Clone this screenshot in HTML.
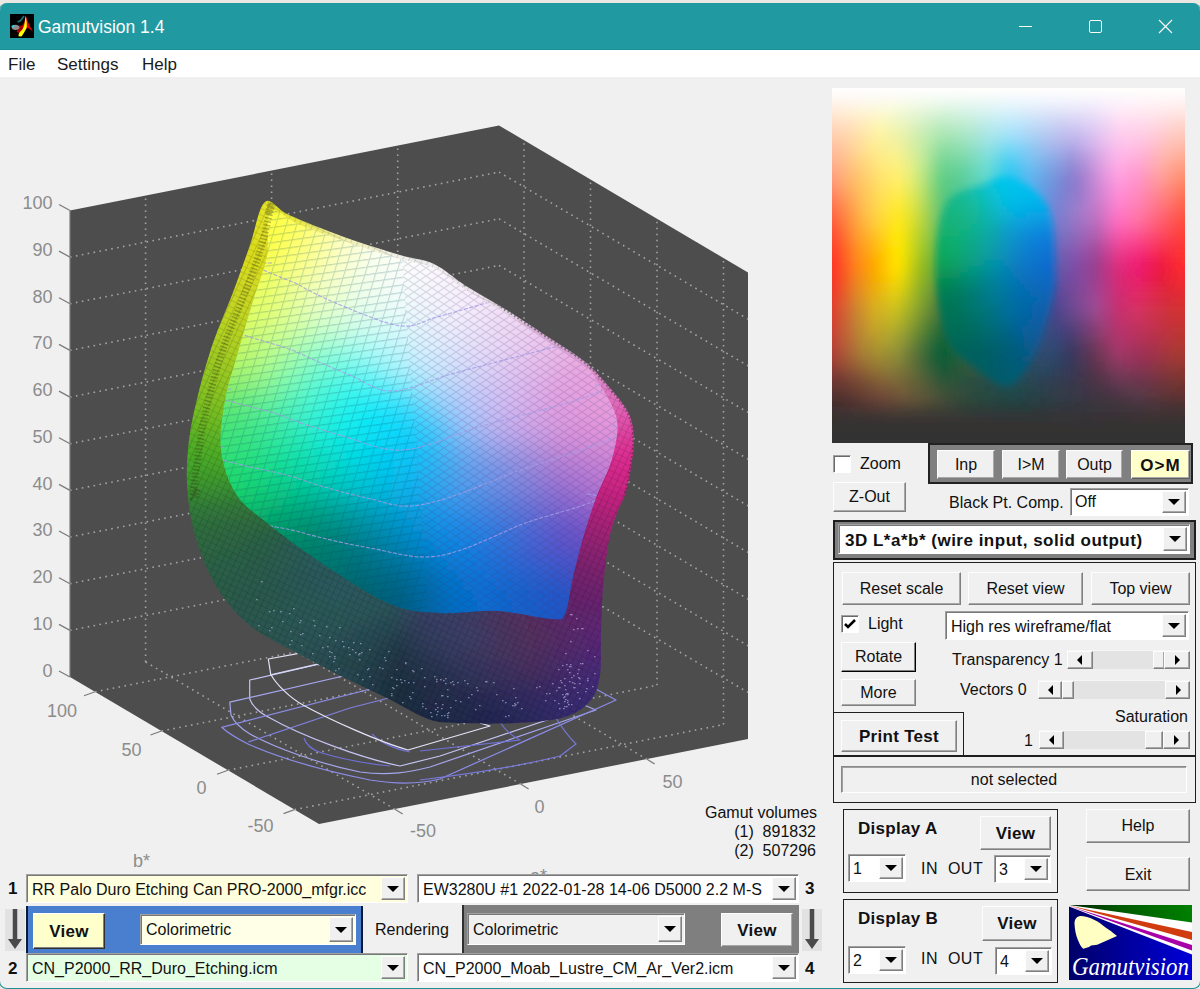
<!DOCTYPE html>
<html><head><meta charset="utf-8">
<style>
*{box-sizing:border-box;margin:0;padding:0}
html,body{width:1200px;height:989px;overflow:hidden;background:#ebe8e3;font-family:"Liberation Sans",sans-serif;}
.win{position:absolute;left:-1px;top:3px;width:1202px;height:986px;background:#f0f0f0;border-radius:8px;border:1px solid #1f8e95;border-top:none;overflow:hidden}
.title{position:absolute;left:0;top:0;width:1202px;height:47px;background:#2099a0;border-bottom:1px solid #1a9096}
.title .t{position:absolute;left:38px;top:14px;color:#fff;font-size:17.5px;}
.menu{position:absolute;left:0;top:47px;width:1202px;height:27px;background:#fff}
.menu span{position:absolute;top:5px;font-size:17px;color:#1a1a1a}
.a{position:absolute}
.txt{position:absolute;font-size:16px;color:#111;white-space:pre;line-height:1}
.bold{font-weight:bold;font-size:17px;letter-spacing:0.3px}
.btn{position:absolute;background:#f0f0f0;border:1px solid;border-color:#fdfdfd #808080 #808080 #fdfdfd;box-shadow:inset -1px -1px #a8a8a8;font-size:16px;color:#111;text-align:center;white-space:pre}
.btn span{position:absolute;left:0;right:0;line-height:1}
.sunk{position:absolute;border:1px solid;border-color:#a0a0a0 #fff #fff #a0a0a0;box-shadow:inset 1px 1px #787878;background:#fff}
.arrowbtn{position:absolute;top:2px;bottom:2px;right:2px;width:24px;background:#f0f0f0;border:1px solid;border-color:#fdfdfd #808080 #808080 #fdfdfd;box-shadow:inset -1px -1px #a8a8a8}
.arrowbtn:after{content:"";position:absolute;left:50%;top:50%;margin-left:-6px;margin-top:-3px;border-left:6px solid transparent;border-right:6px solid transparent;border-top:6px solid #000}
.frame{position:absolute;border:2px solid #1e1e1e}
.tl{font-size:18px;fill:#8c8c8c;font-family:"Liberation Sans",sans-serif}
.gd{stroke:#a4a4a4;stroke-width:1.6;stroke-dasharray:1.6 4.4;fill:none}
.ax{stroke:#7a7a7a;stroke-width:1.2}
.tk{stroke:#7a7a7a;stroke-width:1.2}
.cb{position:absolute;width:18px;height:18px;background:#fff;border:1px solid;border-color:#a0a0a0 #fff #fff #a0a0a0;box-shadow:inset 1px 1px #6a6a6a}
.slider{position:absolute;background:#e3e3e3;border-top:1px solid #f6f6f6}
.slider .sb{position:absolute;top:0;bottom:0;width:26px;background:#f0f0f0;border:1px solid;border-color:#fdfdfd #808080 #808080 #fdfdfd;box-shadow:inset -1px -1px #a8a8a8}
.sb.l:after{content:"";position:absolute;left:9px;top:50%;margin-top:-5px;border-top:5px solid transparent;border-bottom:5px solid transparent;border-right:5px solid #000}
.sb.r:after{content:"";position:absolute;left:10px;top:50%;margin-top:-5px;border-top:5px solid transparent;border-bottom:5px solid transparent;border-left:5px solid #000}
.thumb{position:absolute;top:0;bottom:0;background:#f0f0f0;border:1px solid;border-color:#fdfdfd #808080 #808080 #fdfdfd;box-shadow:inset -1px -1px #a8a8a8}
</style></head><body>
<div class="win">
  <div class="title">
    <svg class="a" style="left:9.5px;top:11px" width="24" height="24" viewBox="0 0 24 24">
      <rect width="24" height="24" fill="#000"/>
      <path d="M15.7,1 C17,6 19,11 23,17.5 L17.5,13.5 C15.5,16.5 12.5,18.5 9.5,19.5 L6.5,17.5 C9.5,14.5 12,12 14,9 C15,6 15.5,3.5 15.7,1 Z" fill="#e00000"/>
      <path d="M9,12 C11,11 13,12 13.5,14 C13,17 11,18.5 8.5,19 C7,17.5 7,14 9,12 Z" fill="#a80000"/>
      <path d="M15.5,2 C16.5,5 17,9 16.8,13 C16,16 13.5,19.5 11.5,22.5 L8.5,22.3 C8.3,19.5 10,17.5 12,16 C14,13.5 15,9 15.5,2 Z" fill="#ffff00"/>
      <ellipse cx="5.5" cy="13.3" rx="3.8" ry="2.6" fill="#8c8c8c"/>
      <path d="M1,12.3 L3.5,11 L5,11.5 L3,13.5 Z" fill="#20e0e8"/>
      <path d="M7.6,8 L10.6,6.5 L14,2" stroke="#157a7a" stroke-width="1.6" fill="none"/>
    </svg>
    <div class="t">Gamutvision 1.4</div>
    <svg class="a" style="left:999px;top:0" width="202" height="46">
      <line x1="20" y1="23.5" x2="33" y2="23.5" stroke="#fff" stroke-width="1"/>
      <rect x="90.5" y="17.5" width="12" height="12" rx="1.5" fill="none" stroke="#fff" stroke-width="1"/>
      <path d="M160 17 L173 30 M173 17 L160 30" stroke="#fff" stroke-width="1.1"/>
    </svg>
  </div>
  <div class="menu">
    <span style="left:8px">File</span>
    <span style="left:57px">Settings</span>
    <span style="left:142px">Help</span>
  </div>
</div>

<!-- plot -->
<svg class="a" style="left:0;top:0" width="830" height="989" viewBox="0 0 830 989">
<polygon points="70.0,210.5 499.0,125.5 748.0,272.5 748.0,739.0 319.0,824.0 70.0,677.0" fill="#4d4d4d"/>
<g><line x1="70.0" y1="630.4" x2="499.0" y2="545.4" class="gd"/><line x1="499.0" y1="545.4" x2="748.0" y2="692.4" class="gd"/><line x1="70.0" y1="583.7" x2="499.0" y2="498.7" class="gd"/><line x1="499.0" y1="498.7" x2="748.0" y2="645.7" class="gd"/><line x1="70.0" y1="537.0" x2="499.0" y2="452.1" class="gd"/><line x1="499.0" y1="452.1" x2="748.0" y2="599.0" class="gd"/><line x1="70.0" y1="490.4" x2="499.0" y2="405.4" class="gd"/><line x1="499.0" y1="405.4" x2="748.0" y2="552.4" class="gd"/><line x1="70.0" y1="443.8" x2="499.0" y2="358.8" class="gd"/><line x1="499.0" y1="358.8" x2="748.0" y2="505.8" class="gd"/><line x1="70.0" y1="397.1" x2="499.0" y2="312.1" class="gd"/><line x1="499.0" y1="312.1" x2="748.0" y2="459.1" class="gd"/><line x1="70.0" y1="350.4" x2="499.0" y2="265.4" class="gd"/><line x1="499.0" y1="265.4" x2="748.0" y2="412.4" class="gd"/><line x1="70.0" y1="303.8" x2="499.0" y2="218.8" class="gd"/><line x1="499.0" y1="218.8" x2="748.0" y2="365.8" class="gd"/><line x1="70.0" y1="257.1" x2="499.0" y2="172.1" class="gd"/><line x1="499.0" y1="172.1" x2="748.0" y2="319.1" class="gd"/><line x1="145.6" y1="662.0" x2="145.6" y2="195.5" class="gd"/><line x1="145.6" y1="662.0" x2="394.6" y2="809.0" class="gd"/><line x1="271.6" y1="637.0" x2="271.6" y2="170.5" class="gd"/><line x1="271.6" y1="637.0" x2="520.6" y2="784.0" class="gd"/><line x1="397.7" y1="612.1" x2="397.7" y2="145.6" class="gd"/><line x1="397.7" y1="612.1" x2="646.7" y2="759.1" class="gd"/><line x1="524.0" y1="606.8" x2="524.0" y2="140.3" class="gd"/><line x1="95.0" y1="691.8" x2="524.0" y2="606.8" class="gd"/><line x1="590.5" y1="646.0" x2="590.5" y2="179.5" class="gd"/><line x1="161.5" y1="731.0" x2="590.5" y2="646.0" class="gd"/><line x1="657.0" y1="685.3" x2="657.0" y2="218.8" class="gd"/><line x1="228.0" y1="770.3" x2="657.0" y2="685.3" class="gd"/><line x1="723.5" y1="724.6" x2="723.5" y2="258.1" class="gd"/><line x1="294.5" y1="809.6" x2="723.5" y2="724.6" class="gd"/></g>
<line x1="70.0" y1="677.0" x2="70.0" y2="210.5" class="ax"/>
<line x1="59.0" y1="671.0" x2="70.0" y2="677.0" class="tk"/><text x="52.5" y="676.7" text-anchor="end" class="tl">0</text><line x1="59.0" y1="624.4" x2="70.0" y2="630.4" class="tk"/><text x="52.5" y="629.9" text-anchor="end" class="tl">10</text><line x1="59.0" y1="577.7" x2="70.0" y2="583.7" class="tk"/><text x="52.5" y="583.2" text-anchor="end" class="tl">20</text><line x1="59.0" y1="531.0" x2="70.0" y2="537.0" class="tk"/><text x="52.5" y="536.4" text-anchor="end" class="tl">30</text><line x1="59.0" y1="484.4" x2="70.0" y2="490.4" class="tk"/><text x="52.5" y="489.6" text-anchor="end" class="tl">40</text><line x1="59.0" y1="437.8" x2="70.0" y2="443.8" class="tk"/><text x="52.5" y="442.8" text-anchor="end" class="tl">50</text><line x1="59.0" y1="391.1" x2="70.0" y2="397.1" class="tk"/><text x="52.5" y="396.1" text-anchor="end" class="tl">60</text><line x1="59.0" y1="344.4" x2="70.0" y2="350.4" class="tk"/><text x="52.5" y="349.3" text-anchor="end" class="tl">70</text><line x1="59.0" y1="297.8" x2="70.0" y2="303.8" class="tk"/><text x="52.5" y="302.5" text-anchor="end" class="tl">80</text><line x1="59.0" y1="251.1" x2="70.0" y2="257.1" class="tk"/><text x="52.5" y="255.8" text-anchor="end" class="tl">90</text><line x1="59.0" y1="204.5" x2="70.0" y2="210.5" class="tk"/><text x="52.5" y="209.0" text-anchor="end" class="tl">100</text><line x1="95.0" y1="691.8" x2="84.0" y2="695.8" class="tk"/><line x1="161.5" y1="731.0" x2="150.5" y2="735.0" class="tk"/><line x1="228.0" y1="770.3" x2="217.0" y2="774.3" class="tk"/><line x1="294.5" y1="809.6" x2="283.5" y2="813.6" class="tk"/><text x="77" y="716.5" text-anchor="end" class="tl">100</text><text x="141.5" y="755.5" text-anchor="end" class="tl">50</text><text x="206.5" y="793.5" text-anchor="end" class="tl">0</text><text x="273.5" y="832" text-anchor="end" class="tl">-50</text><line x1="394.6" y1="809.0" x2="402.6" y2="814.0" class="tk"/><line x1="520.6" y1="784.0" x2="528.6" y2="789.0" class="tk"/><line x1="646.7" y1="759.1" x2="654.7" y2="764.1" class="tk"/><text x="436" y="837" text-anchor="end" class="tl">-50</text><text x="544.5" y="812.5" text-anchor="end" class="tl">0</text><text x="682.5" y="787.5" text-anchor="end" class="tl">50</text>
<defs><linearGradient id="w0" gradientUnits="userSpaceOnUse" x1="170" x2="650" y1="0" y2="0"><stop offset="0" stop-color="#dede13"/><stop offset=".146" stop-color="#e1e11b"/><stop offset=".229" stop-color="#e6e62d"/><stop offset=".271" stop-color="#eaea43"/><stop offset=".312" stop-color="#eded68"/><stop offset=".354" stop-color="#efef93"/><stop offset=".396" stop-color="#f0f0b0"/><stop offset=".521" stop-color="#f0f0e9"/><stop offset=".625" stop-color="#eeebee"/><stop offset=".771" stop-color="#e8dde8"/><stop offset=".875" stop-color="#e6d5e5"/><stop offset=".958" stop-color="#d6aad0"/><stop offset="1" stop-color="#cc9ebd"/></linearGradient><linearGradient id="w1" gradientUnits="userSpaceOnUse" x1="170" x2="650" y1="0" y2="0"><stop offset="0" stop-color="#ddde14"/><stop offset=".167" stop-color="#e1e11d"/><stop offset=".229" stop-color="#e5e52d"/><stop offset=".271" stop-color="#e9e945"/><stop offset=".354" stop-color="#efef99"/><stop offset=".396" stop-color="#f0f0b3"/><stop offset=".5" stop-color="#f0f0e5"/><stop offset=".562" stop-color="#f0efef"/><stop offset=".771" stop-color="#e8dce8"/><stop offset=".854" stop-color="#e6d7e6"/><stop offset=".896" stop-color="#e1c4df"/><stop offset=".938" stop-color="#daafd6"/><stop offset="1" stop-color="#d5a5ce"/></linearGradient><linearGradient id="w2" gradientUnits="userSpaceOnUse" x1="170" x2="650" y1="0" y2="0"><stop offset="0" stop-color="#dcdd15"/><stop offset=".167" stop-color="#e0e01d"/><stop offset=".229" stop-color="#e4e52d"/><stop offset=".271" stop-color="#e9e947"/><stop offset=".354" stop-color="#efef9e"/><stop offset=".396" stop-color="#f0f0b7"/><stop offset=".5" stop-color="#f0f0e8"/><stop offset=".583" stop-color="#efedef"/><stop offset=".75" stop-color="#e8dde8"/><stop offset=".833" stop-color="#e7d8e6"/><stop offset=".875" stop-color="#e2c8e0"/><stop offset=".917" stop-color="#dbb1d8"/><stop offset="1" stop-color="#d7a7d3"/></linearGradient><linearGradient id="w3" gradientUnits="userSpaceOnUse" x1="170" x2="650" y1="0" y2="0"><stop offset="0" stop-color="#dadc16"/><stop offset=".167" stop-color="#dedf1d"/><stop offset=".229" stop-color="#e3e32c"/><stop offset=".271" stop-color="#e8e849"/><stop offset=".333" stop-color="#eeee90"/><stop offset=".375" stop-color="#f0f0b0"/><stop offset=".5" stop-color="#f0f0ea"/><stop offset=".583" stop-color="#efedee"/><stop offset=".729" stop-color="#e8dde8"/><stop offset=".833" stop-color="#e6d5e5"/><stop offset=".917" stop-color="#daadd6"/><stop offset="1" stop-color="#d8a8d4"/></linearGradient><linearGradient id="w4" gradientUnits="userSpaceOnUse" x1="170" x2="650" y1="0" y2="0"><stop offset="0" stop-color="#d8db18"/><stop offset=".167" stop-color="#ddde1c"/><stop offset=".229" stop-color="#e2e22c"/><stop offset=".25" stop-color="#e4e538"/><stop offset=".292" stop-color="#eaea63"/><stop offset=".333" stop-color="#eeee95"/><stop offset=".375" stop-color="#f0f0b3"/><stop offset=".479" stop-color="#f0f0e6"/><stop offset=".542" stop-color="#efefef"/><stop offset=".729" stop-color="#e8dde8"/><stop offset=".812" stop-color="#e6d7e6"/><stop offset=".854" stop-color="#e1c4df"/><stop offset=".896" stop-color="#daafd7"/><stop offset=".979" stop-color="#d8a8d4"/><stop offset="1" stop-color="#d8a8d4"/></linearGradient><linearGradient id="w5" gradientUnits="userSpaceOnUse" x1="170" x2="650" y1="0" y2="0"><stop offset="0" stop-color="#d5da1a"/><stop offset=".167" stop-color="#dbdd1c"/><stop offset=".229" stop-color="#e0e12b"/><stop offset=".25" stop-color="#e3e338"/><stop offset=".292" stop-color="#e9e966"/><stop offset=".333" stop-color="#eeee99"/><stop offset=".375" stop-color="#f0f0b6"/><stop offset=".479" stop-color="#f0f0e9"/><stop offset=".583" stop-color="#eeeaee"/><stop offset=".729" stop-color="#e8dce8"/><stop offset=".792" stop-color="#e7d8e7"/><stop offset=".833" stop-color="#e2c8e0"/><stop offset=".875" stop-color="#dbb1d8"/><stop offset=".938" stop-color="#d8a8d4"/><stop offset="1" stop-color="#d8a7d4"/></linearGradient><linearGradient id="w6" gradientUnits="userSpaceOnUse" x1="170" x2="650" y1="0" y2="0"><stop offset="0" stop-color="#d1d91c"/><stop offset=".188" stop-color="#dadc1f"/><stop offset=".229" stop-color="#dedf2a"/><stop offset=".25" stop-color="#e1e236"/><stop offset=".271" stop-color="#e4e54b"/><stop offset=".333" stop-color="#eeee9d"/><stop offset=".375" stop-color="#f0f0b9"/><stop offset=".458" stop-color="#f0f0e4"/><stop offset=".521" stop-color="#efefef"/><stop offset=".708" stop-color="#e8dde8"/><stop offset=".792" stop-color="#e6d5e5"/><stop offset=".875" stop-color="#daadd6"/><stop offset="1" stop-color="#d8a7d4"/></linearGradient><linearGradient id="w7" gradientUnits="userSpaceOnUse" x1="170" x2="650" y1="0" y2="0"><stop offset="0" stop-color="#cdd81e"/><stop offset=".188" stop-color="#d7db1f"/><stop offset=".229" stop-color="#dbde28"/><stop offset=".25" stop-color="#dee034"/><stop offset=".271" stop-color="#e2e349"/><stop offset=".312" stop-color="#ebeb86"/><stop offset=".333" stop-color="#edee9f"/><stop offset=".375" stop-color="#f0f0bc"/><stop offset=".458" stop-color="#f0f0e7"/><stop offset=".521" stop-color="#efeeef"/><stop offset=".708" stop-color="#e8dce8"/><stop offset=".771" stop-color="#e6d7e6"/><stop offset=".812" stop-color="#e1c4df"/><stop offset=".854" stop-color="#daafd7"/><stop offset=".958" stop-color="#d8a7d4"/><stop offset="1" stop-color="#d8a6d3"/></linearGradient><linearGradient id="w8" gradientUnits="userSpaceOnUse" x1="170" x2="650" y1="0" y2="0"><stop offset="0" stop-color="#c8d61f"/><stop offset=".208" stop-color="#d6db21"/><stop offset=".25" stop-color="#dbde31"/><stop offset=".271" stop-color="#dfe245"/><stop offset=".312" stop-color="#e9ea85"/><stop offset=".333" stop-color="#ededa0"/><stop offset=".375" stop-color="#eff0bf"/><stop offset=".438" stop-color="#f0f0e2"/><stop offset=".5" stop-color="#f0efee"/><stop offset=".688" stop-color="#e8dde8"/><stop offset=".771" stop-color="#e5d3e4"/><stop offset=".833" stop-color="#dbb1d8"/><stop offset=".896" stop-color="#d8a8d4"/><stop offset="1" stop-color="#d9a5d3"/></linearGradient><linearGradient id="w9" gradientUnits="userSpaceOnUse" x1="170" x2="650" y1="0" y2="0"><stop offset="0" stop-color="#c3d520"/><stop offset=".208" stop-color="#d2d921"/><stop offset=".25" stop-color="#d7dc2d"/><stop offset=".271" stop-color="#dcdf3f"/><stop offset=".333" stop-color="#ecec9f"/><stop offset=".375" stop-color="#efefc2"/><stop offset=".438" stop-color="#f0f0e5"/><stop offset=".5" stop-color="#efeeee"/><stop offset=".688" stop-color="#e8dce8"/><stop offset=".75" stop-color="#e6d5e5"/><stop offset=".833" stop-color="#daadd6"/><stop offset="1" stop-color="#d9a2d2"/></linearGradient><linearGradient id="w10" gradientUnits="userSpaceOnUse" x1="170" x2="650" y1="0" y2="0"><stop offset="0" stop-color="#bcd320"/><stop offset=".208" stop-color="#cfd820"/><stop offset=".25" stop-color="#d3da29"/><stop offset=".271" stop-color="#d7dd37"/><stop offset=".292" stop-color="#dde152"/><stop offset=".333" stop-color="#eaeb9b"/><stop offset=".375" stop-color="#efefc5"/><stop offset=".438" stop-color="#f0f0e8"/><stop offset=".521" stop-color="#eeecee"/><stop offset=".667" stop-color="#e8dce8"/><stop offset=".729" stop-color="#e6d7e6"/><stop offset=".771" stop-color="#e1c4df"/><stop offset=".812" stop-color="#daafd7"/><stop offset="1" stop-color="#da9fd1"/></linearGradient><linearGradient id="w11" gradientUnits="userSpaceOnUse" x1="170" x2="650" y1="0" y2="0"><stop offset="0" stop-color="#b7d220"/><stop offset=".229" stop-color="#ccd722"/><stop offset=".25" stop-color="#cfd825"/><stop offset=".271" stop-color="#d2db30"/><stop offset=".292" stop-color="#d8de46"/><stop offset=".333" stop-color="#e8ea93"/><stop offset=".354" stop-color="#ededb2"/><stop offset=".396" stop-color="#f0f0d7"/><stop offset=".438" stop-color="#f0f0ea"/><stop offset=".542" stop-color="#ede8ed"/><stop offset=".667" stop-color="#e8dce8"/><stop offset=".729" stop-color="#e5d3e4"/><stop offset=".792" stop-color="#dbb1d8"/><stop offset=".875" stop-color="#d8a7d4"/><stop offset=".979" stop-color="#da9fd1"/><stop offset="1" stop-color="#da9acf"/></linearGradient><linearGradient id="w12" gradientUnits="userSpaceOnUse" x1="170" x2="650" y1="0" y2="0"><stop offset="0" stop-color="#b2d020"/><stop offset=".25" stop-color="#c9d723"/><stop offset=".271" stop-color="#cdd829"/><stop offset=".292" stop-color="#d2db39"/><stop offset=".312" stop-color="#dae15a"/><stop offset=".354" stop-color="#ebecae"/><stop offset=".375" stop-color="#efefca"/><stop offset=".396" stop-color="#f0f0db"/><stop offset=".438" stop-color="#f0efeb"/><stop offset=".562" stop-color="#ebe3eb"/><stop offset=".708" stop-color="#e6d5e5"/><stop offset=".792" stop-color="#daadd6"/><stop offset=".958" stop-color="#da9fd1"/><stop offset="1" stop-color="#db94cd"/></linearGradient><linearGradient id="w13" gradientUnits="userSpaceOnUse" x1="170" x2="650" y1="0" y2="0"><stop offset="0" stop-color="#adcf20"/><stop offset=".25" stop-color="#c3d521"/><stop offset=".292" stop-color="#cbd82f"/><stop offset=".312" stop-color="#d2dd47"/><stop offset=".333" stop-color="#dee473"/><stop offset=".354" stop-color="#e8eba6"/><stop offset=".375" stop-color="#eeeecb"/><stop offset=".396" stop-color="#eff0de"/><stop offset=".438" stop-color="#f0efec"/><stop offset=".562" stop-color="#eae2ea"/><stop offset=".688" stop-color="#e6d7e6"/><stop offset=".729" stop-color="#e1c4df"/><stop offset=".771" stop-color="#daafd7"/><stop offset=".938" stop-color="#da9ed1"/><stop offset="1" stop-color="#dc8dcb"/></linearGradient><linearGradient id="w14" gradientUnits="userSpaceOnUse" x1="170" x2="650" y1="0" y2="0"><stop offset="0" stop-color="#a7cd20"/><stop offset=".271" stop-color="#bfd422"/><stop offset=".292" stop-color="#c3d527"/><stop offset=".312" stop-color="#c9d836"/><stop offset=".333" stop-color="#d4df5b"/><stop offset=".354" stop-color="#e3e897"/><stop offset=".375" stop-color="#ecedc9"/><stop offset=".396" stop-color="#efefe1"/><stop offset=".438" stop-color="#f0efed"/><stop offset=".667" stop-color="#e7d8e7"/><stop offset=".708" stop-color="#e2c8e0"/><stop offset=".75" stop-color="#dbb1d8"/><stop offset=".833" stop-color="#d8a7d4"/><stop offset=".917" stop-color="#da9ed1"/><stop offset="1" stop-color="#dd87c9"/></linearGradient><linearGradient id="w15" gradientUnits="userSpaceOnUse" x1="170" x2="650" y1="0" y2="0"><stop offset="0" stop-color="#a0cb20"/><stop offset=".292" stop-color="#bbd323"/><stop offset=".312" stop-color="#c0d52a"/><stop offset=".333" stop-color="#c9d943"/><stop offset=".354" stop-color="#d9e37e"/><stop offset=".375" stop-color="#e9ecc2"/><stop offset=".396" stop-color="#efefe1"/><stop offset=".417" stop-color="#f0efeb"/><stop offset=".521" stop-color="#ece5ec"/><stop offset=".667" stop-color="#e6d5e5"/><stop offset=".75" stop-color="#daadd6"/><stop offset=".896" stop-color="#da9ed1"/><stop offset="1" stop-color="#de81c7"/></linearGradient><linearGradient id="w16" gradientUnits="userSpaceOnUse" x1="170" x2="650" y1="0" y2="0"><stop offset="0" stop-color="#98c820"/><stop offset=".292" stop-color="#b5d121"/><stop offset=".312" stop-color="#b8d224"/><stop offset=".333" stop-color="#bed531"/><stop offset=".354" stop-color="#cddd5f"/><stop offset=".375" stop-color="#e3e9b2"/><stop offset=".396" stop-color="#edeee0"/><stop offset=".417" stop-color="#efefeb"/><stop offset=".521" stop-color="#ebe4eb"/><stop offset=".646" stop-color="#e6d7e6"/><stop offset=".688" stop-color="#e1c4df"/><stop offset=".729" stop-color="#daafd7"/><stop offset=".875" stop-color="#da9ed0"/><stop offset="1" stop-color="#df7cc5"/></linearGradient><linearGradient id="w17" gradientUnits="userSpaceOnUse" x1="170" x2="650" y1="0" y2="0"><stop offset="0" stop-color="#8fc520"/><stop offset=".271" stop-color="#afcf20"/><stop offset=".333" stop-color="#b6d227"/><stop offset=".354" stop-color="#c0d742"/><stop offset=".375" stop-color="#d8e394"/><stop offset=".396" stop-color="#ebedd9"/><stop offset=".417" stop-color="#efeeeb"/><stop offset=".521" stop-color="#ebe2eb"/><stop offset=".646" stop-color="#e5d3e4"/><stop offset=".708" stop-color="#dbb1d8"/><stop offset=".771" stop-color="#d8a7d4"/><stop offset=".875" stop-color="#db98ce"/><stop offset=".979" stop-color="#df7bc4"/><stop offset="1" stop-color="#df78c3"/></linearGradient><linearGradient id="w18" gradientUnits="userSpaceOnUse" x1="170" x2="650" y1="0" y2="0"><stop offset="0" stop-color="#88c320"/><stop offset=".333" stop-color="#b0d023"/><stop offset=".354" stop-color="#b5d230"/><stop offset=".375" stop-color="#cadc6d"/><stop offset=".396" stop-color="#e5eaca"/><stop offset=".417" stop-color="#eeede9"/><stop offset=".458" stop-color="#eeeaed"/><stop offset=".625" stop-color="#e6d5e5"/><stop offset=".708" stop-color="#daadd6"/><stop offset=".833" stop-color="#da9dd0"/><stop offset=".958" stop-color="#df79c3"/><stop offset="1" stop-color="#e074c1"/></linearGradient><linearGradient id="w19" gradientUnits="userSpaceOnUse" x1="170" x2="650" y1="0" y2="0"><stop offset="0" stop-color="#82c020"/><stop offset=".333" stop-color="#aace21"/><stop offset=".354" stop-color="#adcf26"/><stop offset=".375" stop-color="#bbd549"/><stop offset=".396" stop-color="#dbe5ac"/><stop offset=".417" stop-color="#ecece4"/><stop offset=".438" stop-color="#eeebed"/><stop offset=".604" stop-color="#e7d7e6"/><stop offset=".646" stop-color="#e1c4df"/><stop offset=".688" stop-color="#daafd7"/><stop offset=".833" stop-color="#db96ce"/><stop offset=".938" stop-color="#df76c1"/><stop offset="1" stop-color="#e06ebd"/></linearGradient><linearGradient id="w20" gradientUnits="userSpaceOnUse" x1="170" x2="650" y1="0" y2="0"><stop offset="0" stop-color="#7cbe21"/><stop offset=".208" stop-color="#91c620"/><stop offset=".354" stop-color="#a6cd22"/><stop offset=".375" stop-color="#aed032"/><stop offset=".396" stop-color="#cadd80"/><stop offset=".417" stop-color="#e7e9d8"/><stop offset=".438" stop-color="#edeaeb"/><stop offset=".583" stop-color="#e7d9e7"/><stop offset=".625" stop-color="#e2c8e0"/><stop offset=".667" stop-color="#dbb1d7"/><stop offset=".812" stop-color="#db95cd"/><stop offset=".917" stop-color="#df72bf"/><stop offset="1" stop-color="#e067b9"/></linearGradient><linearGradient id="w21" gradientUnits="userSpaceOnUse" x1="170" x2="650" y1="0" y2="0"><stop offset="0" stop-color="#74bc22"/><stop offset=".25" stop-color="#8dc420"/><stop offset=".354" stop-color="#9dca21"/><stop offset=".375" stop-color="#a2cb27"/><stop offset=".396" stop-color="#b5d353"/><stop offset=".417" stop-color="#dde4bd"/><stop offset=".438" stop-color="#ebe8e7"/><stop offset=".479" stop-color="#ebe3ea"/><stop offset=".583" stop-color="#e6d5e5"/><stop offset=".667" stop-color="#daacd6"/><stop offset=".771" stop-color="#da9ace"/><stop offset=".875" stop-color="#df72be"/><stop offset="1" stop-color="#e05db2"/></linearGradient><linearGradient id="w22" gradientUnits="userSpaceOnUse" x1="170" x2="650" y1="0" y2="0"><stop offset="0" stop-color="#6bb823"/><stop offset=".292" stop-color="#88c321"/><stop offset=".375" stop-color="#96c723"/><stop offset=".396" stop-color="#a1cb36"/><stop offset=".417" stop-color="#c7d88f"/><stop offset=".438" stop-color="#e5e3db"/><stop offset=".458" stop-color="#e9e3e8"/><stop offset=".562" stop-color="#e7d7e6"/><stop offset=".604" stop-color="#e1c4df"/><stop offset=".646" stop-color="#daaed6"/><stop offset=".75" stop-color="#da97cd"/><stop offset=".854" stop-color="#de6bb9"/><stop offset=".958" stop-color="#df56ae"/><stop offset="1" stop-color="#df51aa"/></linearGradient><linearGradient id="w23" gradientUnits="userSpaceOnUse" x1="170" x2="650" y1="0" y2="0"><stop offset="0" stop-color="#60b424"/><stop offset=".354" stop-color="#86c221"/><stop offset=".396" stop-color="#8fc329"/><stop offset=".417" stop-color="#a5c65c"/><stop offset=".438" stop-color="#d0d3bc"/><stop offset=".458" stop-color="#e2dbde"/><stop offset=".5" stop-color="#e7dce7"/><stop offset=".562" stop-color="#e5d3e4"/><stop offset=".625" stop-color="#dbb0d7"/><stop offset=".729" stop-color="#da92ca"/><stop offset=".833" stop-color="#de60b2"/><stop offset=".958" stop-color="#df4aa5"/><stop offset="1" stop-color="#df45a2"/></linearGradient><linearGradient id="w24" gradientUnits="userSpaceOnUse" x1="170" x2="650" y1="0" y2="0"><stop offset="0" stop-color="#56b025"/><stop offset=".375" stop-color="#7bbb24"/><stop offset=".396" stop-color="#78b32c"/><stop offset=".417" stop-color="#73a047"/><stop offset=".438" stop-color="#869b7c"/><stop offset=".458" stop-color="#b2b4b0"/><stop offset=".479" stop-color="#d2cacf"/><stop offset=".5" stop-color="#dfd4dd"/><stop offset=".542" stop-color="#e4d3e3"/><stop offset=".583" stop-color="#dfbfdc"/><stop offset=".625" stop-color="#daa9d4"/><stop offset=".688" stop-color="#d995ca"/><stop offset=".792" stop-color="#dc5bad"/><stop offset=".875" stop-color="#dd47a2"/><stop offset="1" stop-color="#de3a9b"/></linearGradient><linearGradient id="w25" gradientUnits="userSpaceOnUse" x1="170" x2="650" y1="0" y2="0"><stop offset="0" stop-color="#4dac27"/><stop offset=".333" stop-color="#69b524"/><stop offset=".354" stop-color="#68b227"/><stop offset=".375" stop-color="#60a430"/><stop offset=".417" stop-color="#3e6e54"/><stop offset=".438" stop-color="#3c665e"/><stop offset=".458" stop-color="#4c6c69"/><stop offset=".479" stop-color="#738483"/><stop offset=".5" stop-color="#a9a8ac"/><stop offset=".521" stop-color="#ccc0ca"/><stop offset=".542" stop-color="#dac6d7"/><stop offset=".583" stop-color="#dbb3d6"/><stop offset=".667" stop-color="#d789c3"/><stop offset=".75" stop-color="#d953a6"/><stop offset=".812" stop-color="#da419d"/><stop offset="1" stop-color="#dd3295"/></linearGradient><linearGradient id="w26" gradientUnits="userSpaceOnUse" x1="170" x2="650" y1="0" y2="0"><stop offset="0" stop-color="#47a928"/><stop offset=".312" stop-color="#59ad27"/><stop offset=".333" stop-color="#57a72b"/><stop offset=".354" stop-color="#4d9537"/><stop offset=".375" stop-color="#3d774a"/><stop offset=".396" stop-color="#316456"/><stop offset=".438" stop-color="#2d5c5c"/><stop offset=".479" stop-color="#355f5f"/><stop offset=".5" stop-color="#476768"/><stop offset=".521" stop-color="#717e82"/><stop offset=".542" stop-color="#ab9caa"/><stop offset=".562" stop-color="#cba6c4"/><stop offset=".583" stop-color="#d49fc9"/><stop offset=".646" stop-color="#d272b3"/><stop offset=".688" stop-color="#d153a2"/><stop offset=".729" stop-color="#d24098"/><stop offset=".812" stop-color="#d63392"/><stop offset="1" stop-color="#dc2c90"/></linearGradient><linearGradient id="w27" gradientUnits="userSpaceOnUse" x1="170" x2="650" y1="0" y2="0"><stop offset="0" stop-color="#43a529"/><stop offset=".292" stop-color="#4ba32b"/><stop offset=".312" stop-color="#499c2f"/><stop offset=".333" stop-color="#41893c"/><stop offset=".354" stop-color="#346f4e"/><stop offset=".375" stop-color="#2d6058"/><stop offset=".458" stop-color="#2b5a5c"/><stop offset=".5" stop-color="#2f5c5d"/><stop offset=".521" stop-color="#375e60"/><stop offset=".542" stop-color="#54676e"/><stop offset=".562" stop-color="#937691"/><stop offset=".583" stop-color="#bd71a7"/><stop offset=".604" stop-color="#c460a3"/><stop offset=".646" stop-color="#c44393"/><stop offset=".708" stop-color="#c7308a"/><stop offset=".979" stop-color="#d9298d"/><stop offset="1" stop-color="#d9298d"/></linearGradient><linearGradient id="w28" gradientUnits="userSpaceOnUse" x1="170" x2="650" y1="0" y2="0"><stop offset="0" stop-color="#3f9f2b"/><stop offset=".271" stop-color="#41992e"/><stop offset=".292" stop-color="#3f9233"/><stop offset=".333" stop-color="#316a50"/><stop offset=".354" stop-color="#2c5f59"/><stop offset=".458" stop-color="#2a5a5c"/><stop offset=".521" stop-color="#2d5a5d"/><stop offset=".542" stop-color="#345b5f"/><stop offset=".562" stop-color="#53576a"/><stop offset=".583" stop-color="#95447f"/><stop offset=".604" stop-color="#ad3483"/><stop offset=".667" stop-color="#b7287f"/><stop offset=".979" stop-color="#d52789"/><stop offset="1" stop-color="#d6278a"/></linearGradient><linearGradient id="w29" gradientUnits="userSpaceOnUse" x1="170" x2="650" y1="0" y2="0"><stop offset="0" stop-color="#3c972e"/><stop offset=".25" stop-color="#3a8d32"/><stop offset=".271" stop-color="#398736"/><stop offset=".312" stop-color="#2f6850"/><stop offset=".333" stop-color="#2b5e58"/><stop offset=".5" stop-color="#2a5a5c"/><stop offset=".542" stop-color="#2d595d"/><stop offset=".562" stop-color="#3a5361"/><stop offset=".583" stop-color="#6e3a6e"/><stop offset=".604" stop-color="#982876"/><stop offset=".646" stop-color="#a82378"/><stop offset=".958" stop-color="#cf2585"/><stop offset="1" stop-color="#d22587"/></linearGradient><linearGradient id="w30" gradientUnits="userSpaceOnUse" x1="170" x2="650" y1="0" y2="0"><stop offset="0" stop-color="#388c32"/><stop offset=".229" stop-color="#358137"/><stop offset=".271" stop-color="#327441"/><stop offset=".312" stop-color="#2b5e58"/><stop offset=".479" stop-color="#2a5a5c"/><stop offset=".542" stop-color="#2c585d"/><stop offset=".562" stop-color="#335160"/><stop offset=".583" stop-color="#513f68"/><stop offset=".604" stop-color="#7d2b70"/><stop offset=".625" stop-color="#942374"/><stop offset=".667" stop-color="#a12176"/><stop offset="1" stop-color="#cc2483"/></linearGradient><linearGradient id="w31" gradientUnits="userSpaceOnUse" x1="170" x2="650" y1="0" y2="0"><stop offset="0" stop-color="#348036"/><stop offset=".229" stop-color="#31743c"/><stop offset=".271" stop-color="#2d664c"/><stop offset=".312" stop-color="#2a5b5a"/><stop offset=".542" stop-color="#2c575d"/><stop offset=".562" stop-color="#324f61"/><stop offset=".583" stop-color="#424167"/><stop offset=".625" stop-color="#7f2771"/><stop offset=".646" stop-color="#902273"/><stop offset=".729" stop-color="#a02175"/><stop offset="1" stop-color="#c42380"/></linearGradient><linearGradient id="w32" gradientUnits="userSpaceOnUse" x1="170" x2="650" y1="0" y2="0"><stop offset="0" stop-color="#32763a"/><stop offset=".208" stop-color="#2f6e3e"/><stop offset=".25" stop-color="#2d6649"/><stop offset=".292" stop-color="#2a5c59"/><stop offset=".521" stop-color="#2b595d"/><stop offset=".562" stop-color="#344c62"/><stop offset=".583" stop-color="#3c4266"/><stop offset=".604" stop-color="#4b3a69"/><stop offset=".646" stop-color="#7f2670"/><stop offset=".667" stop-color="#8b2273"/><stop offset="1" stop-color="#bb227c"/></linearGradient><linearGradient id="w33" gradientUnits="userSpaceOnUse" x1="170" x2="650" y1="0" y2="0"><stop offset="0" stop-color="#30703c"/><stop offset=".208" stop-color="#2e6841"/><stop offset=".292" stop-color="#2a5b5a"/><stop offset=".521" stop-color="#2b585d"/><stop offset=".604" stop-color="#423d68"/><stop offset=".625" stop-color="#513669"/><stop offset=".667" stop-color="#7d2470"/><stop offset=".708" stop-color="#8c2173"/><stop offset="1" stop-color="#b12179"/></linearGradient><linearGradient id="w34" gradientUnits="userSpaceOnUse" x1="170" x2="650" y1="0" y2="0"><stop offset="0" stop-color="#2f6c3d"/><stop offset=".208" stop-color="#2c6345"/><stop offset=".292" stop-color="#2a5a5b"/><stop offset=".521" stop-color="#2c575e"/><stop offset=".583" stop-color="#3b4167"/><stop offset=".625" stop-color="#463a67"/><stop offset=".646" stop-color="#563369"/><stop offset=".667" stop-color="#6c296c"/><stop offset=".688" stop-color="#7b246f"/><stop offset=".771" stop-color="#8b2073"/><stop offset="1" stop-color="#a72177"/></linearGradient><linearGradient id="w35" gradientUnits="userSpaceOnUse" x1="170" x2="650" y1="0" y2="0"><stop offset="0" stop-color="#2e6a3e"/><stop offset=".208" stop-color="#2c5f48"/><stop offset=".271" stop-color="#2a5a59"/><stop offset=".5" stop-color="#2b595d"/><stop offset=".562" stop-color="#384366"/><stop offset=".625" stop-color="#413c66"/><stop offset=".646" stop-color="#4b3866"/><stop offset=".688" stop-color="#6d276b"/><stop offset=".729" stop-color="#7e216f"/><stop offset="1" stop-color="#9e2175"/></linearGradient><linearGradient id="w36" gradientUnits="userSpaceOnUse" x1="170" x2="650" y1="0" y2="0"><stop offset="0" stop-color="#2e683f"/><stop offset=".188" stop-color="#2b5e47"/><stop offset=".292" stop-color="#2a5a5b"/><stop offset=".5" stop-color="#2b585d"/><stop offset=".562" stop-color="#394267"/><stop offset=".646" stop-color="#453a65"/><stop offset=".708" stop-color="#6d2669"/><stop offset=".75" stop-color="#79216e"/><stop offset="1" stop-color="#942074"/></linearGradient><linearGradient id="w37" gradientUnits="userSpaceOnUse" x1="170" x2="650" y1="0" y2="0"><stop offset="0" stop-color="#2d6641"/><stop offset=".208" stop-color="#2b5b4c"/><stop offset=".292" stop-color="#2a5a5b"/><stop offset=".479" stop-color="#2a595c"/><stop offset=".521" stop-color="#314e61"/><stop offset=".562" stop-color="#3a4167"/><stop offset=".646" stop-color="#423b65"/><stop offset=".708" stop-color="#622a65"/><stop offset=".75" stop-color="#71236b"/><stop offset="1" stop-color="#8b2073"/></linearGradient><linearGradient id="w38" gradientUnits="userSpaceOnUse" x1="170" x2="650" y1="0" y2="0"><stop offset="0" stop-color="#2c6342"/><stop offset=".208" stop-color="#2b5a4d"/><stop offset=".292" stop-color="#2a595a"/><stop offset=".479" stop-color="#2b585c"/><stop offset=".542" stop-color="#384366"/><stop offset=".646" stop-color="#413c65"/><stop offset=".729" stop-color="#632864"/><stop offset=".792" stop-color="#70226b"/><stop offset="1" stop-color="#812172"/></linearGradient><linearGradient id="w39" gradientUnits="userSpaceOnUse" x1="170" x2="650" y1="0" y2="0"><stop offset="0" stop-color="#2c6044"/><stop offset=".208" stop-color="#2b594e"/><stop offset=".312" stop-color="#2a595b"/><stop offset=".479" stop-color="#2b565c"/><stop offset=".542" stop-color="#394266"/><stop offset=".646" stop-color="#413c65"/><stop offset=".729" stop-color="#5d2b62"/><stop offset=".812" stop-color="#6c226b"/><stop offset="1" stop-color="#772172"/></linearGradient><linearGradient id="w40" gradientUnits="userSpaceOnUse" x1="170" x2="650" y1="0" y2="0"><stop offset="0" stop-color="#2b5e46"/><stop offset=".188" stop-color="#2c594c"/><stop offset=".333" stop-color="#2a595b"/><stop offset=".479" stop-color="#2c545c"/><stop offset=".521" stop-color="#364464"/><stop offset=".646" stop-color="#403c65"/><stop offset=".729" stop-color="#582e60"/><stop offset=".812" stop-color="#67236a"/><stop offset="1" stop-color="#6f2272"/></linearGradient><linearGradient id="w41" gradientUnits="userSpaceOnUse" x1="170" x2="650" y1="0" y2="0"><stop offset="0" stop-color="#2b5c47"/><stop offset=".208" stop-color="#2c584f"/><stop offset=".354" stop-color="#2a585a"/><stop offset=".458" stop-color="#2a545a"/><stop offset=".542" stop-color="#394066"/><stop offset=".646" stop-color="#403c65"/><stop offset=".75" stop-color="#5a2c60"/><stop offset=".854" stop-color="#65236d"/><stop offset="1" stop-color="#682373"/></linearGradient><linearGradient id="w42" gradientUnits="userSpaceOnUse" x1="170" x2="650" y1="0" y2="0"><stop offset="0" stop-color="#2a5b47"/><stop offset=".25" stop-color="#2c5753"/><stop offset=".396" stop-color="#295559"/><stop offset=".458" stop-color="#295057"/><stop offset=".521" stop-color="#354062"/><stop offset=".625" stop-color="#3d3e66"/><stop offset=".729" stop-color="#53315e"/><stop offset=".833" stop-color="#60256c"/><stop offset="1" stop-color="#632474"/></linearGradient><linearGradient id="w43" gradientUnits="userSpaceOnUse" x1="170" x2="650" y1="0" y2="0"><stop offset="0" stop-color="#2a5a48"/><stop offset=".354" stop-color="#2a5457"/><stop offset=".458" stop-color="#284a54"/><stop offset=".521" stop-color="#333e5f"/><stop offset=".604" stop-color="#3b3e66"/><stop offset=".75" stop-color="#552f5e"/><stop offset=".875" stop-color="#5e2572"/><stop offset="1" stop-color="#5f2576"/></linearGradient><linearGradient id="w44" gradientUnits="userSpaceOnUse" x1="170" x2="650" y1="0" y2="0"><stop offset="0" stop-color="#2a5a48"/><stop offset=".333" stop-color="#2a5256"/><stop offset=".438" stop-color="#274952"/><stop offset=".479" stop-color="#273f50"/><stop offset=".542" stop-color="#343c60"/><stop offset=".625" stop-color="#3c3d65"/><stop offset=".75" stop-color="#53305e"/><stop offset=".896" stop-color="#5b2675"/><stop offset="1" stop-color="#5c2678"/></linearGradient><linearGradient id="w45" gradientUnits="userSpaceOnUse" x1="170" x2="650" y1="0" y2="0"><stop offset="0" stop-color="#2a5a48"/><stop offset=".312" stop-color="#2a5154"/><stop offset=".438" stop-color="#25444e"/><stop offset=".479" stop-color="#243a4b"/><stop offset=".542" stop-color="#313a5c"/><stop offset=".625" stop-color="#3b3c64"/><stop offset=".75" stop-color="#51305e"/><stop offset=".896" stop-color="#562776"/><stop offset="1" stop-color="#59277a"/></linearGradient><linearGradient id="w46" gradientUnits="userSpaceOnUse" x1="170" x2="650" y1="0" y2="0"><stop offset="0" stop-color="#2a5a48"/><stop offset=".292" stop-color="#2a5053"/><stop offset=".417" stop-color="#25444e"/><stop offset=".479" stop-color="#213647"/><stop offset=".583" stop-color="#343a5f"/><stop offset=".688" stop-color="#44365f"/><stop offset=".771" stop-color="#4e2e60"/><stop offset=".875" stop-color="#502875"/><stop offset="1" stop-color="#55287b"/></linearGradient><linearGradient id="w47" gradientUnits="userSpaceOnUse" x1="170" x2="650" y1="0" y2="0"><stop offset="0" stop-color="#2a5a49"/><stop offset=".271" stop-color="#2b5152"/><stop offset=".417" stop-color="#24414b"/><stop offset=".479" stop-color="#1f3344"/><stop offset=".604" stop-color="#32375d"/><stop offset=".75" stop-color="#492f5f"/><stop offset=".896" stop-color="#4b2978"/><stop offset="1" stop-color="#50287b"/></linearGradient><linearGradient id="w48" gradientUnits="userSpaceOnUse" x1="170" x2="650" y1="0" y2="0"><stop offset="0" stop-color="#2b5949"/><stop offset=".25" stop-color="#2c5251"/><stop offset=".375" stop-color="#26464f"/><stop offset=".479" stop-color="#1e3142"/><stop offset=".625" stop-color="#30345b"/><stop offset=".75" stop-color="#432e5f"/><stop offset=".896" stop-color="#452977"/><stop offset="1" stop-color="#4a297b"/></linearGradient><linearGradient id="w49" gradientUnits="userSpaceOnUse" x1="170" x2="650" y1="0" y2="0"><stop offset="0" stop-color="#2b594a"/><stop offset=".25" stop-color="#2b5051"/><stop offset=".375" stop-color="#25444d"/><stop offset=".479" stop-color="#1c2f40"/><stop offset=".667" stop-color="#32305a"/><stop offset=".771" stop-color="#3d2c63"/><stop offset=".896" stop-color="#402a77"/><stop offset="1" stop-color="#44297a"/></linearGradient><linearGradient id="w50" gradientUnits="userSpaceOnUse" x1="170" x2="650" y1="0" y2="0"><stop offset="0" stop-color="#2b594a"/><stop offset=".229" stop-color="#2c5151"/><stop offset=".375" stop-color="#24414c"/><stop offset=".479" stop-color="#1c2e3f"/><stop offset=".646" stop-color="#292c54"/><stop offset=".771" stop-color="#372b63"/><stop offset=".896" stop-color="#3d2a77"/><stop offset="1" stop-color="#402a79"/></linearGradient><linearGradient id="w51" gradientUnits="userSpaceOnUse" x1="170" x2="650" y1="0" y2="0"><stop offset="0" stop-color="#2c584b"/><stop offset=".208" stop-color="#2c5251"/><stop offset=".354" stop-color="#25434d"/><stop offset=".458" stop-color="#1c2e3f"/><stop offset=".646" stop-color="#252a51"/><stop offset=".812" stop-color="#362a6b"/><stop offset=".917" stop-color="#3c2a77"/><stop offset="1" stop-color="#3d2a79"/></linearGradient><linearGradient id="w52" gradientUnits="userSpaceOnUse" x1="170" x2="650" y1="0" y2="0"><stop offset="0" stop-color="#2c584c"/><stop offset=".208" stop-color="#2c5251"/><stop offset=".333" stop-color="#25444e"/><stop offset=".458" stop-color="#1b2d3e"/><stop offset=".646" stop-color="#222850"/><stop offset=".875" stop-color="#392a74"/><stop offset="1" stop-color="#3c2a78"/></linearGradient><linearGradient id="w53" gradientUnits="userSpaceOnUse" x1="170" x2="650" y1="0" y2="0"><stop offset="0" stop-color="#2c584d"/><stop offset=".208" stop-color="#2b5151"/><stop offset=".333" stop-color="#24424c"/><stop offset=".438" stop-color="#1b2e3e"/><stop offset=".604" stop-color="#1e2649"/><stop offset=".917" stop-color="#3a2a76"/><stop offset="1" stop-color="#3b2a78"/></linearGradient><linearGradient id="w54" gradientUnits="userSpaceOnUse" x1="170" x2="650" y1="0" y2="0"><stop offset="0" stop-color="#2d574e"/><stop offset=".188" stop-color="#2c5251"/><stop offset=".333" stop-color="#23404a"/><stop offset=".438" stop-color="#1b2d3e"/><stop offset=".625" stop-color="#1e264b"/><stop offset=".792" stop-color="#2e2a65"/><stop offset=".917" stop-color="#392a76"/><stop offset="1" stop-color="#3a2a78"/></linearGradient><linearGradient id="s0" gradientUnits="userSpaceOnUse" x1="200" x2="640" y1="0" y2="0"><stop offset="0" stop-color="#fdff28"/><stop offset=".114" stop-color="#ffff35"/><stop offset=".182" stop-color="#ffff48"/><stop offset=".227" stop-color="#ffff60"/><stop offset=".341" stop-color="#ffffc2"/><stop offset=".409" stop-color="#feffe7"/><stop offset=".477" stop-color="#fffefa"/><stop offset=".659" stop-color="#fef5fe"/><stop offset=".932" stop-color="#f2d0f0"/><stop offset="1" stop-color="#eec4eb"/></linearGradient><linearGradient id="s1" gradientUnits="userSpaceOnUse" x1="200" x2="640" y1="0" y2="0"><stop offset="0" stop-color="#fbff2a"/><stop offset=".114" stop-color="#feff37"/><stop offset=".182" stop-color="#ffff4d"/><stop offset=".227" stop-color="#ffff66"/><stop offset=".341" stop-color="#feffc6"/><stop offset=".432" stop-color="#fefff2"/><stop offset=".523" stop-color="#fefcfe"/><stop offset=".705" stop-color="#fceffc"/><stop offset="1" stop-color="#f0c2ea"/></linearGradient><linearGradient id="s2" gradientUnits="userSpaceOnUse" x1="200" x2="640" y1="0" y2="0"><stop offset="0" stop-color="#f7ff2d"/><stop offset=".114" stop-color="#fdff3b"/><stop offset=".182" stop-color="#feff52"/><stop offset=".227" stop-color="#feff6d"/><stop offset=".318" stop-color="#feffbb"/><stop offset=".386" stop-color="#fdffe2"/><stop offset=".455" stop-color="#fefef8"/><stop offset=".591" stop-color="#fef8ff"/><stop offset=".841" stop-color="#f5dbf5"/><stop offset="1" stop-color="#f0bfe8"/></linearGradient><linearGradient id="s3" gradientUnits="userSpaceOnUse" x1="200" x2="640" y1="0" y2="0"><stop offset="0" stop-color="#f2ff30"/><stop offset=".114" stop-color="#fbff3f"/><stop offset=".182" stop-color="#fdff58"/><stop offset=".25" stop-color="#feff88"/><stop offset=".318" stop-color="#fdffc0"/><stop offset=".386" stop-color="#fcffe6"/><stop offset=".455" stop-color="#fdfef9"/><stop offset=".568" stop-color="#fef9ff"/><stop offset=".75" stop-color="#f8e5f8"/><stop offset="1" stop-color="#f0bbe7"/></linearGradient><linearGradient id="s4" gradientUnits="userSpaceOnUse" x1="200" x2="640" y1="0" y2="0"><stop offset="0" stop-color="#eeff33"/><stop offset=".114" stop-color="#f7ff43"/><stop offset=".182" stop-color="#fbff5f"/><stop offset=".25" stop-color="#fcff91"/><stop offset=".318" stop-color="#fcffc6"/><stop offset=".386" stop-color="#fbffe8"/><stop offset=".455" stop-color="#fcfefa"/><stop offset=".614" stop-color="#fdf5fe"/><stop offset=".886" stop-color="#f2cdef"/><stop offset="1" stop-color="#f0b8e5"/></linearGradient><linearGradient id="s5" gradientUnits="userSpaceOnUse" x1="200" x2="640" y1="0" y2="0"><stop offset="0" stop-color="#eaff36"/><stop offset=".091" stop-color="#f0ff42"/><stop offset=".159" stop-color="#f6ff5b"/><stop offset=".227" stop-color="#faff89"/><stop offset=".318" stop-color="#f9ffcb"/><stop offset=".386" stop-color="#f8ffeb"/><stop offset=".477" stop-color="#fbfdfd"/><stop offset=".682" stop-color="#faebfa"/><stop offset=".977" stop-color="#f0bae6"/><stop offset="1" stop-color="#f0b5e3"/></linearGradient><linearGradient id="s6" gradientUnits="userSpaceOnUse" x1="200" x2="640" y1="0" y2="0"><stop offset="0" stop-color="#e8fe38"/><stop offset=".091" stop-color="#ecff47"/><stop offset=".159" stop-color="#f2ff62"/><stop offset=".295" stop-color="#f7ffc4"/><stop offset=".386" stop-color="#f5feed"/><stop offset=".477" stop-color="#f9fcfd"/><stop offset=".659" stop-color="#faecfb"/><stop offset=".932" stop-color="#f0bfe9"/><stop offset="1" stop-color="#f0b2e2"/></linearGradient><linearGradient id="s7" gradientUnits="userSpaceOnUse" x1="200" x2="640" y1="0" y2="0"><stop offset="0" stop-color="#e6fe3b"/><stop offset=".091" stop-color="#e9ff4b"/><stop offset=".159" stop-color="#edff69"/><stop offset=".273" stop-color="#f3ffbc"/><stop offset=".364" stop-color="#f1ffe7"/><stop offset=".455" stop-color="#f5fcfb"/><stop offset=".614" stop-color="#faf0fc"/><stop offset=".864" stop-color="#f1c9ee"/><stop offset="1" stop-color="#f0b0e0"/></linearGradient><linearGradient id="s8" gradientUnits="userSpaceOnUse" x1="200" x2="640" y1="0" y2="0"><stop offset="0" stop-color="#e3fd3d"/><stop offset=".091" stop-color="#e6fe50"/><stop offset=".159" stop-color="#e9ff6f"/><stop offset=".273" stop-color="#eeffc0"/><stop offset=".364" stop-color="#edfee9"/><stop offset=".455" stop-color="#f2fcfb"/><stop offset=".636" stop-color="#f8ebfb"/><stop offset=".886" stop-color="#f0c2ea"/><stop offset="1" stop-color="#f0aedf"/></linearGradient><linearGradient id="s9" gradientUnits="userSpaceOnUse" x1="200" x2="640" y1="0" y2="0"><stop offset="0" stop-color="#dffc40"/><stop offset=".091" stop-color="#e3fd55"/><stop offset=".159" stop-color="#e5fe74"/><stop offset=".273" stop-color="#e8ffc3"/><stop offset=".364" stop-color="#e6feea"/><stop offset=".455" stop-color="#edfbfb"/><stop offset=".591" stop-color="#f6effc"/><stop offset=".818" stop-color="#f1cbef"/><stop offset="1" stop-color="#f0acde"/></linearGradient><linearGradient id="s10" gradientUnits="userSpaceOnUse" x1="200" x2="640" y1="0" y2="0"><stop offset="0" stop-color="#d9fa43"/><stop offset=".091" stop-color="#defd5a"/><stop offset=".159" stop-color="#dffe79"/><stop offset=".273" stop-color="#deffc5"/><stop offset=".364" stop-color="#ddfdeb"/><stop offset=".455" stop-color="#e7fafb"/><stop offset=".591" stop-color="#f3edfc"/><stop offset=".795" stop-color="#f1ccef"/><stop offset=".977" stop-color="#f0acdf"/><stop offset="1" stop-color="#f0aade"/></linearGradient><linearGradient id="s11" gradientUnits="userSpaceOnUse" x1="200" x2="640" y1="0" y2="0"><stop offset="0" stop-color="#d2f846"/><stop offset=".091" stop-color="#d8fb5e"/><stop offset=".182" stop-color="#d7fe8c"/><stop offset=".273" stop-color="#cffec6"/><stop offset=".364" stop-color="#d1fdec"/><stop offset=".455" stop-color="#def9fc"/><stop offset=".568" stop-color="#eeeefc"/><stop offset=".773" stop-color="#f0cef0"/><stop offset=".955" stop-color="#efacdf"/><stop offset="1" stop-color="#f0a9dd"/></linearGradient><linearGradient id="s12" gradientUnits="userSpaceOnUse" x1="200" x2="640" y1="0" y2="0"><stop offset="0" stop-color="#caf549"/><stop offset=".091" stop-color="#d0fa62"/><stop offset=".182" stop-color="#ccfd91"/><stop offset=".273" stop-color="#bdfec9"/><stop offset=".364" stop-color="#c1fcee"/><stop offset=".455" stop-color="#d4f8fc"/><stop offset=".568" stop-color="#e8ebfc"/><stop offset=".773" stop-color="#eecaef"/><stop offset=".932" stop-color="#efacdf"/><stop offset="1" stop-color="#efa8dd"/></linearGradient><linearGradient id="s13" gradientUnits="userSpaceOnUse" x1="200" x2="640" y1="0" y2="0"><stop offset="0" stop-color="#c2f34b"/><stop offset=".091" stop-color="#c7f865"/><stop offset=".182" stop-color="#bffd96"/><stop offset=".273" stop-color="#a7fdcc"/><stop offset=".341" stop-color="#a8fce8"/><stop offset=".409" stop-color="#baf9f9"/><stop offset=".523" stop-color="#dcf0fe"/><stop offset=".682" stop-color="#ead8f6"/><stop offset=".886" stop-color="#edaee1"/><stop offset="1" stop-color="#efa6dc"/></linearGradient><linearGradient id="s14" gradientUnits="userSpaceOnUse" x1="200" x2="640" y1="0" y2="0"><stop offset="0" stop-color="#b9f24d"/><stop offset=".091" stop-color="#bcf768"/><stop offset=".159" stop-color="#b7fb8c"/><stop offset=".273" stop-color="#92fdcf"/><stop offset=".318" stop-color="#8efce1"/><stop offset=".386" stop-color="#9ff9f6"/><stop offset=".5" stop-color="#cef0fe"/><stop offset=".614" stop-color="#e1defa"/><stop offset=".75" stop-color="#e8c6ef"/><stop offset=".864" stop-color="#ecade1"/><stop offset="1" stop-color="#efa5dc"/></linearGradient><linearGradient id="s15" gradientUnits="userSpaceOnUse" x1="200" x2="640" y1="0" y2="0"><stop offset="0" stop-color="#adf050"/><stop offset=".091" stop-color="#aff56c"/><stop offset=".159" stop-color="#a9fa91"/><stop offset=".273" stop-color="#7efbd2"/><stop offset=".318" stop-color="#78fae3"/><stop offset=".364" stop-color="#80f8f1"/><stop offset=".455" stop-color="#adf3fd"/><stop offset=".523" stop-color="#caeafe"/><stop offset=".659" stop-color="#e0d3f7"/><stop offset=".864" stop-color="#eaa8e0"/><stop offset="1" stop-color="#eea3dc"/></linearGradient><linearGradient id="s16" gradientUnits="userSpaceOnUse" x1="200" x2="640" y1="0" y2="0"><stop offset="0" stop-color="#9eed55"/><stop offset=".068" stop-color="#9ff166"/><stop offset=".136" stop-color="#9df687"/><stop offset=".205" stop-color="#89fab2"/><stop offset=".273" stop-color="#6bfad4"/><stop offset=".341" stop-color="#62f8eb"/><stop offset=".386" stop-color="#70f5f6"/><stop offset=".477" stop-color="#a6edfe"/><stop offset=".545" stop-color="#c5e3fd"/><stop offset=".682" stop-color="#ddcbf5"/><stop offset=".841" stop-color="#e7a6e0"/><stop offset="1" stop-color="#eea2dc"/></linearGradient><linearGradient id="s17" gradientUnits="userSpaceOnUse" x1="200" x2="640" y1="0" y2="0"><stop offset="0" stop-color="#8aeb5b"/><stop offset=".068" stop-color="#8bee6b"/><stop offset=".136" stop-color="#8bf38a"/><stop offset=".205" stop-color="#78f8b5"/><stop offset=".273" stop-color="#5af8d7"/><stop offset=".318" stop-color="#4df7e6"/><stop offset=".364" stop-color="#4ef5f2"/><stop offset=".409" stop-color="#5ef1fa"/><stop offset=".523" stop-color="#abe2fe"/><stop offset=".614" stop-color="#cbd1fa"/><stop offset=".705" stop-color="#dac1f2"/><stop offset=".818" stop-color="#e4a5e1"/><stop offset=".977" stop-color="#eca0dc"/><stop offset="1" stop-color="#eda0dc"/></linearGradient><linearGradient id="s18" gradientUnits="userSpaceOnUse" x1="200" x2="640" y1="0" y2="0"><stop offset="0" stop-color="#76e861"/><stop offset=".091" stop-color="#76ec78"/><stop offset=".159" stop-color="#74f29b"/><stop offset=".25" stop-color="#54f6cf"/><stop offset=".318" stop-color="#3cf5e7"/><stop offset=".364" stop-color="#37f2f3"/><stop offset=".409" stop-color="#41edfa"/><stop offset=".455" stop-color="#5be7fd"/><stop offset=".545" stop-color="#a4d8fe"/><stop offset=".614" stop-color="#c2cdfa"/><stop offset=".705" stop-color="#d7bdf1"/><stop offset=".818" stop-color="#e2a1e0"/><stop offset="1" stop-color="#ec9edb"/></linearGradient><linearGradient id="s19" gradientUnits="userSpaceOnUse" x1="200" x2="640" y1="0" y2="0"><stop offset="0" stop-color="#64e566"/><stop offset=".091" stop-color="#63e97b"/><stop offset=".159" stop-color="#61ef9c"/><stop offset=".25" stop-color="#47f4d0"/><stop offset=".341" stop-color="#28f2ee"/><stop offset=".386" stop-color="#25ecf7"/><stop offset=".432" stop-color="#31e5fc"/><stop offset=".477" stop-color="#4edefe"/><stop offset=".545" stop-color="#90d3fd"/><stop offset=".614" stop-color="#b9c9fa"/><stop offset=".682" stop-color="#cfbdf3"/><stop offset=".818" stop-color="#e09edf"/><stop offset="1" stop-color="#eb9cdb"/></linearGradient><linearGradient id="s20" gradientUnits="userSpaceOnUse" x1="200" x2="640" y1="0" y2="0"><stop offset="0" stop-color="#57e469"/><stop offset=".091" stop-color="#53e77e"/><stop offset=".159" stop-color="#50ec9c"/><stop offset=".227" stop-color="#43f1c5"/><stop offset=".318" stop-color="#22f1e9"/><stop offset=".386" stop-color="#16e8f8"/><stop offset=".432" stop-color="#1de0fc"/><stop offset=".477" stop-color="#35d8fd"/><stop offset=".568" stop-color="#8fcbfc"/><stop offset=".614" stop-color="#aec5f9"/><stop offset=".682" stop-color="#c9b9f2"/><stop offset=".818" stop-color="#de9bde"/><stop offset="1" stop-color="#e99ada"/></linearGradient><linearGradient id="s21" gradientUnits="userSpaceOnUse" x1="200" x2="640" y1="0" y2="0"><stop offset="0" stop-color="#4de26c"/><stop offset=".091" stop-color="#47e57f"/><stop offset=".159" stop-color="#43e99a"/><stop offset=".25" stop-color="#31efce"/><stop offset=".341" stop-color="#13ecee"/><stop offset=".409" stop-color="#0de0fa"/><stop offset=".455" stop-color="#17d8fc"/><stop offset=".477" stop-color="#23d4fd"/><stop offset=".523" stop-color="#4cccfd"/><stop offset=".591" stop-color="#92c3fa"/><stop offset=".659" stop-color="#b9b9f3"/><stop offset=".75" stop-color="#d0a4e6"/><stop offset=".864" stop-color="#de95da"/><stop offset="1" stop-color="#e697da"/></linearGradient><linearGradient id="s22" gradientUnits="userSpaceOnUse" x1="200" x2="640" y1="0" y2="0"><stop offset="0" stop-color="#45e16c"/><stop offset=".114" stop-color="#3ce485"/><stop offset=".182" stop-color="#34e8a3"/><stop offset=".273" stop-color="#20ecd4"/><stop offset=".364" stop-color="#09e4f1"/><stop offset=".432" stop-color="#0ad7fa"/><stop offset=".477" stop-color="#18cffb"/><stop offset=".523" stop-color="#3bc7fb"/><stop offset=".591" stop-color="#81bdf8"/><stop offset=".636" stop-color="#a0b6f4"/><stop offset=".705" stop-color="#bba9eb"/><stop offset=".841" stop-color="#d691da"/><stop offset="1" stop-color="#e293d9"/></linearGradient><linearGradient id="s23" gradientUnits="userSpaceOnUse" x1="200" x2="640" y1="0" y2="0"><stop offset="0" stop-color="#3ee06c"/><stop offset=".114" stop-color="#34e283"/><stop offset=".205" stop-color="#25e6aa"/><stop offset=".295" stop-color="#12e7d8"/><stop offset=".386" stop-color="#04dbf2"/><stop offset=".455" stop-color="#0bcef9"/><stop offset=".477" stop-color="#12cafa"/><stop offset=".523" stop-color="#30c2f9"/><stop offset=".591" stop-color="#71b5f6"/><stop offset=".659" stop-color="#9baaee"/><stop offset=".818" stop-color="#ca8dd9"/><stop offset=".977" stop-color="#dc8dd7"/><stop offset="1" stop-color="#dd8ed7"/></linearGradient><linearGradient id="s24" gradientUnits="userSpaceOnUse" x1="200" x2="640" y1="0" y2="0"><stop offset="0" stop-color="#37de6b"/><stop offset=".114" stop-color="#2ce080"/><stop offset=".205" stop-color="#1ae1a4"/><stop offset=".341" stop-color="#05dde2"/><stop offset=".432" stop-color="#05ccf5"/><stop offset=".477" stop-color="#10c4f7"/><stop offset=".523" stop-color="#2abcf7"/><stop offset=".591" stop-color="#64aef3"/><stop offset=".659" stop-color="#8aa2eb"/><stop offset=".818" stop-color="#be86d7"/><stop offset=".955" stop-color="#d487d6"/><stop offset="1" stop-color="#d688d6"/></linearGradient><linearGradient id="s25" gradientUnits="userSpaceOnUse" x1="200" x2="640" y1="0" y2="0"><stop offset="0" stop-color="#2fdc68"/><stop offset=".114" stop-color="#24dc7c"/><stop offset=".25" stop-color="#0bdcb2"/><stop offset=".364" stop-color="#02d3e2"/><stop offset=".432" stop-color="#04c7f1"/><stop offset=".477" stop-color="#0fbff5"/><stop offset=".523" stop-color="#28b6f5"/><stop offset=".614" stop-color="#68a3ee"/><stop offset=".682" stop-color="#8397e6"/><stop offset=".818" stop-color="#b17fd5"/><stop offset=".932" stop-color="#ca80d4"/><stop offset="1" stop-color="#d081d4"/></linearGradient><linearGradient id="s26" gradientUnits="userSpaceOnUse" x1="200" x2="640" y1="0" y2="0"><stop offset="0" stop-color="#29da66"/><stop offset=".091" stop-color="#21d972"/><stop offset=".205" stop-color="#0bd597"/><stop offset=".341" stop-color="#02cfd2"/><stop offset=".432" stop-color="#04c0ed"/><stop offset=".477" stop-color="#0fb9f1"/><stop offset=".545" stop-color="#36abf2"/><stop offset=".614" stop-color="#5f9eed"/><stop offset=".818" stop-color="#a679d4"/><stop offset=".932" stop-color="#c37ad2"/><stop offset="1" stop-color="#c97cd3"/></linearGradient><linearGradient id="s27" gradientUnits="userSpaceOnUse" x1="200" x2="640" y1="0" y2="0"><stop offset="0" stop-color="#24d864"/><stop offset=".114" stop-color="#18d274"/><stop offset=".227" stop-color="#05cb97"/><stop offset=".364" stop-color="#01c4d2"/><stop offset=".455" stop-color="#08b6eb"/><stop offset=".5" stop-color="#18aeef"/><stop offset=".591" stop-color="#4d9eee"/><stop offset=".682" stop-color="#6e8ee3"/><stop offset=".818" stop-color="#9b73d2"/><stop offset=".932" stop-color="#bb75d1"/><stop offset="1" stop-color="#c477d2"/></linearGradient><linearGradient id="s28" gradientUnits="userSpaceOnUse" x1="200" x2="640" y1="0" y2="0"><stop offset="0" stop-color="#21d663"/><stop offset=".114" stop-color="#13ca70"/><stop offset=".227" stop-color="#03be8d"/><stop offset=".386" stop-color="#01b7d1"/><stop offset=".477" stop-color="#0dabe9"/><stop offset=".568" stop-color="#3a9dee"/><stop offset=".682" stop-color="#638ae2"/><stop offset=".818" stop-color="#8e6dd1"/><stop offset=".955" stop-color="#b770d0"/><stop offset="1" stop-color="#be72d0"/></linearGradient><linearGradient id="s29" gradientUnits="userSpaceOnUse" x1="200" x2="640" y1="0" y2="0"><stop offset="0" stop-color="#1ed362"/><stop offset=".136" stop-color="#0bbc70"/><stop offset=".25" stop-color="#01ad89"/><stop offset=".432" stop-color="#03a7d7"/><stop offset=".5" stop-color="#12a1e7"/><stop offset=".591" stop-color="#3995eb"/><stop offset=".773" stop-color="#736fd4"/><stop offset=".864" stop-color="#9064cd"/><stop offset=".977" stop-color="#b36ccf"/><stop offset="1" stop-color="#b76ecf"/></linearGradient><linearGradient id="s30" gradientUnits="userSpaceOnUse" x1="200" x2="640" y1="0" y2="0"><stop offset="0" stop-color="#1bcf62"/><stop offset=".182" stop-color="#03a771"/><stop offset=".273" stop-color="#009d84"/><stop offset=".455" stop-color="#049cd5"/><stop offset=".545" stop-color="#1c96e9"/><stop offset=".636" stop-color="#3a88e5"/><stop offset=".818" stop-color="#7560cd"/><stop offset=".932" stop-color="#9960cb"/><stop offset="1" stop-color="#ae68cd"/></linearGradient><linearGradient id="s31" gradientUnits="userSpaceOnUse" x1="200" x2="640" y1="0" y2="0"><stop offset="0" stop-color="#18c961"/><stop offset=".159" stop-color="#03a069"/><stop offset=".25" stop-color="#009275"/><stop offset=".341" stop-color="#009095"/><stop offset=".477" stop-color="#0594d4"/><stop offset=".545" stop-color="#1491e6"/><stop offset=".636" stop-color="#2e84e4"/><stop offset=".841" stop-color="#6f58ca"/><stop offset=".932" stop-color="#8a58c9"/><stop offset="1" stop-color="#a161cb"/></linearGradient><linearGradient id="s32" gradientUnits="userSpaceOnUse" x1="200" x2="640" y1="0" y2="0"><stop offset="0" stop-color="#14c261"/><stop offset=".136" stop-color="#039d64"/><stop offset=".25" stop-color="#00896e"/><stop offset=".318" stop-color="#008581"/><stop offset=".477" stop-color="#038ccb"/><stop offset=".545" stop-color="#0d8ce2"/><stop offset=".636" stop-color="#2580e2"/><stop offset=".818" stop-color="#6057cb"/><stop offset=".932" stop-color="#7c52c6"/><stop offset="1" stop-color="#9259c8"/></linearGradient><linearGradient id="s33" gradientUnits="userSpaceOnUse" x1="200" x2="640" y1="0" y2="0"><stop offset="0" stop-color="#0fb960"/><stop offset=".159" stop-color="#019162"/><stop offset=".273" stop-color="#00806f"/><stop offset=".341" stop-color="#007d82"/><stop offset=".523" stop-color="#0587d5"/><stop offset=".591" stop-color="#1284e2"/><stop offset=".705" stop-color="#336fd9"/><stop offset=".818" stop-color="#5855ca"/><stop offset=".932" stop-color="#704dc5"/><stop offset="1" stop-color="#8251c6"/></linearGradient><linearGradient id="s34" gradientUnits="userSpaceOnUse" x1="200" x2="640" y1="0" y2="0"><stop offset="0" stop-color="#0bb060"/><stop offset=".136" stop-color="#019160"/><stop offset=".273" stop-color="#007b6b"/><stop offset=".364" stop-color="#007784"/><stop offset=".477" stop-color="#017db5"/><stop offset=".545" stop-color="#0681d5"/><stop offset=".614" stop-color="#127dde"/><stop offset=".773" stop-color="#435cce"/><stop offset=".909" stop-color="#604bc4"/><stop offset="1" stop-color="#734cc4"/></linearGradient><linearGradient id="s35" gradientUnits="userSpaceOnUse" x1="200" x2="640" y1="0" y2="0"><stop offset="0" stop-color="#07a860"/><stop offset=".205" stop-color="#008162"/><stop offset=".341" stop-color="#007176"/><stop offset=".455" stop-color="#00739e"/><stop offset=".545" stop-color="#047bcc"/><stop offset=".614" stop-color="#0e79da"/><stop offset=".705" stop-color="#2669d5"/><stop offset=".864" stop-color="#4c4fc5"/><stop offset="1" stop-color="#6449c2"/></linearGradient><linearGradient id="s36" gradientUnits="userSpaceOnUse" x1="200" x2="640" y1="0" y2="0"><stop offset="0" stop-color="#04a25f"/><stop offset=".227" stop-color="#007a62"/><stop offset=".364" stop-color="#006b77"/><stop offset=".455" stop-color="#006c93"/><stop offset=".568" stop-color="#0476cc"/><stop offset=".636" stop-color="#0f73d7"/><stop offset=".841" stop-color="#3c52c6"/><stop offset="1" stop-color="#5549c1"/></linearGradient><linearGradient id="s37" gradientUnits="userSpaceOnUse" x1="200" x2="640" y1="0" y2="0"><stop offset="0" stop-color="#039e5f"/><stop offset=".227" stop-color="#007761"/><stop offset=".364" stop-color="#006772"/><stop offset=".455" stop-color="#00668b"/><stop offset=".568" stop-color="#0372c6"/><stop offset=".636" stop-color="#0b70d3"/><stop offset=".841" stop-color="#3153c6"/><stop offset="1" stop-color="#464ac1"/></linearGradient><linearGradient id="s38" gradientUnits="userSpaceOnUse" x1="200" x2="640" y1="0" y2="0"><stop offset="0" stop-color="#029a5f"/><stop offset=".205" stop-color="#00785f"/><stop offset=".364" stop-color="#00636f"/><stop offset=".455" stop-color="#006285"/><stop offset=".568" stop-color="#026fc2"/><stop offset=".636" stop-color="#086ed1"/><stop offset=".818" stop-color="#2555c7"/><stop offset="1" stop-color="#394cc1"/></linearGradient><linearGradient id="s39" gradientUnits="userSpaceOnUse" x1="200" x2="640" y1="0" y2="0"><stop offset="0" stop-color="#01975e"/><stop offset=".25" stop-color="#006d61"/><stop offset=".386" stop-color="#005f71"/><stop offset=".455" stop-color="#005f82"/><stop offset=".568" stop-color="#016dc0"/><stop offset=".636" stop-color="#076dcf"/><stop offset=".795" stop-color="#1e58c8"/><stop offset="1" stop-color="#2f4ec1"/></linearGradient><linearGradient id="s40" gradientUnits="userSpaceOnUse" x1="200" x2="640" y1="0" y2="0"><stop offset="0" stop-color="#00955e"/><stop offset=".227" stop-color="#006e5f"/><stop offset=".364" stop-color="#005d6c"/><stop offset=".455" stop-color="#005d81"/><stop offset=".523" stop-color="#0066a7"/><stop offset=".568" stop-color="#016cbf"/><stop offset=".636" stop-color="#066cce"/><stop offset=".818" stop-color="#1d56c6"/><stop offset="1" stop-color="#284fc0"/></linearGradient><linearGradient id="s41" gradientUnits="userSpaceOnUse" x1="200" x2="640" y1="0" y2="0"><stop offset="0" stop-color="#00925e"/><stop offset=".227" stop-color="#006c5f"/><stop offset=".364" stop-color="#005c6b"/><stop offset=".455" stop-color="#005c81"/><stop offset=".523" stop-color="#0065a7"/><stop offset=".568" stop-color="#016cbf"/><stop offset=".636" stop-color="#056bce"/><stop offset=".818" stop-color="#1c56c6"/><stop offset="1" stop-color="#2450c0"/></linearGradient><clipPath id="cpO"><path d="M265.0,202.0 C271.5,197.0 275.8,209.2 289.0,215.0 C302.2,220.8 325.5,230.3 344.0,237.0 C362.5,243.7 385.0,250.5 400.0,255.0 C415.0,259.5 423.0,258.8 434.0,264.0 C445.0,269.2 454.2,278.5 466.0,286.0 C477.8,293.5 491.8,300.8 505.0,309.0 C518.2,317.2 531.8,326.3 545.0,335.0 C558.2,343.7 573.2,352.2 584.0,361.0 C594.8,369.8 602.5,379.2 610.0,388.0 C617.5,396.8 625.0,405.3 629.0,414.0 C633.0,422.7 633.7,431.2 634.0,440.0 C634.3,448.8 632.3,458.3 631.0,467.0 C629.7,475.7 628.3,484.3 626.0,492.0 C623.7,499.7 619.8,505.0 617.0,513.0 C614.2,521.0 611.3,527.5 609.0,540.0 C606.7,552.5 604.3,572.0 603.0,588.0 C601.7,604.0 601.5,621.5 601.0,636.0 C600.5,650.5 601.7,664.3 600.0,675.0 C598.3,685.7 596.8,693.0 591.0,700.0 C585.2,707.0 577.3,713.2 565.0,717.0 C552.7,720.8 534.7,722.0 517.0,723.0 C499.3,724.0 473.8,723.7 459.0,723.0 C444.2,722.3 440.3,723.3 428.0,719.0 C415.7,714.7 399.5,704.2 385.0,697.0 C370.5,689.8 355.7,683.3 341.0,676.0 C326.3,668.7 311.7,661.0 297.0,653.0 C282.3,645.0 265.2,637.2 253.0,628.0 C240.8,618.8 231.8,608.3 224.0,598.0 C216.2,587.7 211.2,577.7 206.0,566.0 C200.8,554.3 196.2,541.7 193.0,528.0 C189.8,514.3 187.7,498.7 187.0,484.0 C186.3,469.3 187.2,454.8 189.0,440.0 C190.8,425.2 194.0,411.2 198.0,395.0 C202.0,378.8 207.3,359.7 213.0,343.0 C218.7,326.3 225.8,311.3 232.0,295.0 C238.2,278.7 244.5,260.5 250.0,245.0 C255.5,229.5 258.5,207.0 265.0,202.0 Z"/></clipPath><clipPath id="cpI"><path d="M270.0,211.0 C275.5,205.8 287.7,220.0 300.0,225.0 C312.3,230.0 327.3,235.3 344.0,241.0 C360.7,246.7 385.0,254.5 400.0,259.0 C415.0,263.5 423.0,262.8 434.0,268.0 C445.0,273.2 454.2,282.5 466.0,290.0 C477.8,297.5 491.8,304.8 505.0,313.0 C518.2,321.2 531.8,330.3 545.0,339.0 C558.2,347.7 574.8,357.3 584.0,365.0 C593.2,372.7 594.5,375.8 600.0,385.0 C605.5,394.2 615.0,407.7 617.0,420.0 C619.0,432.3 615.5,446.0 612.0,459.0 C608.5,472.0 600.8,484.8 596.0,498.0 C591.2,511.2 586.8,524.8 583.0,538.0 C579.2,551.2 576.0,564.3 573.0,577.0 C570.0,589.7 568.5,607.0 565.0,614.0 C561.5,621.0 563.2,619.5 552.0,619.0 C540.8,618.5 516.7,612.0 498.0,611.0 C479.3,610.0 458.0,614.2 440.0,613.0 C422.0,611.8 410.0,612.5 390.0,604.0 C370.0,595.5 340.7,575.7 320.0,562.0 C299.3,548.3 280.0,533.3 266.0,522.0 C252.0,510.7 243.5,506.0 236.0,494.0 C228.5,482.0 222.8,465.7 221.0,450.0 C219.2,434.3 222.2,416.3 225.0,400.0 C227.8,383.7 233.3,368.7 238.0,352.0 C242.7,335.3 248.2,316.0 253.0,300.0 C257.8,284.0 264.2,270.8 267.0,256.0 C269.8,241.2 264.5,216.2 270.0,211.0 Z"/></clipPath><filter id="bl" x="-5%" y="-5%" width="110%" height="110%"><feGaussianBlur stdDeviation="4"/></filter><pattern id="mesh" width="6" height="6" patternUnits="userSpaceOnUse" patternTransform="rotate(25)"><path d="M0,0 H6 M0,0 V6" stroke="#000" stroke-opacity="0.22" stroke-width="1.2" fill="none"/></pattern><pattern id="meshL" width="11" height="7.5" patternUnits="userSpaceOnUse" patternTransform="rotate(-8) skewX(-25)"><path d="M0,0.5 H11 M0.5,0 V7.5" stroke="#004858" stroke-opacity="0.2" stroke-width="1.3" fill="none"/></pattern><pattern id="meshR" width="12" height="8" patternUnits="userSpaceOnUse"><path d="M0,0 L12,8 M12,0 L0,8" stroke="#403070" stroke-opacity="0.16" stroke-width="1.2" fill="none"/></pattern><clipPath id="cpL"><polygon points="150,150 395,150 405,300 430,630 150,700"/></clipPath><clipPath id="cpR"><polygon points="395,150 700,150 700,700 430,630 405,300"/></clipPath></defs>
<g fill="none" stroke-width="1.2" stroke-linejoin="round">
  <path d="M350,657 L249.7,680 L249.7,698.7 C252,706 260,713 270,718 C300,735 360,758 400,766 L440,756 L550,719 L546,717" stroke="#c4c4f2"/>
  <path d="M365,671 L229.8,702.2 L231,715 C234,722 240,728 250,734 C275,748 320,764 360,772 C390,776 410,772 430,767 L596,710 L584,705" stroke="#a6a6ee"/>
  <path d="M390,684 L221.7,727.3 C230,735 240,740 248,744 C275,756 320,770 370,780 C400,785 420,784 440,779 L616,700 L594,688" stroke="#8c8ce8"/>
  <path d="M248.5,741.9 L350,708 L420,690" stroke="#8080e0"/>
  <path d="M304,738 C306,745 312,750 322,753 C345,760 370,764 390,766" stroke="#7070d8"/>
  <path d="M500,722 C505,730 512,736 520,740 L420,751" stroke="#7070d8"/>
  <path d="M556,718 C562,728 570,738 576,744 L560,756 C520,766 470,774 420,780" stroke="#7878dc"/>
  <path d="M372,734 C380,742 390,748 410,752" stroke="#7070d0"/>
  <path d="M297.5,653.7 L268.3,659 L270.7,674.2 C276,684 290,698 303,705 C330,720 380,742 408,750 L490,726 L480,723" stroke="#e4e4f8"/>
  <path d="M319.7,663.7 L270.7,674.8" stroke="#d8d8f6"/>
</g>

<g clip-path="url(#cpO)"><g filter="url(#bl)"><rect x="170" y="190" width="480" height="10.5" fill="url(#w0)"/><rect x="170" y="200" width="480" height="10.5" fill="url(#w1)"/><rect x="170" y="210" width="480" height="10.5" fill="url(#w2)"/><rect x="170" y="220" width="480" height="10.5" fill="url(#w3)"/><rect x="170" y="230" width="480" height="10.5" fill="url(#w4)"/><rect x="170" y="240" width="480" height="10.5" fill="url(#w5)"/><rect x="170" y="250" width="480" height="10.5" fill="url(#w6)"/><rect x="170" y="260" width="480" height="10.5" fill="url(#w7)"/><rect x="170" y="270" width="480" height="10.5" fill="url(#w8)"/><rect x="170" y="280" width="480" height="10.5" fill="url(#w9)"/><rect x="170" y="290" width="480" height="10.5" fill="url(#w10)"/><rect x="170" y="300" width="480" height="10.5" fill="url(#w11)"/><rect x="170" y="310" width="480" height="10.5" fill="url(#w12)"/><rect x="170" y="320" width="480" height="10.5" fill="url(#w13)"/><rect x="170" y="330" width="480" height="10.5" fill="url(#w14)"/><rect x="170" y="340" width="480" height="10.5" fill="url(#w15)"/><rect x="170" y="350" width="480" height="10.5" fill="url(#w16)"/><rect x="170" y="360" width="480" height="10.5" fill="url(#w17)"/><rect x="170" y="370" width="480" height="10.5" fill="url(#w18)"/><rect x="170" y="380" width="480" height="10.5" fill="url(#w19)"/><rect x="170" y="390" width="480" height="10.5" fill="url(#w20)"/><rect x="170" y="400" width="480" height="10.5" fill="url(#w21)"/><rect x="170" y="410" width="480" height="10.5" fill="url(#w22)"/><rect x="170" y="420" width="480" height="10.5" fill="url(#w23)"/><rect x="170" y="430" width="480" height="10.5" fill="url(#w24)"/><rect x="170" y="440" width="480" height="10.5" fill="url(#w25)"/><rect x="170" y="450" width="480" height="10.5" fill="url(#w26)"/><rect x="170" y="460" width="480" height="10.5" fill="url(#w27)"/><rect x="170" y="470" width="480" height="10.5" fill="url(#w28)"/><rect x="170" y="480" width="480" height="10.5" fill="url(#w29)"/><rect x="170" y="490" width="480" height="10.5" fill="url(#w30)"/><rect x="170" y="500" width="480" height="10.5" fill="url(#w31)"/><rect x="170" y="510" width="480" height="10.5" fill="url(#w32)"/><rect x="170" y="520" width="480" height="10.5" fill="url(#w33)"/><rect x="170" y="530" width="480" height="10.5" fill="url(#w34)"/><rect x="170" y="540" width="480" height="10.5" fill="url(#w35)"/><rect x="170" y="550" width="480" height="10.5" fill="url(#w36)"/><rect x="170" y="560" width="480" height="10.5" fill="url(#w37)"/><rect x="170" y="570" width="480" height="10.5" fill="url(#w38)"/><rect x="170" y="580" width="480" height="10.5" fill="url(#w39)"/><rect x="170" y="590" width="480" height="10.5" fill="url(#w40)"/><rect x="170" y="600" width="480" height="10.5" fill="url(#w41)"/><rect x="170" y="610" width="480" height="10.5" fill="url(#w42)"/><rect x="170" y="620" width="480" height="10.5" fill="url(#w43)"/><rect x="170" y="630" width="480" height="10.5" fill="url(#w44)"/><rect x="170" y="640" width="480" height="10.5" fill="url(#w45)"/><rect x="170" y="650" width="480" height="10.5" fill="url(#w46)"/><rect x="170" y="660" width="480" height="10.5" fill="url(#w47)"/><rect x="170" y="670" width="480" height="10.5" fill="url(#w48)"/><rect x="170" y="680" width="480" height="10.5" fill="url(#w49)"/><rect x="170" y="690" width="480" height="10.5" fill="url(#w50)"/><rect x="170" y="700" width="480" height="10.5" fill="url(#w51)"/><rect x="170" y="710" width="480" height="10.5" fill="url(#w52)"/><rect x="170" y="720" width="480" height="10.5" fill="url(#w53)"/><rect x="170" y="730" width="480" height="10.5" fill="url(#w54)"/></g><rect x="170" y="190" width="480" height="545" fill="url(#mesh)"/></g>
<g clip-path="url(#cpO)" fill="#c8c8f0" opacity="0.55"><rect x="514" y="703" width="1.6" height="1.3"/><rect x="256" y="599" width="1.6" height="1.3"/><rect x="493" y="682" width="1.6" height="1.3"/><rect x="396" y="679" width="1.6" height="1.3"/><rect x="319" y="635" width="1.6" height="1.3"/><rect x="291" y="640" width="1.6" height="1.3"/><rect x="424" y="686" width="1.6" height="1.3"/><rect x="282" y="621" width="1.6" height="1.3"/><rect x="405" y="663" width="1.6" height="1.3"/><rect x="441" y="695" width="1.6" height="1.3"/><rect x="570" y="641" width="1.6" height="1.3"/><rect x="358" y="654" width="1.6" height="1.3"/><rect x="413" y="682" width="1.6" height="1.3"/><rect x="335" y="640" width="1.6" height="1.3"/><rect x="566" y="693" width="1.6" height="1.3"/><rect x="486" y="681" width="1.6" height="1.3"/><rect x="476" y="687" width="1.6" height="1.3"/><rect x="396" y="685" width="1.6" height="1.3"/><rect x="561" y="682" width="1.6" height="1.3"/><rect x="447" y="715" width="1.6" height="1.3"/><rect x="567" y="669" width="1.6" height="1.3"/><rect x="391" y="677" width="1.6" height="1.3"/><rect x="343" y="646" width="1.6" height="1.3"/><rect x="479" y="705" width="1.6" height="1.3"/><rect x="562" y="694" width="1.6" height="1.3"/><rect x="349" y="654" width="1.6" height="1.3"/><rect x="314" y="625" width="1.6" height="1.3"/><rect x="571" y="614" width="1.6" height="1.3"/><rect x="450" y="682" width="1.6" height="1.3"/><rect x="460" y="701" width="1.6" height="1.3"/><rect x="379" y="667" width="1.6" height="1.3"/><rect x="422" y="706" width="1.6" height="1.3"/><rect x="421" y="668" width="1.6" height="1.3"/><rect x="567" y="694" width="1.6" height="1.3"/><rect x="586" y="688" width="1.6" height="1.3"/><rect x="558" y="703" width="1.6" height="1.3"/><rect x="564" y="685" width="1.6" height="1.3"/><rect x="563" y="708" width="1.6" height="1.3"/><rect x="361" y="652" width="1.6" height="1.3"/><rect x="280" y="611" width="1.6" height="1.3"/><rect x="437" y="711" width="1.6" height="1.3"/><rect x="573" y="675" width="1.6" height="1.3"/><rect x="382" y="668" width="1.6" height="1.3"/><rect x="573" y="629" width="1.6" height="1.3"/><rect x="560" y="680" width="1.6" height="1.3"/><rect x="579" y="678" width="1.6" height="1.3"/><rect x="327" y="646" width="1.6" height="1.3"/><rect x="393" y="688" width="1.6" height="1.3"/><rect x="359" y="653" width="1.6" height="1.3"/><rect x="301" y="645" width="1.6" height="1.3"/><rect x="352" y="649" width="1.6" height="1.3"/><rect x="348" y="647" width="1.6" height="1.3"/><rect x="388" y="651" width="1.6" height="1.3"/><rect x="594" y="656" width="1.6" height="1.3"/><rect x="573" y="687" width="1.6" height="1.3"/><rect x="566" y="706" width="1.6" height="1.3"/><rect x="502" y="700" width="1.6" height="1.3"/><rect x="369" y="676" width="1.6" height="1.3"/><rect x="569" y="672" width="1.6" height="1.3"/><rect x="290" y="631" width="1.6" height="1.3"/><rect x="334" y="656" width="1.6" height="1.3"/><rect x="512" y="705" width="1.6" height="1.3"/><rect x="424" y="677" width="1.6" height="1.3"/><rect x="496" y="694" width="1.6" height="1.3"/><rect x="436" y="681" width="1.6" height="1.3"/><rect x="404" y="680" width="1.6" height="1.3"/><rect x="313" y="620" width="1.6" height="1.3"/><rect x="546" y="693" width="1.6" height="1.3"/><rect x="485" y="681" width="1.6" height="1.3"/><rect x="514" y="705" width="1.6" height="1.3"/><rect x="400" y="679" width="1.6" height="1.3"/><rect x="471" y="694" width="1.6" height="1.3"/><rect x="582" y="628" width="1.6" height="1.3"/><rect x="505" y="716" width="1.6" height="1.3"/><rect x="353" y="642" width="1.6" height="1.3"/><rect x="410" y="698" width="1.6" height="1.3"/><rect x="464" y="680" width="1.6" height="1.3"/><rect x="539" y="686" width="1.6" height="1.3"/><rect x="333" y="661" width="1.6" height="1.3"/><rect x="355" y="652" width="1.6" height="1.3"/><rect x="579" y="698" width="1.6" height="1.3"/><rect x="576" y="618" width="1.6" height="1.3"/><rect x="468" y="697" width="1.6" height="1.3"/><rect x="261" y="581" width="1.6" height="1.3"/><rect x="339" y="627" width="1.6" height="1.3"/><rect x="564" y="706" width="1.6" height="1.3"/><rect x="392" y="687" width="1.6" height="1.3"/><rect x="571" y="677" width="1.6" height="1.3"/><rect x="445" y="683" width="1.6" height="1.3"/><rect x="300" y="634" width="1.6" height="1.3"/><rect x="552" y="683" width="1.6" height="1.3"/><rect x="562" y="665" width="1.6" height="1.3"/><rect x="585" y="691" width="1.6" height="1.3"/><rect x="574" y="687" width="1.6" height="1.3"/><rect x="384" y="657" width="1.6" height="1.3"/><rect x="359" y="659" width="1.6" height="1.3"/><rect x="329" y="651" width="1.6" height="1.3"/><rect x="577" y="673" width="1.6" height="1.3"/><rect x="338" y="668" width="1.6" height="1.3"/><rect x="413" y="671" width="1.6" height="1.3"/><rect x="592" y="686" width="1.6" height="1.3"/><rect x="329" y="637" width="1.6" height="1.3"/><rect x="587" y="678" width="1.6" height="1.3"/><rect x="442" y="695" width="1.6" height="1.3"/><rect x="567" y="700" width="1.6" height="1.3"/><rect x="565" y="653" width="1.6" height="1.3"/><rect x="457" y="682" width="1.6" height="1.3"/><rect x="425" y="708" width="1.6" height="1.3"/><rect x="322" y="647" width="1.6" height="1.3"/><rect x="409" y="696" width="1.6" height="1.3"/><rect x="452" y="681" width="1.6" height="1.3"/><rect x="396" y="669" width="1.6" height="1.3"/><rect x="467" y="683" width="1.6" height="1.3"/><rect x="536" y="687" width="1.6" height="1.3"/><rect x="559" y="708" width="1.6" height="1.3"/><rect x="401" y="682" width="1.6" height="1.3"/><rect x="578" y="677" width="1.6" height="1.3"/><rect x="477" y="690" width="1.6" height="1.3"/><rect x="269" y="611" width="1.6" height="1.3"/><rect x="273" y="610" width="1.6" height="1.3"/><rect x="444" y="715" width="1.6" height="1.3"/><rect x="430" y="712" width="1.6" height="1.3"/><rect x="436" y="679" width="1.6" height="1.3"/><rect x="357" y="674" width="1.6" height="1.3"/><rect x="558" y="687" width="1.6" height="1.3"/><rect x="441" y="695" width="1.6" height="1.3"/><rect x="570" y="666" width="1.6" height="1.3"/><rect x="326" y="626" width="1.6" height="1.3"/><rect x="362" y="679" width="1.6" height="1.3"/><rect x="293" y="608" width="1.6" height="1.3"/><rect x="329" y="656" width="1.6" height="1.3"/><rect x="455" y="700" width="1.6" height="1.3"/><rect x="517" y="702" width="1.6" height="1.3"/><rect x="447" y="717" width="1.6" height="1.3"/><rect x="445" y="678" width="1.6" height="1.3"/><rect x="435" y="709" width="1.6" height="1.3"/><rect x="447" y="696" width="1.6" height="1.3"/><rect x="408" y="682" width="1.6" height="1.3"/><rect x="369" y="649" width="1.6" height="1.3"/><rect x="431" y="716" width="1.6" height="1.3"/><rect x="587" y="680" width="1.6" height="1.3"/><rect x="554" y="700" width="1.6" height="1.3"/><rect x="549" y="693" width="1.6" height="1.3"/><rect x="564" y="701" width="1.6" height="1.3"/><rect x="435" y="703" width="1.6" height="1.3"/><rect x="367" y="669" width="1.6" height="1.3"/><rect x="289" y="644" width="1.6" height="1.3"/><rect x="441" y="715" width="1.6" height="1.3"/><rect x="559" y="687" width="1.6" height="1.3"/><rect x="447" y="689" width="1.6" height="1.3"/><rect x="271" y="627" width="1.6" height="1.3"/><rect x="565" y="699" width="1.6" height="1.3"/><rect x="515" y="697" width="1.6" height="1.3"/><rect x="405" y="662" width="1.6" height="1.3"/><rect x="402" y="702" width="1.6" height="1.3"/><rect x="521" y="708" width="1.6" height="1.3"/><rect x="412" y="670" width="1.6" height="1.3"/><rect x="312" y="653" width="1.6" height="1.3"/><rect x="545" y="700" width="1.6" height="1.3"/><rect x="437" y="707" width="1.6" height="1.3"/><rect x="570" y="614" width="1.6" height="1.3"/><rect x="385" y="660" width="1.6" height="1.3"/><rect x="587" y="650" width="1.6" height="1.3"/><rect x="569" y="681" width="1.6" height="1.3"/><rect x="360" y="643" width="1.6" height="1.3"/><rect x="570" y="664" width="1.6" height="1.3"/><rect x="572" y="682" width="1.6" height="1.3"/><rect x="566" y="664" width="1.6" height="1.3"/><rect x="299" y="622" width="1.6" height="1.3"/><rect x="391" y="695" width="1.6" height="1.3"/><rect x="515" y="704" width="1.6" height="1.3"/><rect x="556" y="690" width="1.6" height="1.3"/><rect x="578" y="669" width="1.6" height="1.3"/><rect x="269" y="630" width="1.6" height="1.3"/><rect x="594" y="673" width="1.6" height="1.3"/><rect x="564" y="678" width="1.6" height="1.3"/><rect x="453" y="684" width="1.6" height="1.3"/><rect x="422" y="703" width="1.6" height="1.3"/><rect x="563" y="697" width="1.6" height="1.3"/><rect x="577" y="692" width="1.6" height="1.3"/><rect x="289" y="613" width="1.6" height="1.3"/><rect x="331" y="652" width="1.6" height="1.3"/><rect x="447" y="713" width="1.6" height="1.3"/><rect x="567" y="702" width="1.6" height="1.3"/><rect x="342" y="641" width="1.6" height="1.3"/><rect x="450" y="707" width="1.6" height="1.3"/><rect x="571" y="704" width="1.6" height="1.3"/><rect x="558" y="669" width="1.6" height="1.3"/><rect x="565" y="694" width="1.6" height="1.3"/><rect x="582" y="663" width="1.6" height="1.3"/><rect x="440" y="679" width="1.6" height="1.3"/><rect x="391" y="693" width="1.6" height="1.3"/><rect x="579" y="683" width="1.6" height="1.3"/><rect x="581" y="628" width="1.6" height="1.3"/><rect x="334" y="658" width="1.6" height="1.3"/><rect x="568" y="704" width="1.6" height="1.3"/><rect x="567" y="693" width="1.6" height="1.3"/><rect x="368" y="668" width="1.6" height="1.3"/><rect x="335" y="670" width="1.6" height="1.3"/><rect x="508" y="715" width="1.6" height="1.3"/><rect x="434" y="676" width="1.6" height="1.3"/><rect x="436" y="714" width="1.6" height="1.3"/><rect x="565" y="689" width="1.6" height="1.3"/><rect x="513" y="688" width="1.6" height="1.3"/><rect x="258" y="625" width="1.6" height="1.3"/><rect x="448" y="712" width="1.6" height="1.3"/><rect x="442" y="704" width="1.6" height="1.3"/><rect x="505" y="702" width="1.6" height="1.3"/><rect x="300" y="620" width="1.6" height="1.3"/><rect x="569" y="666" width="1.6" height="1.3"/><rect x="302" y="633" width="1.6" height="1.3"/><rect x="577" y="628" width="1.6" height="1.3"/><rect x="443" y="680" width="1.6" height="1.3"/><rect x="574" y="683" width="1.6" height="1.3"/><rect x="475" y="709" width="1.6" height="1.3"/><rect x="441" y="708" width="1.6" height="1.3"/><rect x="564" y="696" width="1.6" height="1.3"/><rect x="372" y="684" width="1.6" height="1.3"/><rect x="580" y="663" width="1.6" height="1.3"/><rect x="412" y="692" width="1.6" height="1.3"/></g>
<g clip-path="url(#cpI)"><g filter="url(#bl)"><rect x="200" y="210" width="440" height="10.5" fill="url(#s0)"/><rect x="200" y="220" width="440" height="10.5" fill="url(#s1)"/><rect x="200" y="230" width="440" height="10.5" fill="url(#s2)"/><rect x="200" y="240" width="440" height="10.5" fill="url(#s3)"/><rect x="200" y="250" width="440" height="10.5" fill="url(#s4)"/><rect x="200" y="260" width="440" height="10.5" fill="url(#s5)"/><rect x="200" y="270" width="440" height="10.5" fill="url(#s6)"/><rect x="200" y="280" width="440" height="10.5" fill="url(#s7)"/><rect x="200" y="290" width="440" height="10.5" fill="url(#s8)"/><rect x="200" y="300" width="440" height="10.5" fill="url(#s9)"/><rect x="200" y="310" width="440" height="10.5" fill="url(#s10)"/><rect x="200" y="320" width="440" height="10.5" fill="url(#s11)"/><rect x="200" y="330" width="440" height="10.5" fill="url(#s12)"/><rect x="200" y="340" width="440" height="10.5" fill="url(#s13)"/><rect x="200" y="350" width="440" height="10.5" fill="url(#s14)"/><rect x="200" y="360" width="440" height="10.5" fill="url(#s15)"/><rect x="200" y="370" width="440" height="10.5" fill="url(#s16)"/><rect x="200" y="380" width="440" height="10.5" fill="url(#s17)"/><rect x="200" y="390" width="440" height="10.5" fill="url(#s18)"/><rect x="200" y="400" width="440" height="10.5" fill="url(#s19)"/><rect x="200" y="410" width="440" height="10.5" fill="url(#s20)"/><rect x="200" y="420" width="440" height="10.5" fill="url(#s21)"/><rect x="200" y="430" width="440" height="10.5" fill="url(#s22)"/><rect x="200" y="440" width="440" height="10.5" fill="url(#s23)"/><rect x="200" y="450" width="440" height="10.5" fill="url(#s24)"/><rect x="200" y="460" width="440" height="10.5" fill="url(#s25)"/><rect x="200" y="470" width="440" height="10.5" fill="url(#s26)"/><rect x="200" y="480" width="440" height="10.5" fill="url(#s27)"/><rect x="200" y="490" width="440" height="10.5" fill="url(#s28)"/><rect x="200" y="500" width="440" height="10.5" fill="url(#s29)"/><rect x="200" y="510" width="440" height="10.5" fill="url(#s30)"/><rect x="200" y="520" width="440" height="10.5" fill="url(#s31)"/><rect x="200" y="530" width="440" height="10.5" fill="url(#s32)"/><rect x="200" y="540" width="440" height="10.5" fill="url(#s33)"/><rect x="200" y="550" width="440" height="10.5" fill="url(#s34)"/><rect x="200" y="560" width="440" height="10.5" fill="url(#s35)"/><rect x="200" y="570" width="440" height="10.5" fill="url(#s36)"/><rect x="200" y="580" width="440" height="10.5" fill="url(#s37)"/><rect x="200" y="590" width="440" height="10.5" fill="url(#s38)"/><rect x="200" y="600" width="440" height="10.5" fill="url(#s39)"/><rect x="200" y="610" width="440" height="10.5" fill="url(#s40)"/><rect x="200" y="620" width="440" height="10.5" fill="url(#s41)"/></g><g clip-path="url(#cpL)"><rect x="170" y="190" width="480" height="545" fill="url(#meshL)"/></g><g clip-path="url(#cpR)"><rect x="170" y="190" width="480" height="545" fill="url(#meshR)"/></g></g>
<g clip-path="url(#cpO)"><path d="M466.0,286.0 C447.3,252.0 491.8,300.8 505.0,309.0 C518.2,317.2 531.8,326.3 545.0,335.0 C558.2,343.7 573.2,352.2 584.0,361.0 C594.8,369.8 602.5,379.2 610.0,388.0 C617.5,396.8 625.0,405.3 629.0,414.0 C633.0,422.7 633.7,431.2 634.0,440.0 C634.3,448.8 632.3,458.3 631.0,467.0 C629.7,475.7 628.3,484.3 626.0,492.0 C623.7,499.7 643.7,547.3 617.0,513.0" fill="none" stroke="#303038" stroke-width="3.5" stroke-dasharray="1.6 2.4" opacity="0.55"/></g>
<g clip-path="url(#cpO)"><path d="M268.0,214.0 C278.5,174.2 265.2,234.0 261.0,248.0 C256.8,262.0 249.2,281.7 243.0,298.0 C236.8,314.3 229.7,329.3 224.0,346.0 C218.3,362.7 213.0,381.8 209.0,398.0 C205.0,414.2 201.8,428.2 200.0,443.0 C198.2,457.8 186.7,525.2 198.0,487.0" fill="none" stroke="#303010" stroke-width="7" stroke-dasharray="1.5 2" opacity="0.32"/></g>
<g clip-path="url(#cpI)" fill="none" stroke="#a49ce4" stroke-width="1.1" stroke-dasharray="4 1.5" opacity="0.85"><path d="M272.0,263.0 C232.2,262.7 288.0,278.3 301.0,286.0 C314.0,293.7 333.2,302.3 350.0,309.0 C366.8,315.7 387.5,324.7 402.0,326.0 C416.5,327.3 422.3,321.0 437.0,317.0 C451.7,313.0 472.8,306.8 490.0,302.0 C507.2,297.2 576.3,294.5 540.0,288.0"/><path d="M245.0,324.0 C196.2,326.7 279.5,343.5 297.0,352.0 C314.5,360.5 334.2,368.5 350.0,375.0 C365.8,381.5 374.5,391.3 392.0,391.0 C409.5,390.7 429.3,380.0 455.0,373.0 C480.7,366.0 523.5,355.2 546.0,349.0 C568.5,342.8 640.2,340.2 590.0,336.0"/><path d="M231.0,389.0 C178.5,394.2 261.3,407.2 280.0,415.0 C298.7,422.8 322.7,430.2 343.0,436.0 C363.3,441.8 380.5,451.2 402.0,450.0 C423.5,448.8 439.8,440.0 472.0,429.0 C504.2,418.0 635.2,390.7 595.0,384.0"/><path d="M224.0,447.0 C171.5,455.7 273.2,469.5 297.0,478.0 C320.8,486.5 346.5,493.5 367.0,498.0 C387.5,502.5 396.7,508.8 420.0,505.0 C443.3,501.2 475.0,488.2 507.0,475.0 C539.0,461.8 659.2,430.7 612.0,426.0"/><path d="M240.0,510.0 C192.5,516.3 278.3,525.7 300.0,532.0 C321.7,538.3 347.0,544.0 370.0,548.0 C393.0,552.0 413.0,559.8 438.0,556.0 C463.0,552.2 495.5,535.3 520.0,525.0 C544.5,514.7 631.7,496.5 585.0,494.0"/></g>
</svg>
<div class="txt" style="left:705px;top:803px;text-align:right;width:111px;line-height:19px">Gamut volumes<br>(1)  891832<br>(2)  507296</div>
<div class="txt" style="left:133px;top:852px;color:#8c8c8c;font-size:18px">b*</div>

<!-- colour picker image -->
<svg class="a" style="left:832px;top:88px" width="353" height="355" viewBox="832 88 353 355"><defs><linearGradient id="p0" gradientUnits="userSpaceOnUse" x1="826" x2="1192" y1="0" y2="0"><stop offset="0" stop-color="#ffffff"/><stop offset="1" stop-color="#ffffff"/></linearGradient><linearGradient id="p1" gradientUnits="userSpaceOnUse" x1="826" x2="1192" y1="0" y2="0"><stop offset="0" stop-color="#fffefd"/><stop offset="1" stop-color="#fffefd"/></linearGradient><linearGradient id="p2" gradientUnits="userSpaceOnUse" x1="826" x2="1192" y1="0" y2="0"><stop offset="0" stop-color="#fffaf8"/><stop offset=".279" stop-color="#f9fdf8"/><stop offset=".623" stop-color="#f9f9fd"/><stop offset=".984" stop-color="#fffaf9"/><stop offset="1" stop-color="#fffaf9"/></linearGradient><linearGradient id="p3" gradientUnits="userSpaceOnUse" x1="826" x2="1192" y1="0" y2="0"><stop offset="0" stop-color="#fff6f1"/><stop offset=".197" stop-color="#fbfcef"/><stop offset=".344" stop-color="#effaf1"/><stop offset=".525" stop-color="#eff8fe"/><stop offset=".738" stop-color="#f8f4fd"/><stop offset=".852" stop-color="#fff6fb"/><stop offset="1" stop-color="#fff5f3"/></linearGradient><linearGradient id="p4" gradientUnits="userSpaceOnUse" x1="826" x2="1192" y1="0" y2="0"><stop offset="0" stop-color="#fff0e8"/><stop offset=".18" stop-color="#fbfbe5"/><stop offset=".328" stop-color="#e6f7e9"/><stop offset=".508" stop-color="#e6f6fd"/><stop offset=".705" stop-color="#f0ecfb"/><stop offset=".82" stop-color="#fff1fa"/><stop offset="1" stop-color="#fff0ec"/></linearGradient><linearGradient id="p5" gradientUnits="userSpaceOnUse" x1="826" x2="1192" y1="0" y2="0"><stop offset="0" stop-color="#ffebdf"/><stop offset=".164" stop-color="#fcfbd9"/><stop offset=".328" stop-color="#dcf5e0"/><stop offset=".492" stop-color="#dcf3fc"/><stop offset=".607" stop-color="#e3e8f9"/><stop offset=".721" stop-color="#ede6fb"/><stop offset=".803" stop-color="#ffebf8"/><stop offset=".902" stop-color="#ffebee"/><stop offset="1" stop-color="#ffe9e5"/></linearGradient><linearGradient id="p6" gradientUnits="userSpaceOnUse" x1="826" x2="1192" y1="0" y2="0"><stop offset="0" stop-color="#ffe5d6"/><stop offset=".098" stop-color="#fff2cf"/><stop offset=".164" stop-color="#fbf9ce"/><stop offset=".279" stop-color="#dbf4d6"/><stop offset=".328" stop-color="#d1f2d6"/><stop offset=".41" stop-color="#d3f2e9"/><stop offset=".492" stop-color="#d1f0fb"/><stop offset=".59" stop-color="#d8e4f8"/><stop offset=".689" stop-color="#e1dcf8"/><stop offset=".803" stop-color="#ffe5f6"/><stop offset=".885" stop-color="#ffe5ed"/><stop offset=".984" stop-color="#ffe3dd"/><stop offset="1" stop-color="#ffe3dd"/></linearGradient><linearGradient id="p7" gradientUnits="userSpaceOnUse" x1="826" x2="1192" y1="0" y2="0"><stop offset="0" stop-color="#ffdecd"/><stop offset=".082" stop-color="#ffeac7"/><stop offset=".148" stop-color="#fdf8c1"/><stop offset=".23" stop-color="#e6f5cb"/><stop offset=".311" stop-color="#c9efcc"/><stop offset=".393" stop-color="#c8efdd"/><stop offset=".475" stop-color="#c6edf8"/><stop offset=".541" stop-color="#c7e6fb"/><stop offset=".656" stop-color="#d6d4f5"/><stop offset=".738" stop-color="#e7d9f8"/><stop offset=".803" stop-color="#ffdef4"/><stop offset=".869" stop-color="#ffdfee"/><stop offset=".967" stop-color="#ffdcd6"/><stop offset="1" stop-color="#ffdcd4"/></linearGradient><linearGradient id="p8" gradientUnits="userSpaceOnUse" x1="826" x2="1192" y1="0" y2="0"><stop offset="0" stop-color="#ffd8c4"/><stop offset=".066" stop-color="#ffe2be"/><stop offset=".148" stop-color="#fdf7b6"/><stop offset=".213" stop-color="#eaf4bf"/><stop offset=".311" stop-color="#bfecc3"/><stop offset=".377" stop-color="#beecd0"/><stop offset=".459" stop-color="#bcebf2"/><stop offset=".525" stop-color="#bae5fb"/><stop offset=".656" stop-color="#cfccf2"/><stop offset=".721" stop-color="#decff6"/><stop offset=".803" stop-color="#ffd8f2"/><stop offset=".869" stop-color="#ffd9ea"/><stop offset=".967" stop-color="#ffd6ce"/><stop offset="1" stop-color="#ffd5cc"/></linearGradient><linearGradient id="p9" gradientUnits="userSpaceOnUse" x1="826" x2="1192" y1="0" y2="0"><stop offset="0" stop-color="#ffd2bb"/><stop offset=".049" stop-color="#ffd9b8"/><stop offset=".148" stop-color="#fdf6ac"/><stop offset=".213" stop-color="#e9f3b6"/><stop offset=".295" stop-color="#bdebba"/><stop offset=".328" stop-color="#b2e8bd"/><stop offset=".393" stop-color="#b4e9d1"/><stop offset=".459" stop-color="#b2e8f0"/><stop offset=".508" stop-color="#aee4fb"/><stop offset=".59" stop-color="#bcd2f4"/><stop offset=".672" stop-color="#c9c3f1"/><stop offset=".754" stop-color="#e8cdf4"/><stop offset=".803" stop-color="#ffd2f0"/><stop offset=".869" stop-color="#ffd2e7"/><stop offset=".967" stop-color="#ffcfc6"/><stop offset="1" stop-color="#ffcfc4"/></linearGradient><linearGradient id="p10" gradientUnits="userSpaceOnUse" x1="826" x2="1192" y1="0" y2="0"><stop offset="0" stop-color="#ffcdb4"/><stop offset=".049" stop-color="#ffd5b0"/><stop offset=".148" stop-color="#fdf4a4"/><stop offset=".213" stop-color="#e8f2ae"/><stop offset=".279" stop-color="#c1ecb4"/><stop offset=".311" stop-color="#ade7b3"/><stop offset=".344" stop-color="#a9e6b9"/><stop offset=".393" stop-color="#abe6cc"/><stop offset=".459" stop-color="#a8e6ee"/><stop offset=".508" stop-color="#a2e0fa"/><stop offset=".639" stop-color="#bec0ee"/><stop offset=".689" stop-color="#c7bcef"/><stop offset=".77" stop-color="#f0c9f1"/><stop offset=".803" stop-color="#ffcdee"/><stop offset=".869" stop-color="#ffcde3"/><stop offset=".951" stop-color="#ffcbc2"/><stop offset="1" stop-color="#ffc8bb"/></linearGradient><linearGradient id="p11" gradientUnits="userSpaceOnUse" x1="826" x2="1192" y1="0" y2="0"><stop offset="0" stop-color="#ffc8ad"/><stop offset=".049" stop-color="#ffd0a8"/><stop offset=".148" stop-color="#fdf29c"/><stop offset=".197" stop-color="#f1f2a4"/><stop offset=".279" stop-color="#bceaad"/><stop offset=".311" stop-color="#a5e4ad"/><stop offset=".344" stop-color="#9fe3b3"/><stop offset=".393" stop-color="#a1e4c8"/><stop offset=".443" stop-color="#a1e4e5"/><stop offset=".492" stop-color="#94e0f7"/><stop offset=".541" stop-color="#9cd6f8"/><stop offset=".639" stop-color="#b6baeb"/><stop offset=".689" stop-color="#c1b4eb"/><stop offset=".787" stop-color="#f9c6ee"/><stop offset=".82" stop-color="#ffc8eb"/><stop offset=".869" stop-color="#ffc6e0"/><stop offset=".951" stop-color="#ffc5bb"/><stop offset="1" stop-color="#ffc2b2"/></linearGradient><linearGradient id="p12" gradientUnits="userSpaceOnUse" x1="826" x2="1192" y1="0" y2="0"><stop offset="0" stop-color="#ffc2a7"/><stop offset=".033" stop-color="#ffc6a4"/><stop offset=".131" stop-color="#ffed95"/><stop offset=".197" stop-color="#f2f29d"/><stop offset=".262" stop-color="#c7eca7"/><stop offset=".311" stop-color="#9ce1a7"/><stop offset=".344" stop-color="#95e0ad"/><stop offset=".393" stop-color="#97e1c3"/><stop offset=".443" stop-color="#96e2e2"/><stop offset=".492" stop-color="#84dcf5"/><stop offset=".525" stop-color="#89d6f8"/><stop offset=".623" stop-color="#abb8eb"/><stop offset=".672" stop-color="#b3ace7"/><stop offset=".738" stop-color="#d9b7ed"/><stop offset=".787" stop-color="#f9c0ed"/><stop offset=".82" stop-color="#ffc2e9"/><stop offset=".869" stop-color="#ffc0dc"/><stop offset=".934" stop-color="#ffc1ba"/><stop offset=".984" stop-color="#ffbba9"/><stop offset="1" stop-color="#ffbba9"/></linearGradient><linearGradient id="p13" gradientUnits="userSpaceOnUse" x1="826" x2="1192" y1="0" y2="0"><stop offset="0" stop-color="#ffbda1"/><stop offset=".033" stop-color="#ffc19e"/><stop offset=".131" stop-color="#ffea8f"/><stop offset=".197" stop-color="#f4f296"/><stop offset=".246" stop-color="#d3ee9f"/><stop offset=".311" stop-color="#93dfa1"/><stop offset=".328" stop-color="#8cdda3"/><stop offset=".377" stop-color="#8ddeb4"/><stop offset=".443" stop-color="#8ce1df"/><stop offset=".492" stop-color="#74d9f4"/><stop offset=".525" stop-color="#7bd2f7"/><stop offset=".59" stop-color="#98beef"/><stop offset=".672" stop-color="#aba4e3"/><stop offset=".721" stop-color="#cbabe7"/><stop offset=".787" stop-color="#f9bbeb"/><stop offset=".82" stop-color="#ffbce7"/><stop offset=".869" stop-color="#ffb9d8"/><stop offset=".934" stop-color="#ffbcb2"/><stop offset=".984" stop-color="#ffb49f"/><stop offset="1" stop-color="#ffb49f"/></linearGradient><linearGradient id="p14" gradientUnits="userSpaceOnUse" x1="826" x2="1192" y1="0" y2="0"><stop offset="0" stop-color="#ffb89a"/><stop offset=".033" stop-color="#ffbd97"/><stop offset=".115" stop-color="#ffe189"/><stop offset=".164" stop-color="#fdef8a"/><stop offset=".197" stop-color="#f7f18f"/><stop offset=".246" stop-color="#d4ed99"/><stop offset=".279" stop-color="#b1e69b"/><stop offset=".311" stop-color="#8bdc9b"/><stop offset=".328" stop-color="#82da9e"/><stop offset=".377" stop-color="#83dbaf"/><stop offset=".443" stop-color="#81dfdc"/><stop offset=".492" stop-color="#64d5f2"/><stop offset=".508" stop-color="#65d2f6"/><stop offset=".574" stop-color="#88c1f1"/><stop offset=".672" stop-color="#a39cdf"/><stop offset=".705" stop-color="#b99fe1"/><stop offset=".787" stop-color="#f9b5e9"/><stop offset=".82" stop-color="#ffb6e5"/><stop offset=".869" stop-color="#ffb3d4"/><stop offset=".934" stop-color="#ffb7ab"/><stop offset=".984" stop-color="#ffae96"/><stop offset="1" stop-color="#ffae96"/></linearGradient><linearGradient id="p15" gradientUnits="userSpaceOnUse" x1="826" x2="1192" y1="0" y2="0"><stop offset="0" stop-color="#ffb394"/><stop offset=".033" stop-color="#ffb891"/><stop offset=".098" stop-color="#ffd683"/><stop offset=".148" stop-color="#feea83"/><stop offset=".197" stop-color="#f9f188"/><stop offset=".23" stop-color="#e3ef8f"/><stop offset=".262" stop-color="#c4ea95"/><stop offset=".311" stop-color="#83d996"/><stop offset=".328" stop-color="#79d799"/><stop offset=".377" stop-color="#79d8aa"/><stop offset=".426" stop-color="#7bdecf"/><stop offset=".443" stop-color="#77ddd9"/><stop offset=".492" stop-color="#55d2f1"/><stop offset=".508" stop-color="#56cff4"/><stop offset=".557" stop-color="#78c3f3"/><stop offset=".672" stop-color="#9c94db"/><stop offset=".705" stop-color="#b497dd"/><stop offset=".77" stop-color="#edace6"/><stop offset=".803" stop-color="#ffb2e6"/><stop offset=".852" stop-color="#ffacd8"/><stop offset=".934" stop-color="#ffb1a3"/><stop offset=".984" stop-color="#ffa78c"/><stop offset="1" stop-color="#ffa78c"/></linearGradient><linearGradient id="p16" gradientUnits="userSpaceOnUse" x1="826" x2="1192" y1="0" y2="0"><stop offset="0" stop-color="#ffad8e"/><stop offset=".033" stop-color="#ffb28b"/><stop offset=".098" stop-color="#ffd37d"/><stop offset=".148" stop-color="#ffe87d"/><stop offset=".197" stop-color="#fbf181"/><stop offset=".23" stop-color="#e5ef88"/><stop offset=".262" stop-color="#c3e98f"/><stop offset=".311" stop-color="#7bd791"/><stop offset=".328" stop-color="#70d494"/><stop offset=".377" stop-color="#70d5a6"/><stop offset=".426" stop-color="#72dccc"/><stop offset=".443" stop-color="#6edcd7"/><stop offset=".492" stop-color="#47cff0"/><stop offset=".508" stop-color="#48cbf3"/><stop offset=".557" stop-color="#6fc0f2"/><stop offset=".672" stop-color="#958dd7"/><stop offset=".705" stop-color="#b090d9"/><stop offset=".754" stop-color="#e0a1e1"/><stop offset=".787" stop-color="#f8aae5"/><stop offset=".803" stop-color="#fface4"/><stop offset=".852" stop-color="#ffa6d5"/><stop offset=".918" stop-color="#ffada7"/><stop offset=".967" stop-color="#ffa288"/><stop offset="1" stop-color="#ffa083"/></linearGradient><linearGradient id="p17" gradientUnits="userSpaceOnUse" x1="826" x2="1192" y1="0" y2="0"><stop offset="0" stop-color="#ffa788"/><stop offset=".033" stop-color="#ffad84"/><stop offset=".082" stop-color="#ffc777"/><stop offset=".148" stop-color="#ffe677"/><stop offset=".197" stop-color="#fdf07a"/><stop offset=".23" stop-color="#e6ef81"/><stop offset=".262" stop-color="#c2e889"/><stop offset=".311" stop-color="#75d48c"/><stop offset=".328" stop-color="#69d18f"/><stop offset=".377" stop-color="#68d3a3"/><stop offset=".426" stop-color="#6bdac9"/><stop offset=".443" stop-color="#66dad5"/><stop offset=".492" stop-color="#3cccee"/><stop offset=".508" stop-color="#3dc8f2"/><stop offset=".557" stop-color="#67bcf1"/><stop offset=".672" stop-color="#9087d4"/><stop offset=".705" stop-color="#ac8ad5"/><stop offset=".754" stop-color="#de9bde"/><stop offset=".787" stop-color="#f8a5e3"/><stop offset=".803" stop-color="#ffa7e2"/><stop offset=".852" stop-color="#ff9fd1"/><stop offset=".918" stop-color="#ffa8a1"/><stop offset=".967" stop-color="#ff9b80"/><stop offset="1" stop-color="#ff997a"/></linearGradient><linearGradient id="p18" gradientUnits="userSpaceOnUse" x1="826" x2="1192" y1="0" y2="0"><stop offset="0" stop-color="#ffa182"/><stop offset=".016" stop-color="#ffa182"/><stop offset=".082" stop-color="#ffc371"/><stop offset=".148" stop-color="#ffe471"/><stop offset=".197" stop-color="#fef072"/><stop offset=".23" stop-color="#e7ee7a"/><stop offset=".262" stop-color="#c1e682"/><stop offset=".311" stop-color="#6fd287"/><stop offset=".328" stop-color="#63cf8b"/><stop offset=".377" stop-color="#61d0a0"/><stop offset=".426" stop-color="#64d8c7"/><stop offset=".443" stop-color="#5fd8d3"/><stop offset=".492" stop-color="#33caee"/><stop offset=".508" stop-color="#34c6f2"/><stop offset=".557" stop-color="#60b9f0"/><stop offset=".672" stop-color="#8c82d1"/><stop offset=".705" stop-color="#a985d2"/><stop offset=".754" stop-color="#dd95db"/><stop offset=".787" stop-color="#f89fe1"/><stop offset=".803" stop-color="#ffa1e0"/><stop offset=".852" stop-color="#ff9acd"/><stop offset=".918" stop-color="#ffa19b"/><stop offset=".967" stop-color="#ff9578"/><stop offset=".984" stop-color="#ff9272"/><stop offset="1" stop-color="#ff9272"/></linearGradient><linearGradient id="p19" gradientUnits="userSpaceOnUse" x1="826" x2="1192" y1="0" y2="0"><stop offset="0" stop-color="#ff9b7b"/><stop offset=".016" stop-color="#ff9b7b"/><stop offset=".082" stop-color="#ffc06b"/><stop offset=".148" stop-color="#ffe26b"/><stop offset=".197" stop-color="#ffef69"/><stop offset=".23" stop-color="#e7ed72"/><stop offset=".262" stop-color="#c0e57c"/><stop offset=".311" stop-color="#6bd083"/><stop offset=".328" stop-color="#5ecc88"/><stop offset=".361" stop-color="#5bcd95"/><stop offset=".41" stop-color="#5fd3b7"/><stop offset=".443" stop-color="#5ad5d2"/><stop offset=".492" stop-color="#2ec8ed"/><stop offset=".508" stop-color="#2fc4f1"/><stop offset=".557" stop-color="#5bb6ef"/><stop offset=".656" stop-color="#8183d3"/><stop offset=".689" stop-color="#967dce"/><stop offset=".754" stop-color="#dc90d8"/><stop offset=".787" stop-color="#f79ade"/><stop offset=".803" stop-color="#ff9cdd"/><stop offset=".852" stop-color="#ff94c9"/><stop offset=".918" stop-color="#ff9b96"/><stop offset=".967" stop-color="#ff8e71"/><stop offset=".984" stop-color="#ff8a6b"/><stop offset="1" stop-color="#ff8a6b"/></linearGradient><linearGradient id="p20" gradientUnits="userSpaceOnUse" x1="826" x2="1192" y1="0" y2="0"><stop offset="0" stop-color="#ff9473"/><stop offset=".016" stop-color="#ff9473"/><stop offset=".082" stop-color="#ffbd65"/><stop offset=".148" stop-color="#ffe165"/><stop offset=".197" stop-color="#ffee60"/><stop offset=".23" stop-color="#e7ec69"/><stop offset=".262" stop-color="#c0e474"/><stop offset=".311" stop-color="#69ce7f"/><stop offset=".328" stop-color="#5bcb85"/><stop offset=".361" stop-color="#58cb93"/><stop offset=".41" stop-color="#5bd1b7"/><stop offset=".443" stop-color="#56d3d1"/><stop offset=".492" stop-color="#2cc7ed"/><stop offset=".508" stop-color="#2dc2f1"/><stop offset=".557" stop-color="#57b3ee"/><stop offset=".656" stop-color="#8081d1"/><stop offset=".689" stop-color="#957bcd"/><stop offset=".77" stop-color="#ea91d9"/><stop offset=".803" stop-color="#ff97da"/><stop offset=".852" stop-color="#ff90c5"/><stop offset=".918" stop-color="#ff9491"/><stop offset=".967" stop-color="#ff866a"/><stop offset=".984" stop-color="#ff8364"/><stop offset="1" stop-color="#ff8364"/></linearGradient><linearGradient id="p21" gradientUnits="userSpaceOnUse" x1="826" x2="1192" y1="0" y2="0"><stop offset="0" stop-color="#ff8c6b"/><stop offset=".016" stop-color="#ff8c6b"/><stop offset=".082" stop-color="#ffb95f"/><stop offset=".148" stop-color="#ffe05f"/><stop offset=".197" stop-color="#ffed57"/><stop offset=".23" stop-color="#e6eb60"/><stop offset=".262" stop-color="#bfe26d"/><stop offset=".311" stop-color="#67cc7c"/><stop offset=".328" stop-color="#59c983"/><stop offset=".361" stop-color="#55c993"/><stop offset=".41" stop-color="#58cfb7"/><stop offset=".443" stop-color="#54d0d1"/><stop offset=".492" stop-color="#2cc6ed"/><stop offset=".508" stop-color="#2dc1f1"/><stop offset=".557" stop-color="#55b0ee"/><stop offset=".656" stop-color="#807fd0"/><stop offset=".689" stop-color="#967acc"/><stop offset=".787" stop-color="#f790d9"/><stop offset=".803" stop-color="#ff91d7"/><stop offset=".852" stop-color="#ff8cc1"/><stop offset=".918" stop-color="#ff8d8c"/><stop offset=".967" stop-color="#ff7e64"/><stop offset=".984" stop-color="#ff7b5d"/><stop offset="1" stop-color="#ff7b5d"/></linearGradient><linearGradient id="p22" gradientUnits="userSpaceOnUse" x1="826" x2="1192" y1="0" y2="0"><stop offset="0" stop-color="#ff8463"/><stop offset=".016" stop-color="#ff8463"/><stop offset=".049" stop-color="#ff9b5e"/><stop offset=".098" stop-color="#ffc15a"/><stop offset=".148" stop-color="#ffde59"/><stop offset=".197" stop-color="#ffec4d"/><stop offset=".23" stop-color="#e6e957"/><stop offset=".262" stop-color="#bfe065"/><stop offset=".311" stop-color="#67ca79"/><stop offset=".328" stop-color="#58c781"/><stop offset=".361" stop-color="#54c892"/><stop offset=".426" stop-color="#56cec6"/><stop offset=".443" stop-color="#52ced2"/><stop offset=".492" stop-color="#2ec5ee"/><stop offset=".508" stop-color="#2fc1f1"/><stop offset=".574" stop-color="#5ba5e9"/><stop offset=".639" stop-color="#7984d4"/><stop offset=".689" stop-color="#9779cb"/><stop offset=".787" stop-color="#f78bd6"/><stop offset=".803" stop-color="#ff8cd4"/><stop offset=".852" stop-color="#ff88bd"/><stop offset=".934" stop-color="#ff827a"/><stop offset=".967" stop-color="#ff775f"/><stop offset=".984" stop-color="#ff7357"/><stop offset="1" stop-color="#ff7357"/></linearGradient><linearGradient id="p23" gradientUnits="userSpaceOnUse" x1="826" x2="1192" y1="0" y2="0"><stop offset="0" stop-color="#ff7d5b"/><stop offset=".016" stop-color="#ff7d5b"/><stop offset=".049" stop-color="#ff9557"/><stop offset=".098" stop-color="#ffbf55"/><stop offset=".148" stop-color="#ffdd54"/><stop offset=".197" stop-color="#ffeb42"/><stop offset=".23" stop-color="#e6e84d"/><stop offset=".262" stop-color="#bede5e"/><stop offset=".311" stop-color="#67c976"/><stop offset=".328" stop-color="#58c67f"/><stop offset=".361" stop-color="#53c693"/><stop offset=".426" stop-color="#55cbc6"/><stop offset=".443" stop-color="#51cbd2"/><stop offset=".492" stop-color="#32c5ee"/><stop offset=".508" stop-color="#32c0f2"/><stop offset=".574" stop-color="#5aa2e8"/><stop offset=".639" stop-color="#7a83d3"/><stop offset=".689" stop-color="#997acb"/><stop offset=".787" stop-color="#f686d3"/><stop offset=".803" stop-color="#ff87d1"/><stop offset=".852" stop-color="#ff84b8"/><stop offset=".934" stop-color="#ff7a76"/><stop offset=".967" stop-color="#ff6f59"/><stop offset=".984" stop-color="#ff6b52"/><stop offset="1" stop-color="#ff6b52"/></linearGradient><linearGradient id="p24" gradientUnits="userSpaceOnUse" x1="826" x2="1192" y1="0" y2="0"><stop offset="0" stop-color="#ff7553"/><stop offset=".016" stop-color="#ff7553"/><stop offset=".049" stop-color="#ff9051"/><stop offset=".115" stop-color="#ffc852"/><stop offset=".148" stop-color="#ffdc4e"/><stop offset=".18" stop-color="#ffe83d"/><stop offset=".197" stop-color="#ffea39"/><stop offset=".23" stop-color="#e5e744"/><stop offset=".262" stop-color="#bddc57"/><stop offset=".311" stop-color="#67c774"/><stop offset=".328" stop-color="#58c47e"/><stop offset=".361" stop-color="#52c593"/><stop offset=".443" stop-color="#51c8d3"/><stop offset=".492" stop-color="#36c4ee"/><stop offset=".508" stop-color="#36c0f2"/><stop offset=".574" stop-color="#59a0e7"/><stop offset=".623" stop-color="#7286d5"/><stop offset=".689" stop-color="#9b7aca"/><stop offset=".754" stop-color="#d47ccb"/><stop offset=".787" stop-color="#f681cf"/><stop offset=".803" stop-color="#ff82cd"/><stop offset=".852" stop-color="#ff81b4"/><stop offset=".934" stop-color="#ff7371"/><stop offset=".967" stop-color="#ff6755"/><stop offset=".984" stop-color="#ff644d"/><stop offset="1" stop-color="#ff644d"/></linearGradient><linearGradient id="p25" gradientUnits="userSpaceOnUse" x1="826" x2="1192" y1="0" y2="0"><stop offset="0" stop-color="#ff6d4c"/><stop offset=".016" stop-color="#ff6d4c"/><stop offset=".049" stop-color="#ff8a4b"/><stop offset=".098" stop-color="#ffb94b"/><stop offset=".131" stop-color="#ffd14d"/><stop offset=".164" stop-color="#ffe13e"/><stop offset=".197" stop-color="#ffe930"/><stop offset=".23" stop-color="#e5e53b"/><stop offset=".262" stop-color="#bcda50"/><stop offset=".311" stop-color="#67c571"/><stop offset=".328" stop-color="#59c27c"/><stop offset=".361" stop-color="#52c393"/><stop offset=".443" stop-color="#50c5d3"/><stop offset=".492" stop-color="#3ac4ef"/><stop offset=".525" stop-color="#40b8f1"/><stop offset=".59" stop-color="#6193df"/><stop offset=".639" stop-color="#7c80d0"/><stop offset=".738" stop-color="#c378c7"/><stop offset=".787" stop-color="#f57bcb"/><stop offset=".803" stop-color="#ff7cc9"/><stop offset=".852" stop-color="#ff7caf"/><stop offset=".934" stop-color="#ff6b6d"/><stop offset=".967" stop-color="#ff6050"/><stop offset=".984" stop-color="#ff5d48"/><stop offset="1" stop-color="#ff5d48"/></linearGradient><linearGradient id="p26" gradientUnits="userSpaceOnUse" x1="826" x2="1192" y1="0" y2="0"><stop offset="0" stop-color="#ff6646"/><stop offset=".016" stop-color="#ff6646"/><stop offset=".049" stop-color="#ff8545"/><stop offset=".098" stop-color="#ffb646"/><stop offset=".131" stop-color="#ffcf47"/><stop offset=".164" stop-color="#ffe037"/><stop offset=".197" stop-color="#ffe827"/><stop offset=".23" stop-color="#e4e333"/><stop offset=".262" stop-color="#bbd849"/><stop offset=".311" stop-color="#67c36e"/><stop offset=".328" stop-color="#59c07a"/><stop offset=".361" stop-color="#52c193"/><stop offset=".443" stop-color="#50c3d3"/><stop offset=".492" stop-color="#3ec3ee"/><stop offset=".525" stop-color="#42b6f1"/><stop offset=".59" stop-color="#6091dd"/><stop offset=".639" stop-color="#7d7ece"/><stop offset=".738" stop-color="#c174c4"/><stop offset=".787" stop-color="#f576c7"/><stop offset=".803" stop-color="#ff76c4"/><stop offset=".852" stop-color="#ff77aa"/><stop offset=".934" stop-color="#ff6369"/><stop offset=".967" stop-color="#ff594c"/><stop offset=".984" stop-color="#ff5644"/><stop offset="1" stop-color="#ff5644"/></linearGradient><linearGradient id="p27" gradientUnits="userSpaceOnUse" x1="826" x2="1192" y1="0" y2="0"><stop offset="0" stop-color="#ff6040"/><stop offset=".016" stop-color="#ff6040"/><stop offset=".049" stop-color="#ff8040"/><stop offset=".098" stop-color="#ffb341"/><stop offset=".131" stop-color="#ffcc41"/><stop offset=".164" stop-color="#ffde30"/><stop offset=".197" stop-color="#ffe820"/><stop offset=".23" stop-color="#e3e22c"/><stop offset=".262" stop-color="#b9d643"/><stop offset=".311" stop-color="#66c16b"/><stop offset=".328" stop-color="#58be78"/><stop offset=".361" stop-color="#51bf92"/><stop offset=".443" stop-color="#4fc0d2"/><stop offset=".492" stop-color="#40c1ee"/><stop offset=".525" stop-color="#43b4f0"/><stop offset=".59" stop-color="#5f8edb"/><stop offset=".639" stop-color="#7c7bcc"/><stop offset=".738" stop-color="#be70c0"/><stop offset=".787" stop-color="#f570c2"/><stop offset=".803" stop-color="#ff70bf"/><stop offset=".852" stop-color="#ff71a5"/><stop offset=".967" stop-color="#ff5348"/><stop offset=".984" stop-color="#ff5040"/><stop offset="1" stop-color="#ff5040"/></linearGradient><linearGradient id="p28" gradientUnits="userSpaceOnUse" x1="826" x2="1192" y1="0" y2="0"><stop offset="0" stop-color="#ff5a3b"/><stop offset=".016" stop-color="#ff5a3b"/><stop offset=".033" stop-color="#ff683b"/><stop offset=".082" stop-color="#ffa13b"/><stop offset=".131" stop-color="#ffc93b"/><stop offset=".164" stop-color="#ffdc2a"/><stop offset=".197" stop-color="#ffe71a"/><stop offset=".23" stop-color="#e1e027"/><stop offset=".262" stop-color="#b6d43e"/><stop offset=".311" stop-color="#65bf67"/><stop offset=".328" stop-color="#57bc75"/><stop offset=".361" stop-color="#50bc90"/><stop offset=".443" stop-color="#4ebdd2"/><stop offset=".492" stop-color="#41bfed"/><stop offset=".525" stop-color="#44b2ef"/><stop offset=".59" stop-color="#5d8bd9"/><stop offset=".639" stop-color="#7b78c9"/><stop offset=".738" stop-color="#bb6bbc"/><stop offset=".787" stop-color="#f269bc"/><stop offset=".803" stop-color="#fe69b9"/><stop offset=".852" stop-color="#fe69a0"/><stop offset=".967" stop-color="#fe4d44"/><stop offset=".984" stop-color="#ff4b3c"/><stop offset="1" stop-color="#ff4b3c"/></linearGradient><linearGradient id="p29" gradientUnits="userSpaceOnUse" x1="826" x2="1192" y1="0" y2="0"><stop offset="0" stop-color="#ff5437"/><stop offset=".016" stop-color="#ff5437"/><stop offset=".033" stop-color="#ff6237"/><stop offset=".082" stop-color="#ff9d36"/><stop offset=".131" stop-color="#ffc532"/><stop offset=".18" stop-color="#ffe218"/><stop offset=".197" stop-color="#ffe614"/><stop offset=".213" stop-color="#f2e518"/><stop offset=".262" stop-color="#b3d139"/><stop offset=".311" stop-color="#65bd63"/><stop offset=".328" stop-color="#57ba72"/><stop offset=".361" stop-color="#4fba8f"/><stop offset=".443" stop-color="#4dbbd1"/><stop offset=".492" stop-color="#43bdec"/><stop offset=".525" stop-color="#44b0ed"/><stop offset=".574" stop-color="#5392de"/><stop offset=".623" stop-color="#6f78c9"/><stop offset=".738" stop-color="#b765b6"/><stop offset=".787" stop-color="#ef62b5"/><stop offset=".803" stop-color="#fb61b2"/><stop offset=".852" stop-color="#fd609a"/><stop offset=".967" stop-color="#fe4740"/><stop offset=".984" stop-color="#ff463a"/><stop offset="1" stop-color="#ff463a"/></linearGradient><linearGradient id="p30" gradientUnits="userSpaceOnUse" x1="826" x2="1192" y1="0" y2="0"><stop offset="0" stop-color="#ff4f33"/><stop offset=".016" stop-color="#ff4f33"/><stop offset=".033" stop-color="#ff5d33"/><stop offset=".082" stop-color="#ff9932"/><stop offset=".148" stop-color="#ffcc24"/><stop offset=".18" stop-color="#ffe112"/><stop offset=".197" stop-color="#ffe60f"/><stop offset=".213" stop-color="#f1e413"/><stop offset=".262" stop-color="#b0cf34"/><stop offset=".311" stop-color="#64bb5f"/><stop offset=".328" stop-color="#56b76e"/><stop offset=".377" stop-color="#4db79c"/><stop offset=".459" stop-color="#49badb"/><stop offset=".492" stop-color="#44bbeb"/><stop offset=".525" stop-color="#45aeec"/><stop offset=".574" stop-color="#528fdc"/><stop offset=".623" stop-color="#6d74c5"/><stop offset=".705" stop-color="#9f66b8"/><stop offset=".738" stop-color="#b35fb0"/><stop offset=".787" stop-color="#ec5aad"/><stop offset=".803" stop-color="#f859aa"/><stop offset=".836" stop-color="#fc579d"/><stop offset=".885" stop-color="#fb4f7c"/><stop offset=".967" stop-color="#fe423d"/><stop offset=".984" stop-color="#ff4137"/><stop offset="1" stop-color="#ff4137"/></linearGradient><linearGradient id="p31" gradientUnits="userSpaceOnUse" x1="826" x2="1192" y1="0" y2="0"><stop offset="0" stop-color="#ff4930"/><stop offset=".016" stop-color="#ff4930"/><stop offset=".033" stop-color="#ff5830"/><stop offset=".082" stop-color="#ff952d"/><stop offset=".148" stop-color="#ffc91b"/><stop offset=".18" stop-color="#ffe00c"/><stop offset=".197" stop-color="#ffe50a"/><stop offset=".213" stop-color="#f0e30f"/><stop offset=".279" stop-color="#93c53d"/><stop offset=".311" stop-color="#63b85b"/><stop offset=".328" stop-color="#55b56b"/><stop offset=".377" stop-color="#4cb39a"/><stop offset=".459" stop-color="#49b8da"/><stop offset=".492" stop-color="#45b9ea"/><stop offset=".525" stop-color="#46abeb"/><stop offset=".574" stop-color="#518cd9"/><stop offset=".623" stop-color="#6c70c1"/><stop offset=".705" stop-color="#9c60b3"/><stop offset=".738" stop-color="#af59aa"/><stop offset=".787" stop-color="#e752a5"/><stop offset=".803" stop-color="#f450a2"/><stop offset=".836" stop-color="#fa4d96"/><stop offset=".885" stop-color="#fa4576"/><stop offset=".951" stop-color="#fc3d44"/><stop offset=".984" stop-color="#ff3d35"/><stop offset="1" stop-color="#ff3d35"/></linearGradient><linearGradient id="p32" gradientUnits="userSpaceOnUse" x1="826" x2="1192" y1="0" y2="0"><stop offset="0" stop-color="#ff452e"/><stop offset=".016" stop-color="#ff452e"/><stop offset=".033" stop-color="#ff532d"/><stop offset=".082" stop-color="#ff9128"/><stop offset=".18" stop-color="#ffde07"/><stop offset=".197" stop-color="#ffe507"/><stop offset=".213" stop-color="#efe30c"/><stop offset=".279" stop-color="#8fc239"/><stop offset=".311" stop-color="#62b657"/><stop offset=".328" stop-color="#55b267"/><stop offset=".377" stop-color="#4bb099"/><stop offset=".459" stop-color="#49b6d8"/><stop offset=".492" stop-color="#46b6e9"/><stop offset=".525" stop-color="#46a9e9"/><stop offset=".574" stop-color="#5089d6"/><stop offset=".623" stop-color="#6a6cbd"/><stop offset=".689" stop-color="#905fb4"/><stop offset=".738" stop-color="#ab52a3"/><stop offset=".787" stop-color="#e34a9d"/><stop offset=".803" stop-color="#f04899"/><stop offset=".836" stop-color="#f7428f"/><stop offset=".869" stop-color="#f83d7d"/><stop offset=".934" stop-color="#f93649"/><stop offset=".984" stop-color="#ff3a34"/><stop offset="1" stop-color="#ff3a34"/></linearGradient><linearGradient id="p33" gradientUnits="userSpaceOnUse" x1="826" x2="1192" y1="0" y2="0"><stop offset="0" stop-color="#ff402c"/><stop offset=".016" stop-color="#ff402c"/><stop offset=".033" stop-color="#ff4f2b"/><stop offset=".082" stop-color="#ff8d24"/><stop offset=".164" stop-color="#ffd006"/><stop offset=".18" stop-color="#ffdd03"/><stop offset=".197" stop-color="#ffe403"/><stop offset=".213" stop-color="#eee209"/><stop offset=".279" stop-color="#8cbf36"/><stop offset=".311" stop-color="#60b353"/><stop offset=".328" stop-color="#54af63"/><stop offset=".377" stop-color="#4bac97"/><stop offset=".443" stop-color="#4ab1cb"/><stop offset=".492" stop-color="#47b3e7"/><stop offset=".525" stop-color="#46a6e6"/><stop offset=".574" stop-color="#4f86d3"/><stop offset=".623" stop-color="#6868b9"/><stop offset=".689" stop-color="#8d59b0"/><stop offset=".738" stop-color="#a74c9d"/><stop offset=".787" stop-color="#df4395"/><stop offset=".803" stop-color="#ec4091"/><stop offset=".836" stop-color="#f53988"/><stop offset=".869" stop-color="#f63378"/><stop offset=".918" stop-color="#f62f4e"/><stop offset=".967" stop-color="#fd3536"/><stop offset="1" stop-color="#ff3732"/></linearGradient><linearGradient id="p34" gradientUnits="userSpaceOnUse" x1="826" x2="1192" y1="0" y2="0"><stop offset="0" stop-color="#ff3d2a"/><stop offset=".016" stop-color="#ff3d2a"/><stop offset=".033" stop-color="#ff4b29"/><stop offset=".082" stop-color="#ff8921"/><stop offset=".148" stop-color="#ffbe04"/><stop offset=".18" stop-color="#ffdb00"/><stop offset=".197" stop-color="#ffe301"/><stop offset=".213" stop-color="#ede007"/><stop offset=".279" stop-color="#89bc33"/><stop offset=".311" stop-color="#5fb050"/><stop offset=".328" stop-color="#53ac60"/><stop offset=".377" stop-color="#4aa894"/><stop offset=".443" stop-color="#4aafc9"/><stop offset=".492" stop-color="#48b0e4"/><stop offset=".525" stop-color="#47a3e4"/><stop offset=".574" stop-color="#4e83d0"/><stop offset=".623" stop-color="#6664b6"/><stop offset=".689" stop-color="#8954ac"/><stop offset=".738" stop-color="#a34798"/><stop offset=".787" stop-color="#db3c8e"/><stop offset=".803" stop-color="#e8398a"/><stop offset=".836" stop-color="#f23082"/><stop offset=".869" stop-color="#f42a72"/><stop offset=".918" stop-color="#f42848"/><stop offset=".967" stop-color="#fd3234"/><stop offset="1" stop-color="#ff3431"/></linearGradient><linearGradient id="p35" gradientUnits="userSpaceOnUse" x1="826" x2="1192" y1="0" y2="0"><stop offset="0" stop-color="#ff3a28"/><stop offset=".016" stop-color="#ff3a28"/><stop offset=".033" stop-color="#ff4928"/><stop offset=".082" stop-color="#ff871f"/><stop offset=".131" stop-color="#ffad04"/><stop offset=".18" stop-color="#ffda00"/><stop offset=".197" stop-color="#ffe100"/><stop offset=".213" stop-color="#ecdf06"/><stop offset=".262" stop-color="#9cc024"/><stop offset=".295" stop-color="#70b23e"/><stop offset=".311" stop-color="#5ead4c"/><stop offset=".344" stop-color="#4da66e"/><stop offset=".393" stop-color="#47a5a0"/><stop offset=".475" stop-color="#48aedb"/><stop offset=".508" stop-color="#47a8e3"/><stop offset=".557" stop-color="#488bd4"/><stop offset=".623" stop-color="#6361b2"/><stop offset=".689" stop-color="#8650a8"/><stop offset=".738" stop-color="#a04393"/><stop offset=".787" stop-color="#d73787"/><stop offset=".803" stop-color="#e53383"/><stop offset=".836" stop-color="#ef297c"/><stop offset=".869" stop-color="#f2236e"/><stop offset=".918" stop-color="#f22244"/><stop offset=".967" stop-color="#fc2f33"/><stop offset="1" stop-color="#ff3130"/></linearGradient><linearGradient id="p36" gradientUnits="userSpaceOnUse" x1="826" x2="1192" y1="0" y2="0"><stop offset="0" stop-color="#fe3727"/><stop offset=".016" stop-color="#fe3727"/><stop offset=".033" stop-color="#fe4626"/><stop offset=".082" stop-color="#fe841d"/><stop offset=".131" stop-color="#feab01"/><stop offset=".18" stop-color="#ffd800"/><stop offset=".197" stop-color="#ffdf00"/><stop offset=".213" stop-color="#ebdc05"/><stop offset=".262" stop-color="#99bd23"/><stop offset=".295" stop-color="#6daf3b"/><stop offset=".328" stop-color="#51a559"/><stop offset=".393" stop-color="#46a09d"/><stop offset=".475" stop-color="#47aad7"/><stop offset=".508" stop-color="#47a4df"/><stop offset=".557" stop-color="#4788d0"/><stop offset=".623" stop-color="#615eae"/><stop offset=".689" stop-color="#844da4"/><stop offset=".738" stop-color="#9e4090"/><stop offset=".787" stop-color="#d43382"/><stop offset=".803" stop-color="#e12e7e"/><stop offset=".852" stop-color="#ee2073"/><stop offset=".885" stop-color="#f01d5c"/><stop offset=".918" stop-color="#ef1f41"/><stop offset=".967" stop-color="#fc2c31"/><stop offset="1" stop-color="#fe2f2f"/></linearGradient><linearGradient id="p37" gradientUnits="userSpaceOnUse" x1="826" x2="1192" y1="0" y2="0"><stop offset="0" stop-color="#fc3627"/><stop offset=".016" stop-color="#fc3627"/><stop offset=".033" stop-color="#fc4526"/><stop offset=".082" stop-color="#fb831d"/><stop offset=".131" stop-color="#fcaa01"/><stop offset=".18" stop-color="#ffd600"/><stop offset=".197" stop-color="#fbdd00"/><stop offset=".213" stop-color="#e7da06"/><stop offset=".262" stop-color="#95ba22"/><stop offset=".295" stop-color="#6bab3a"/><stop offset=".328" stop-color="#50a056"/><stop offset=".393" stop-color="#459b98"/><stop offset=".475" stop-color="#46a5d2"/><stop offset=".508" stop-color="#469fdb"/><stop offset=".557" stop-color="#4685cb"/><stop offset=".623" stop-color="#5f5aaa"/><stop offset=".689" stop-color="#824ba2"/><stop offset=".738" stop-color="#9d3f8e"/><stop offset=".787" stop-color="#d1307f"/><stop offset=".82" stop-color="#e62777"/><stop offset=".852" stop-color="#ec1e6f"/><stop offset=".885" stop-color="#ed1b59"/><stop offset=".918" stop-color="#ec1d3f"/><stop offset=".967" stop-color="#f92b30"/><stop offset="1" stop-color="#fc2e2f"/></linearGradient><linearGradient id="p38" gradientUnits="userSpaceOnUse" x1="826" x2="1192" y1="0" y2="0"><stop offset="0" stop-color="#fa3627"/><stop offset=".016" stop-color="#fa3627"/><stop offset=".033" stop-color="#f94526"/><stop offset=".082" stop-color="#f6831e"/><stop offset=".131" stop-color="#f8aa03"/><stop offset=".18" stop-color="#fdd300"/><stop offset=".197" stop-color="#f6da03"/><stop offset=".213" stop-color="#e2d708"/><stop offset=".262" stop-color="#92b623"/><stop offset=".311" stop-color="#5a9f45"/><stop offset=".344" stop-color="#499764"/><stop offset=".393" stop-color="#439693"/><stop offset=".475" stop-color="#45a0cd"/><stop offset=".508" stop-color="#459ad5"/><stop offset=".574" stop-color="#4977bd"/><stop offset=".623" stop-color="#5c57a7"/><stop offset=".689" stop-color="#814a9f"/><stop offset=".738" stop-color="#9d3f8e"/><stop offset=".787" stop-color="#cf2f7c"/><stop offset=".82" stop-color="#e32574"/><stop offset=".852" stop-color="#ea1e6d"/><stop offset=".885" stop-color="#eb1c57"/><stop offset=".918" stop-color="#e91e3e"/><stop offset=".967" stop-color="#f52a30"/><stop offset="1" stop-color="#f82d2e"/></linearGradient><linearGradient id="p39" gradientUnits="userSpaceOnUse" x1="826" x2="1192" y1="0" y2="0"><stop offset="0" stop-color="#f73728"/><stop offset=".016" stop-color="#f73728"/><stop offset=".033" stop-color="#f54627"/><stop offset=".082" stop-color="#f18320"/><stop offset=".131" stop-color="#f4aa06"/><stop offset=".18" stop-color="#f7d103"/><stop offset=".197" stop-color="#f0d706"/><stop offset=".213" stop-color="#ddd30c"/><stop offset=".262" stop-color="#8fb325"/><stop offset=".311" stop-color="#599a44"/><stop offset=".344" stop-color="#489160"/><stop offset=".393" stop-color="#41908d"/><stop offset=".475" stop-color="#439ac6"/><stop offset=".508" stop-color="#4395cf"/><stop offset=".574" stop-color="#4873b7"/><stop offset=".623" stop-color="#5954a3"/><stop offset=".689" stop-color="#80499e"/><stop offset=".738" stop-color="#9e408f"/><stop offset=".803" stop-color="#d92a75"/><stop offset=".852" stop-color="#e8206a"/><stop offset=".885" stop-color="#e81e56"/><stop offset=".918" stop-color="#e61f3d"/><stop offset=".967" stop-color="#f12a30"/><stop offset="1" stop-color="#f42d2e"/></linearGradient><linearGradient id="p40" gradientUnits="userSpaceOnUse" x1="826" x2="1192" y1="0" y2="0"><stop offset="0" stop-color="#f33929"/><stop offset=".016" stop-color="#f33929"/><stop offset=".033" stop-color="#f14729"/><stop offset=".082" stop-color="#eb8323"/><stop offset=".131" stop-color="#efab0b"/><stop offset=".18" stop-color="#f1ce08"/><stop offset=".197" stop-color="#e9d30b"/><stop offset=".213" stop-color="#d7cf0f"/><stop offset=".262" stop-color="#8caf27"/><stop offset=".311" stop-color="#579442"/><stop offset=".344" stop-color="#478b5c"/><stop offset=".393" stop-color="#3f8a87"/><stop offset=".475" stop-color="#4194c0"/><stop offset=".508" stop-color="#418fc8"/><stop offset=".574" stop-color="#476fb1"/><stop offset=".623" stop-color="#5751a0"/><stop offset=".705" stop-color="#894799"/><stop offset=".754" stop-color="#ac3c8a"/><stop offset=".803" stop-color="#d72a73"/><stop offset=".852" stop-color="#e62269"/><stop offset=".918" stop-color="#e2223e"/><stop offset=".967" stop-color="#ed2b30"/><stop offset="1" stop-color="#ef2d2e"/></linearGradient><linearGradient id="p41" gradientUnits="userSpaceOnUse" x1="826" x2="1192" y1="0" y2="0"><stop offset="0" stop-color="#ef3a2a"/><stop offset=".016" stop-color="#ef3a2a"/><stop offset=".033" stop-color="#ed492a"/><stop offset=".082" stop-color="#e58425"/><stop offset=".131" stop-color="#ebac10"/><stop offset=".18" stop-color="#eacc0d"/><stop offset=".197" stop-color="#e2cf0f"/><stop offset=".213" stop-color="#d0cb14"/><stop offset=".262" stop-color="#88ac29"/><stop offset=".311" stop-color="#568e41"/><stop offset=".344" stop-color="#458459"/><stop offset=".393" stop-color="#3d8480"/><stop offset=".475" stop-color="#3e8eb9"/><stop offset=".508" stop-color="#3f8ac1"/><stop offset=".574" stop-color="#466cab"/><stop offset=".623" stop-color="#544e9c"/><stop offset=".721" stop-color="#944696"/><stop offset=".77" stop-color="#bc3782"/><stop offset=".803" stop-color="#d42b72"/><stop offset=".852" stop-color="#e32567"/><stop offset=".934" stop-color="#e02738"/><stop offset="1" stop-color="#eb2d2f"/></linearGradient><linearGradient id="p42" gradientUnits="userSpaceOnUse" x1="826" x2="1192" y1="0" y2="0"><stop offset="0" stop-color="#eb3c2c"/><stop offset=".016" stop-color="#eb3c2c"/><stop offset=".033" stop-color="#e84a2c"/><stop offset=".082" stop-color="#df8528"/><stop offset=".131" stop-color="#e5ad15"/><stop offset=".18" stop-color="#e3c912"/><stop offset=".197" stop-color="#dbcb14"/><stop offset=".213" stop-color="#cac718"/><stop offset=".262" stop-color="#85a82b"/><stop offset=".311" stop-color="#548840"/><stop offset=".344" stop-color="#437e55"/><stop offset=".393" stop-color="#3b7e79"/><stop offset=".475" stop-color="#3c88b1"/><stop offset=".508" stop-color="#3d84ba"/><stop offset=".574" stop-color="#4568a4"/><stop offset=".623" stop-color="#514c99"/><stop offset=".738" stop-color="#a04593"/><stop offset=".803" stop-color="#d12c71"/><stop offset=".852" stop-color="#e12966"/><stop offset=".934" stop-color="#dc2a39"/><stop offset="1" stop-color="#e52e2f"/></linearGradient><linearGradient id="p43" gradientUnits="userSpaceOnUse" x1="826" x2="1192" y1="0" y2="0"><stop offset="0" stop-color="#e73e2d"/><stop offset=".016" stop-color="#e73e2d"/><stop offset=".033" stop-color="#e44b2e"/><stop offset=".082" stop-color="#d9852b"/><stop offset=".131" stop-color="#e0ad1a"/><stop offset=".18" stop-color="#dcc617"/><stop offset=".197" stop-color="#d3c719"/><stop offset=".23" stop-color="#adb922"/><stop offset=".262" stop-color="#81a42e"/><stop offset=".311" stop-color="#52823f"/><stop offset=".344" stop-color="#417951"/><stop offset=".393" stop-color="#397873"/><stop offset=".475" stop-color="#3a82aa"/><stop offset=".508" stop-color="#3b7eb3"/><stop offset=".574" stop-color="#43659e"/><stop offset=".623" stop-color="#4e4a95"/><stop offset=".738" stop-color="#a14793"/><stop offset=".803" stop-color="#cf2d70"/><stop offset=".852" stop-color="#dd2c64"/><stop offset=".934" stop-color="#d82c3a"/><stop offset=".984" stop-color="#e02f2f"/><stop offset="1" stop-color="#e02f2f"/></linearGradient><linearGradient id="p44" gradientUnits="userSpaceOnUse" x1="826" x2="1192" y1="0" y2="0"><stop offset="0" stop-color="#e33f2f"/><stop offset=".016" stop-color="#e33f2f"/><stop offset=".049" stop-color="#da6030"/><stop offset=".082" stop-color="#d3852d"/><stop offset=".131" stop-color="#dbad1e"/><stop offset=".18" stop-color="#d5c21b"/><stop offset=".197" stop-color="#ccc31d"/><stop offset=".23" stop-color="#a7b525"/><stop offset=".279" stop-color="#6c9434"/><stop offset=".311" stop-color="#4e7d3e"/><stop offset=".344" stop-color="#3f744e"/><stop offset=".41" stop-color="#377678"/><stop offset=".492" stop-color="#387cab"/><stop offset=".525" stop-color="#3b76a8"/><stop offset=".574" stop-color="#426298"/><stop offset=".623" stop-color="#4b4892"/><stop offset=".705" stop-color="#864994"/><stop offset=".738" stop-color="#a04892"/><stop offset=".803" stop-color="#cb2e6f"/><stop offset=".852" stop-color="#da2e63"/><stop offset=".934" stop-color="#d32e3a"/><stop offset=".984" stop-color="#db2f2f"/><stop offset="1" stop-color="#db2f2f"/></linearGradient><linearGradient id="p45" gradientUnits="userSpaceOnUse" x1="826" x2="1192" y1="0" y2="0"><stop offset="0" stop-color="#de4030"/><stop offset=".016" stop-color="#de4030"/><stop offset=".049" stop-color="#d56031"/><stop offset=".082" stop-color="#ce842f"/><stop offset=".131" stop-color="#d6ac21"/><stop offset=".18" stop-color="#cfbe1f"/><stop offset=".197" stop-color="#c6be20"/><stop offset=".23" stop-color="#a1b028"/><stop offset=".279" stop-color="#688f35"/><stop offset=".311" stop-color="#4a793d"/><stop offset=".344" stop-color="#3c704b"/><stop offset=".41" stop-color="#367273"/><stop offset=".492" stop-color="#3777a4"/><stop offset=".525" stop-color="#3a71a2"/><stop offset=".574" stop-color="#405f93"/><stop offset=".623" stop-color="#48468e"/><stop offset=".705" stop-color="#834890"/><stop offset=".738" stop-color="#9d488f"/><stop offset=".803" stop-color="#c82f6e"/><stop offset=".852" stop-color="#d53062"/><stop offset=".934" stop-color="#cf303a"/><stop offset=".984" stop-color="#d63030"/><stop offset="1" stop-color="#d63030"/></linearGradient><linearGradient id="p46" gradientUnits="userSpaceOnUse" x1="826" x2="1192" y1="0" y2="0"><stop offset="0" stop-color="#da4031"/><stop offset=".016" stop-color="#da4031"/><stop offset=".049" stop-color="#d05f32"/><stop offset=".082" stop-color="#c98330"/><stop offset=".131" stop-color="#d1aa24"/><stop offset=".18" stop-color="#c9ba22"/><stop offset=".197" stop-color="#bfb924"/><stop offset=".23" stop-color="#9bab2a"/><stop offset=".295" stop-color="#527f38"/><stop offset=".328" stop-color="#3c6f41"/><stop offset=".393" stop-color="#356c63"/><stop offset=".475" stop-color="#357397"/><stop offset=".508" stop-color="#37709f"/><stop offset=".574" stop-color="#3e5d8f"/><stop offset=".623" stop-color="#45458b"/><stop offset=".689" stop-color="#71468a"/><stop offset=".738" stop-color="#99478a"/><stop offset=".803" stop-color="#c4306d"/><stop offset=".852" stop-color="#d03061"/><stop offset=".934" stop-color="#cb313b"/><stop offset=".984" stop-color="#d13030"/><stop offset="1" stop-color="#d13030"/></linearGradient><linearGradient id="p47" gradientUnits="userSpaceOnUse" x1="826" x2="1192" y1="0" y2="0"><stop offset="0" stop-color="#d54032"/><stop offset=".016" stop-color="#d54032"/><stop offset=".049" stop-color="#cc5f33"/><stop offset=".082" stop-color="#c58232"/><stop offset=".131" stop-color="#cca826"/><stop offset=".18" stop-color="#c2b625"/><stop offset=".197" stop-color="#b9b427"/><stop offset=".23" stop-color="#95a52d"/><stop offset=".295" stop-color="#4a7b38"/><stop offset=".328" stop-color="#356c40"/><stop offset=".393" stop-color="#346a5e"/><stop offset=".475" stop-color="#346f91"/><stop offset=".508" stop-color="#366c99"/><stop offset=".574" stop-color="#3c5a8a"/><stop offset=".623" stop-color="#424587"/><stop offset=".689" stop-color="#6b4484"/><stop offset=".738" stop-color="#954584"/><stop offset=".803" stop-color="#c1316c"/><stop offset=".852" stop-color="#cb3060"/><stop offset=".934" stop-color="#c7323b"/><stop offset=".984" stop-color="#cc3130"/><stop offset="1" stop-color="#cc3130"/></linearGradient><linearGradient id="p48" gradientUnits="userSpaceOnUse" x1="826" x2="1192" y1="0" y2="0"><stop offset="0" stop-color="#d14133"/><stop offset=".016" stop-color="#d14133"/><stop offset=".049" stop-color="#c85f34"/><stop offset=".082" stop-color="#c18133"/><stop offset=".131" stop-color="#c7a528"/><stop offset=".18" stop-color="#bcb128"/><stop offset=".213" stop-color="#a2a92c"/><stop offset=".295" stop-color="#427738"/><stop offset=".311" stop-color="#346f3a"/><stop offset=".328" stop-color="#2e6a3e"/><stop offset=".393" stop-color="#34685a"/><stop offset=".475" stop-color="#346b8b"/><stop offset=".508" stop-color="#356992"/><stop offset=".574" stop-color="#3a5886"/><stop offset=".623" stop-color="#3f4584"/><stop offset=".672" stop-color="#59427f"/><stop offset=".754" stop-color="#9c407a"/><stop offset=".803" stop-color="#bd326c"/><stop offset=".869" stop-color="#c63159"/><stop offset=".951" stop-color="#c53336"/><stop offset="1" stop-color="#c73330"/></linearGradient><linearGradient id="p49" gradientUnits="userSpaceOnUse" x1="826" x2="1192" y1="0" y2="0"><stop offset="0" stop-color="#cc4134"/><stop offset=".016" stop-color="#cc4134"/><stop offset=".049" stop-color="#c45e35"/><stop offset=".082" stop-color="#bd8034"/><stop offset=".131" stop-color="#c2a229"/><stop offset=".18" stop-color="#b5ac2b"/><stop offset=".213" stop-color="#9ca32f"/><stop offset=".295" stop-color="#3a7337"/><stop offset=".311" stop-color="#2c6c39"/><stop offset=".328" stop-color="#26683d"/><stop offset=".377" stop-color="#33664d"/><stop offset=".475" stop-color="#336785"/><stop offset=".508" stop-color="#34658c"/><stop offset=".59" stop-color="#375082"/><stop offset=".639" stop-color="#41437e"/><stop offset=".689" stop-color="#5e3f78"/><stop offset=".754" stop-color="#973e74"/><stop offset=".803" stop-color="#b9336c"/><stop offset=".869" stop-color="#bf3058"/><stop offset=".951" stop-color="#c03436"/><stop offset="1" stop-color="#c23430"/></linearGradient><linearGradient id="p50" gradientUnits="userSpaceOnUse" x1="826" x2="1192" y1="0" y2="0"><stop offset="0" stop-color="#c74135"/><stop offset=".016" stop-color="#c74135"/><stop offset=".049" stop-color="#bf5e36"/><stop offset=".098" stop-color="#ba8a32"/><stop offset=".131" stop-color="#bc9e2b"/><stop offset=".18" stop-color="#afa72e"/><stop offset=".213" stop-color="#959d31"/><stop offset=".295" stop-color="#326f37"/><stop offset=".311" stop-color="#236939"/><stop offset=".328" stop-color="#1f663b"/><stop offset=".377" stop-color="#326549"/><stop offset=".459" stop-color="#326378"/><stop offset=".508" stop-color="#336185"/><stop offset=".623" stop-color="#38467c"/><stop offset=".672" stop-color="#4d3e73"/><stop offset=".754" stop-color="#913c6e"/><stop offset=".787" stop-color="#ac366d"/><stop offset=".82" stop-color="#b83268"/><stop offset=".885" stop-color="#b93250"/><stop offset=".967" stop-color="#bc3532"/><stop offset="1" stop-color="#bd3530"/></linearGradient><linearGradient id="p51" gradientUnits="userSpaceOnUse" x1="826" x2="1192" y1="0" y2="0"><stop offset="0" stop-color="#c14136"/><stop offset=".016" stop-color="#c14136"/><stop offset=".049" stop-color="#ba5d37"/><stop offset=".098" stop-color="#b58733"/><stop offset=".148" stop-color="#b49f2c"/><stop offset=".18" stop-color="#a8a131"/><stop offset=".213" stop-color="#8f9734"/><stop offset=".279" stop-color="#3f7237"/><stop offset=".311" stop-color="#1c6638"/><stop offset=".328" stop-color="#18643a"/><stop offset=".377" stop-color="#316446"/><stop offset=".459" stop-color="#325f73"/><stop offset=".508" stop-color="#325e7f"/><stop offset=".623" stop-color="#354779"/><stop offset=".672" stop-color="#473c6d"/><stop offset=".721" stop-color="#6e3c67"/><stop offset=".787" stop-color="#a7376c"/><stop offset=".82" stop-color="#b33368"/><stop offset=".885" stop-color="#b33250"/><stop offset=".967" stop-color="#b73632"/><stop offset="1" stop-color="#b73630"/></linearGradient><linearGradient id="p52" gradientUnits="userSpaceOnUse" x1="826" x2="1192" y1="0" y2="0"><stop offset="0" stop-color="#bb4137"/><stop offset=".016" stop-color="#bb4137"/><stop offset=".049" stop-color="#b55b38"/><stop offset=".098" stop-color="#b08434"/><stop offset=".148" stop-color="#ae9a2e"/><stop offset=".18" stop-color="#a29c33"/><stop offset=".213" stop-color="#899236"/><stop offset=".262" stop-color="#4f7437"/><stop offset=".295" stop-color="#256837"/><stop offset=".311" stop-color="#166438"/><stop offset=".328" stop-color="#136239"/><stop offset=".377" stop-color="#306243"/><stop offset=".459" stop-color="#315c6e"/><stop offset=".508" stop-color="#315b79"/><stop offset=".623" stop-color="#334775"/><stop offset=".672" stop-color="#423a68"/><stop offset=".721" stop-color="#683960"/><stop offset=".77" stop-color="#943966"/><stop offset=".803" stop-color="#aa366a"/><stop offset=".869" stop-color="#ab3056"/><stop offset=".951" stop-color="#b13736"/><stop offset="1" stop-color="#b13730"/></linearGradient><linearGradient id="p53" gradientUnits="userSpaceOnUse" x1="826" x2="1192" y1="0" y2="0"><stop offset="0" stop-color="#b34037"/><stop offset=".016" stop-color="#b34037"/><stop offset=".049" stop-color="#af5938"/><stop offset=".098" stop-color="#ab8034"/><stop offset=".148" stop-color="#a8952f"/><stop offset=".197" stop-color="#929337"/><stop offset=".246" stop-color="#5e7737"/><stop offset=".295" stop-color="#216537"/><stop offset=".311" stop-color="#136237"/><stop offset=".328" stop-color="#106038"/><stop offset=".377" stop-color="#2f6140"/><stop offset=".459" stop-color="#305969"/><stop offset=".508" stop-color="#305873"/><stop offset=".623" stop-color="#314771"/><stop offset=".672" stop-color="#3e3963"/><stop offset=".721" stop-color="#62385a"/><stop offset=".754" stop-color="#7f385d"/><stop offset=".787" stop-color="#9b3867"/><stop offset=".803" stop-color="#a43768"/><stop offset=".869" stop-color="#a43055"/><stop offset=".951" stop-color="#ab3836"/><stop offset="1" stop-color="#ab3730"/></linearGradient><linearGradient id="p54" gradientUnits="userSpaceOnUse" x1="826" x2="1192" y1="0" y2="0"><stop offset="0" stop-color="#ab3f37"/><stop offset=".016" stop-color="#ab3f37"/><stop offset=".049" stop-color="#a75738"/><stop offset=".098" stop-color="#a57b35"/><stop offset=".148" stop-color="#a28f31"/><stop offset=".197" stop-color="#8d8d38"/><stop offset=".246" stop-color="#5c7338"/><stop offset=".295" stop-color="#216237"/><stop offset=".311" stop-color="#125f37"/><stop offset=".328" stop-color="#105e38"/><stop offset=".377" stop-color="#2f5e3e"/><stop offset=".459" stop-color="#2f5664"/><stop offset=".525" stop-color="#2f536e"/><stop offset=".623" stop-color="#2f466d"/><stop offset=".672" stop-color="#3b385f"/><stop offset=".721" stop-color="#5d3656"/><stop offset=".754" stop-color="#793758"/><stop offset=".787" stop-color="#953864"/><stop offset=".803" stop-color="#9d3766"/><stop offset=".869" stop-color="#9d3054"/><stop offset=".951" stop-color="#a53836"/><stop offset="1" stop-color="#a43730"/></linearGradient><linearGradient id="p55" gradientUnits="userSpaceOnUse" x1="826" x2="1192" y1="0" y2="0"><stop offset="0" stop-color="#a13e37"/><stop offset=".016" stop-color="#a13e37"/><stop offset=".098" stop-color="#9e7435"/><stop offset=".148" stop-color="#9c8732"/><stop offset=".197" stop-color="#898639"/><stop offset=".262" stop-color="#4a6938"/><stop offset=".295" stop-color="#236037"/><stop offset=".311" stop-color="#155d37"/><stop offset=".328" stop-color="#125c37"/><stop offset=".377" stop-color="#2e5c3d"/><stop offset=".459" stop-color="#2e5460"/><stop offset=".525" stop-color="#2d5169"/><stop offset=".623" stop-color="#2e4568"/><stop offset=".672" stop-color="#39385c"/><stop offset=".721" stop-color="#593652"/><stop offset=".754" stop-color="#723754"/><stop offset=".787" stop-color="#8d3861"/><stop offset=".82" stop-color="#973661"/><stop offset=".869" stop-color="#953152"/><stop offset=".951" stop-color="#9d3836"/><stop offset="1" stop-color="#9c3730"/></linearGradient><linearGradient id="p56" gradientUnits="userSpaceOnUse" x1="826" x2="1192" y1="0" y2="0"><stop offset="0" stop-color="#963c36"/><stop offset=".016" stop-color="#963c36"/><stop offset=".115" stop-color="#987533"/><stop offset=".164" stop-color="#938135"/><stop offset=".197" stop-color="#868039"/><stop offset=".262" stop-color="#4c6638"/><stop offset=".295" stop-color="#275e37"/><stop offset=".311" stop-color="#1a5b37"/><stop offset=".328" stop-color="#175a37"/><stop offset=".377" stop-color="#2e5a3c"/><stop offset=".459" stop-color="#2c525b"/><stop offset=".525" stop-color="#2b4f64"/><stop offset=".623" stop-color="#2e4464"/><stop offset=".672" stop-color="#373858"/><stop offset=".738" stop-color="#5f354e"/><stop offset=".787" stop-color="#84385d"/><stop offset=".82" stop-color="#8d365e"/><stop offset=".869" stop-color="#8c3251"/><stop offset=".951" stop-color="#953835"/><stop offset="1" stop-color="#943630"/></linearGradient><linearGradient id="p57" gradientUnits="userSpaceOnUse" x1="826" x2="1192" y1="0" y2="0"><stop offset="0" stop-color="#893a35"/><stop offset=".016" stop-color="#893a35"/><stop offset=".131" stop-color="#927234"/><stop offset=".18" stop-color="#897a38"/><stop offset=".23" stop-color="#6c6f39"/><stop offset=".279" stop-color="#3f6038"/><stop offset=".311" stop-color="#215a37"/><stop offset=".328" stop-color="#1d5837"/><stop offset=".377" stop-color="#2e573b"/><stop offset=".475" stop-color="#29505a"/><stop offset=".607" stop-color="#2c4560"/><stop offset=".672" stop-color="#373855"/><stop offset=".738" stop-color="#59354b"/><stop offset=".787" stop-color="#7a3859"/><stop offset=".82" stop-color="#83375b"/><stop offset=".885" stop-color="#86354a"/><stop offset=".951" stop-color="#8c3735"/><stop offset="1" stop-color="#8b3530"/></linearGradient><linearGradient id="p58" gradientUnits="userSpaceOnUse" x1="826" x2="1192" y1="0" y2="0"><stop offset="0" stop-color="#7d3734"/><stop offset=".033" stop-color="#7e3d34"/><stop offset=".131" stop-color="#8b6835"/><stop offset=".18" stop-color="#857238"/><stop offset=".23" stop-color="#6c6b39"/><stop offset=".279" stop-color="#445e38"/><stop offset=".311" stop-color="#285837"/><stop offset=".328" stop-color="#245738"/><stop offset=".393" stop-color="#2e533f"/><stop offset=".475" stop-color="#274f55"/><stop offset=".607" stop-color="#2c435b"/><stop offset=".689" stop-color="#3c3650"/><stop offset=".738" stop-color="#533548"/><stop offset=".803" stop-color="#763858"/><stop offset=".869" stop-color="#7a344e"/><stop offset=".951" stop-color="#833634"/><stop offset="1" stop-color="#823430"/></linearGradient><linearGradient id="p59" gradientUnits="userSpaceOnUse" x1="826" x2="1192" y1="0" y2="0"><stop offset="0" stop-color="#703533"/><stop offset=".033" stop-color="#723933"/><stop offset=".148" stop-color="#856336"/><stop offset=".197" stop-color="#7c6b39"/><stop offset=".262" stop-color="#575f38"/><stop offset=".311" stop-color="#305738"/><stop offset=".344" stop-color="#2a5438"/><stop offset=".41" stop-color="#2c4f42"/><stop offset=".508" stop-color="#244c55"/><stop offset=".656" stop-color="#333a52"/><stop offset=".738" stop-color="#4e3446"/><stop offset=".803" stop-color="#6c3854"/><stop offset=".869" stop-color="#71354c"/><stop offset=".951" stop-color="#7a3634"/><stop offset="1" stop-color="#793330"/></linearGradient><linearGradient id="p60" gradientUnits="userSpaceOnUse" x1="826" x2="1192" y1="0" y2="0"><stop offset="0" stop-color="#653331"/><stop offset=".049" stop-color="#6a3b31"/><stop offset=".148" stop-color="#7f5b37"/><stop offset=".197" stop-color="#796539"/><stop offset=".262" stop-color="#5b5d38"/><stop offset=".311" stop-color="#375538"/><stop offset=".344" stop-color="#2f5238"/><stop offset=".443" stop-color="#284b47"/><stop offset=".508" stop-color="#224b51"/><stop offset=".672" stop-color="#37384d"/><stop offset=".738" stop-color="#493444"/><stop offset=".803" stop-color="#623850"/><stop offset=".869" stop-color="#69364a"/><stop offset=".951" stop-color="#713533"/><stop offset="1" stop-color="#703130"/></linearGradient><linearGradient id="p61" gradientUnits="userSpaceOnUse" x1="826" x2="1192" y1="0" y2="0"><stop offset="0" stop-color="#5a3130"/><stop offset=".066" stop-color="#663b30"/><stop offset=".148" stop-color="#785338"/><stop offset=".213" stop-color="#715f38"/><stop offset=".279" stop-color="#535838"/><stop offset=".328" stop-color="#375138"/><stop offset=".443" stop-color="#274a44"/><stop offset=".508" stop-color="#20494d"/><stop offset=".689" stop-color="#3a3749"/><stop offset=".754" stop-color="#493443"/><stop offset=".82" stop-color="#5c384d"/><stop offset=".869" stop-color="#613748"/><stop offset=".951" stop-color="#693433"/><stop offset="1" stop-color="#693030"/></linearGradient><linearGradient id="p62" gradientUnits="userSpaceOnUse" x1="826" x2="1192" y1="0" y2="0"><stop offset="0" stop-color="#523030"/><stop offset=".049" stop-color="#59342f"/><stop offset=".148" stop-color="#724c38"/><stop offset=".213" stop-color="#6e5a38"/><stop offset=".279" stop-color="#555638"/><stop offset=".328" stop-color="#3b4f38"/><stop offset=".41" stop-color="#2a493d"/><stop offset=".508" stop-color="#204749"/><stop offset=".689" stop-color="#393747"/><stop offset=".754" stop-color="#443441"/><stop offset=".836" stop-color="#57384a"/><stop offset=".885" stop-color="#5d3842"/><stop offset=".967" stop-color="#623131"/><stop offset="1" stop-color="#613030"/></linearGradient><linearGradient id="p63" gradientUnits="userSpaceOnUse" x1="826" x2="1192" y1="0" y2="0"><stop offset="0" stop-color="#482f2f"/><stop offset=".049" stop-color="#50312f"/><stop offset=".148" stop-color="#694438"/><stop offset=".213" stop-color="#675337"/><stop offset=".279" stop-color="#545137"/><stop offset=".361" stop-color="#324838"/><stop offset=".508" stop-color="#214444"/><stop offset=".689" stop-color="#373744"/><stop offset=".754" stop-color="#3f343e"/><stop offset=".852" stop-color="#503745"/><stop offset=".951" stop-color="#583332"/><stop offset="1" stop-color="#582f30"/></linearGradient><linearGradient id="p64" gradientUnits="userSpaceOnUse" x1="826" x2="1192" y1="0" y2="0"><stop offset="0" stop-color="#412e2f"/><stop offset=".066" stop-color="#4c302e"/><stop offset=".164" stop-color="#5d4236"/><stop offset=".246" stop-color="#574b36"/><stop offset=".377" stop-color="#304237"/><stop offset=".508" stop-color="#24403f"/><stop offset=".705" stop-color="#37353e"/><stop offset=".77" stop-color="#3d343d"/><stop offset=".869" stop-color="#4a363f"/><stop offset=".984" stop-color="#4e2f30"/><stop offset="1" stop-color="#4e2f30"/></linearGradient><linearGradient id="p65" gradientUnits="userSpaceOnUse" x1="826" x2="1192" y1="0" y2="0"><stop offset="0" stop-color="#3d2f2f"/><stop offset=".131" stop-color="#4f3834"/><stop offset=".23" stop-color="#4e4334"/><stop offset=".393" stop-color="#2f3d37"/><stop offset=".525" stop-color="#2a3b3b"/><stop offset=".705" stop-color="#36343c"/><stop offset=".885" stop-color="#443539"/><stop offset="1" stop-color="#462f30"/></linearGradient><linearGradient id="p66" gradientUnits="userSpaceOnUse" x1="826" x2="1192" y1="0" y2="0"><stop offset="0" stop-color="#3a2f2f"/><stop offset=".197" stop-color="#453b33"/><stop offset=".443" stop-color="#2f3937"/><stop offset=".721" stop-color="#363338"/><stop offset=".902" stop-color="#3f3334"/><stop offset="1" stop-color="#3f2f30"/></linearGradient><linearGradient id="p67" gradientUnits="userSpaceOnUse" x1="826" x2="1192" y1="0" y2="0"><stop offset="0" stop-color="#382f2f"/><stop offset=".246" stop-color="#3b3632"/><stop offset=".525" stop-color="#313536"/><stop offset=".852" stop-color="#3a3234"/><stop offset="1" stop-color="#3a2f30"/></linearGradient><linearGradient id="p68" gradientUnits="userSpaceOnUse" x1="826" x2="1192" y1="0" y2="0"><stop offset="0" stop-color="#353030"/><stop offset=".721" stop-color="#343234"/><stop offset="1" stop-color="#363030"/></linearGradient><linearGradient id="p69" gradientUnits="userSpaceOnUse" x1="826" x2="1192" y1="0" y2="0"><stop offset="0" stop-color="#343030"/><stop offset=".836" stop-color="#343031"/><stop offset="1" stop-color="#343030"/></linearGradient><linearGradient id="p70" gradientUnits="userSpaceOnUse" x1="826" x2="1192" y1="0" y2="0"><stop offset="0" stop-color="#333030"/><stop offset="1" stop-color="#333030"/></linearGradient><linearGradient id="p71" gradientUnits="userSpaceOnUse" x1="826" x2="1192" y1="0" y2="0"><stop offset="0" stop-color="#333030"/><stop offset="1" stop-color="#333030"/></linearGradient><linearGradient id="p72" gradientUnits="userSpaceOnUse" x1="826" x2="1192" y1="0" y2="0"><stop offset="0" stop-color="#333030"/><stop offset="1" stop-color="#333030"/></linearGradient><linearGradient id="p73" gradientUnits="userSpaceOnUse" x1="826" x2="1192" y1="0" y2="0"><stop offset="0" stop-color="#333030"/><stop offset="1" stop-color="#333030"/></linearGradient><linearGradient id="ov0" gradientUnits="userSpaceOnUse" x1="925" x2="1065" y1="0" y2="0"><stop offset="0" stop-color="#18b884"/><stop offset=".167" stop-color="#18bc96"/><stop offset=".278" stop-color="#13c0af"/><stop offset=".444" stop-color="#07c7e0"/><stop offset=".556" stop-color="#02c7ef"/><stop offset=".889" stop-color="#00bef2"/><stop offset="1" stop-color="#01bbf1"/></linearGradient><linearGradient id="ov1" gradientUnits="userSpaceOnUse" x1="925" x2="1065" y1="0" y2="0"><stop offset="0" stop-color="#17b781"/><stop offset=".167" stop-color="#18bb91"/><stop offset=".278" stop-color="#14bfa8"/><stop offset=".444" stop-color="#08c6da"/><stop offset=".556" stop-color="#03c6ed"/><stop offset=".833" stop-color="#01bef2"/><stop offset="1" stop-color="#01b9f1"/></linearGradient><linearGradient id="ov2" gradientUnits="userSpaceOnUse" x1="925" x2="1065" y1="0" y2="0"><stop offset="0" stop-color="#17b67e"/><stop offset=".222" stop-color="#17bb96"/><stop offset=".333" stop-color="#12c0b1"/><stop offset=".5" stop-color="#06c4e1"/><stop offset=".611" stop-color="#02c3ee"/><stop offset="1" stop-color="#01b7f0"/></linearGradient><linearGradient id="ov3" gradientUnits="userSpaceOnUse" x1="925" x2="1065" y1="0" y2="0"><stop offset="0" stop-color="#16b57b"/><stop offset=".222" stop-color="#17ba91"/><stop offset=".333" stop-color="#13bea9"/><stop offset=".5" stop-color="#07c3dc"/><stop offset=".611" stop-color="#03c1ec"/><stop offset=".944" stop-color="#02b6ef"/><stop offset="1" stop-color="#02b4ef"/></linearGradient><linearGradient id="ov4" gradientUnits="userSpaceOnUse" x1="925" x2="1065" y1="0" y2="0"><stop offset="0" stop-color="#15b477"/><stop offset=".222" stop-color="#17b98c"/><stop offset=".389" stop-color="#11beb3"/><stop offset=".5" stop-color="#08c0d6"/><stop offset=".611" stop-color="#03bee9"/><stop offset=".889" stop-color="#03b3ee"/><stop offset="1" stop-color="#03afed"/></linearGradient><linearGradient id="ov5" gradientUnits="userSpaceOnUse" x1="925" x2="1065" y1="0" y2="0"><stop offset="0" stop-color="#15b373"/><stop offset=".278" stop-color="#16b991"/><stop offset=".389" stop-color="#11bcac"/><stop offset=".556" stop-color="#06bcdd"/><stop offset=".667" stop-color="#04b8ea"/><stop offset="1" stop-color="#05a9eb"/></linearGradient><linearGradient id="ov6" gradientUnits="userSpaceOnUse" x1="925" x2="1065" y1="0" y2="0"><stop offset="0" stop-color="#14b270"/><stop offset=".278" stop-color="#15b78c"/><stop offset=".389" stop-color="#12b9a5"/><stop offset=".556" stop-color="#07b7d7"/><stop offset=".667" stop-color="#05b2e6"/><stop offset="1" stop-color="#07a1e9"/></linearGradient><linearGradient id="ov7" gradientUnits="userSpaceOnUse" x1="925" x2="1065" y1="0" y2="0"><stop offset="0" stop-color="#13b16c"/><stop offset=".278" stop-color="#15b688"/><stop offset=".444" stop-color="#0fb6b0"/><stop offset=".556" stop-color="#08b2d1"/><stop offset=".667" stop-color="#06abe2"/><stop offset=".889" stop-color="#089de7"/><stop offset="1" stop-color="#0997e5"/></linearGradient><linearGradient id="ov8" gradientUnits="userSpaceOnUse" x1="925" x2="1065" y1="0" y2="0"><stop offset="0" stop-color="#13b067"/><stop offset=".278" stop-color="#14b485"/><stop offset=".389" stop-color="#11b39b"/><stop offset=".556" stop-color="#09accb"/><stop offset=".667" stop-color="#08a3dd"/><stop offset=".889" stop-color="#0a94e3"/><stop offset="1" stop-color="#0b8de2"/></linearGradient><linearGradient id="ov9" gradientUnits="userSpaceOnUse" x1="925" x2="1065" y1="0" y2="0"><stop offset="0" stop-color="#12af63"/><stop offset=".278" stop-color="#13b282"/><stop offset=".444" stop-color="#0eaea7"/><stop offset=".611" stop-color="#09a0d1"/><stop offset=".722" stop-color="#0996dd"/><stop offset="1" stop-color="#0c84df"/></linearGradient><linearGradient id="ov10" gradientUnits="userSpaceOnUse" x1="925" x2="1065" y1="0" y2="0"><stop offset="0" stop-color="#12ad5f"/><stop offset=".222" stop-color="#12b076"/><stop offset=".389" stop-color="#0fad96"/><stop offset=".611" stop-color="#099acd"/><stop offset=".778" stop-color="#0b8adc"/><stop offset="1" stop-color="#0e7cdc"/></linearGradient><linearGradient id="ov11" gradientUnits="userSpaceOnUse" x1="925" x2="1065" y1="0" y2="0"><stop offset="0" stop-color="#11ac5c"/><stop offset=".222" stop-color="#11ae73"/><stop offset=".444" stop-color="#0ba7a3"/><stop offset=".611" stop-color="#0994c9"/><stop offset=".778" stop-color="#0c83d9"/><stop offset="1" stop-color="#0e76d9"/></linearGradient><linearGradient id="ov12" gradientUnits="userSpaceOnUse" x1="925" x2="1065" y1="0" y2="0"><stop offset="0" stop-color="#10aa58"/><stop offset=".222" stop-color="#10ac70"/><stop offset=".444" stop-color="#0aa3a2"/><stop offset=".611" stop-color="#0990c6"/><stop offset=".778" stop-color="#0d7ed6"/><stop offset="1" stop-color="#0f71d7"/></linearGradient><linearGradient id="ov13" gradientUnits="userSpaceOnUse" x1="925" x2="1065" y1="0" y2="0"><stop offset="0" stop-color="#10a855"/><stop offset=".222" stop-color="#0fa96d"/><stop offset=".444" stop-color="#08a0a1"/><stop offset=".611" stop-color="#098cc4"/><stop offset=".778" stop-color="#0d79d3"/><stop offset="1" stop-color="#0f6dd4"/></linearGradient><linearGradient id="ov14" gradientUnits="userSpaceOnUse" x1="925" x2="1065" y1="0" y2="0"><stop offset="0" stop-color="#0fa653"/><stop offset=".167" stop-color="#0ea661"/><stop offset=".333" stop-color="#0aa384"/><stop offset=".556" stop-color="#0790b8"/><stop offset=".722" stop-color="#0b7acd"/><stop offset="1" stop-color="#0f6ad2"/></linearGradient><linearGradient id="ov15" gradientUnits="userSpaceOnUse" x1="925" x2="1065" y1="0" y2="0"><stop offset="0" stop-color="#0ea250"/><stop offset=".167" stop-color="#0ca15e"/><stop offset=".333" stop-color="#089d82"/><stop offset=".5" stop-color="#0592ab"/><stop offset=".667" stop-color="#097dc4"/><stop offset=".833" stop-color="#0d6ece"/><stop offset="1" stop-color="#0e68d0"/></linearGradient><linearGradient id="ov16" gradientUnits="userSpaceOnUse" x1="925" x2="1065" y1="0" y2="0"><stop offset="0" stop-color="#0c9c4f"/><stop offset=".167" stop-color="#0a9a5b"/><stop offset=".333" stop-color="#06977f"/><stop offset=".5" stop-color="#048da7"/><stop offset=".667" stop-color="#0879c0"/><stop offset=".889" stop-color="#0d69cc"/><stop offset="1" stop-color="#0e66cd"/></linearGradient><linearGradient id="ov17" gradientUnits="userSpaceOnUse" x1="925" x2="1065" y1="0" y2="0"><stop offset="0" stop-color="#0a954d"/><stop offset=".167" stop-color="#089259"/><stop offset=".333" stop-color="#05907c"/><stop offset=".5" stop-color="#0388a3"/><stop offset=".722" stop-color="#0970c1"/><stop offset="1" stop-color="#0d65ca"/></linearGradient><linearGradient id="ov18" gradientUnits="userSpaceOnUse" x1="925" x2="1065" y1="0" y2="0"><stop offset="0" stop-color="#078e4c"/><stop offset=".167" stop-color="#068a57"/><stop offset=".333" stop-color="#038978"/><stop offset=".556" stop-color="#037ea8"/><stop offset=".722" stop-color="#086ebc"/><stop offset="1" stop-color="#0c63c6"/></linearGradient><linearGradient id="ov19" gradientUnits="userSpaceOnUse" x1="925" x2="1065" y1="0" y2="0"><stop offset="0" stop-color="#05864c"/><stop offset=".167" stop-color="#048355"/><stop offset=".333" stop-color="#028274"/><stop offset=".556" stop-color="#037ba4"/><stop offset=".778" stop-color="#0868ba"/><stop offset="1" stop-color="#0b62c1"/></linearGradient><linearGradient id="ov20" gradientUnits="userSpaceOnUse" x1="925" x2="1065" y1="0" y2="0"><stop offset="0" stop-color="#03804b"/><stop offset=".222" stop-color="#027d5b"/><stop offset=".5" stop-color="#017b96"/><stop offset=".667" stop-color="#056eae"/><stop offset=".944" stop-color="#0a62ba"/><stop offset="1" stop-color="#0b61bb"/></linearGradient><linearGradient id="ov21" gradientUnits="userSpaceOnUse" x1="925" x2="1065" y1="0" y2="0"><stop offset="0" stop-color="#027b4c"/><stop offset=".222" stop-color="#01795a"/><stop offset=".5" stop-color="#017992"/><stop offset=".667" stop-color="#046caa"/><stop offset="1" stop-color="#0a5fb6"/></linearGradient><linearGradient id="ov22" gradientUnits="userSpaceOnUse" x1="925" x2="1065" y1="0" y2="0"><stop offset="0" stop-color="#01784c"/><stop offset=".222" stop-color="#017659"/><stop offset=".444" stop-color="#017883"/><stop offset=".611" stop-color="#036fa1"/><stop offset=".833" stop-color="#0861af"/><stop offset="1" stop-color="#0a5db1"/></linearGradient><linearGradient id="ov23" gradientUnits="userSpaceOnUse" x1="925" x2="1065" y1="0" y2="0"><stop offset="0" stop-color="#01754c"/><stop offset=".222" stop-color="#007358"/><stop offset=".389" stop-color="#007573"/><stop offset=".611" stop-color="#036d9e"/><stop offset=".778" stop-color="#0762aa"/><stop offset="1" stop-color="#0a5bac"/></linearGradient><linearGradient id="ov24" gradientUnits="userSpaceOnUse" x1="925" x2="1065" y1="0" y2="0"><stop offset="0" stop-color="#00734d"/><stop offset=".222" stop-color="#007157"/><stop offset=".389" stop-color="#00726f"/><stop offset=".611" stop-color="#036b9a"/><stop offset=".833" stop-color="#085da8"/><stop offset="1" stop-color="#0b59a9"/></linearGradient><linearGradient id="ov25" gradientUnits="userSpaceOnUse" x1="925" x2="1065" y1="0" y2="0"><stop offset="0" stop-color="#00714d"/><stop offset=".278" stop-color="#006e5b"/><stop offset=".5" stop-color="#016e80"/><stop offset=".667" stop-color="#05649c"/><stop offset=".889" stop-color="#0a5aa6"/><stop offset="1" stop-color="#0c58a6"/></linearGradient><linearGradient id="ov26" gradientUnits="userSpaceOnUse" x1="925" x2="1065" y1="0" y2="0"><stop offset="0" stop-color="#006f4e"/><stop offset=".278" stop-color="#006c5a"/><stop offset=".444" stop-color="#016c70"/><stop offset=".667" stop-color="#066298"/><stop offset=".889" stop-color="#0b58a3"/><stop offset="1" stop-color="#0c56a4"/></linearGradient><linearGradient id="ov27" gradientUnits="userSpaceOnUse" x1="925" x2="1065" y1="0" y2="0"><stop offset="0" stop-color="#006d4f"/><stop offset=".278" stop-color="#006959"/><stop offset=".5" stop-color="#016775"/><stop offset=".722" stop-color="#075d98"/><stop offset="1" stop-color="#0d55a2"/></linearGradient><linearGradient id="ov28" gradientUnits="userSpaceOnUse" x1="925" x2="1065" y1="0" y2="0"><stop offset="0" stop-color="#006b50"/><stop offset=".333" stop-color="#00665c"/><stop offset=".556" stop-color="#026379"/><stop offset=".778" stop-color="#095a98"/><stop offset="1" stop-color="#0d54a0"/></linearGradient><linearGradient id="ov29" gradientUnits="userSpaceOnUse" x1="925" x2="1065" y1="0" y2="0"><stop offset="0" stop-color="#006a50"/><stop offset=".333" stop-color="#00635b"/><stop offset=".556" stop-color="#026174"/><stop offset=".833" stop-color="#0a5797"/><stop offset="1" stop-color="#0d549f"/></linearGradient><linearGradient id="ov30" gradientUnits="userSpaceOnUse" x1="925" x2="1065" y1="0" y2="0"><stop offset="0" stop-color="#006851"/><stop offset=".389" stop-color="#00605f"/><stop offset=".722" stop-color="#065b86"/><stop offset=".944" stop-color="#0c559a"/><stop offset="1" stop-color="#0d549d"/></linearGradient><linearGradient id="ov31" gradientUnits="userSpaceOnUse" x1="925" x2="1065" y1="0" y2="0"><stop offset="0" stop-color="#006652"/><stop offset=".389" stop-color="#005f5f"/><stop offset=".944" stop-color="#0c5597"/><stop offset="1" stop-color="#0d549a"/></linearGradient><linearGradient id="ov32" gradientUnits="userSpaceOnUse" x1="925" x2="1065" y1="0" y2="0"><stop offset="0" stop-color="#006453"/><stop offset=".389" stop-color="#005e5f"/><stop offset=".833" stop-color="#075988"/><stop offset="1" stop-color="#0c5497"/></linearGradient><linearGradient id="ov33" gradientUnits="userSpaceOnUse" x1="925" x2="1065" y1="0" y2="0"><stop offset="0" stop-color="#006254"/><stop offset=".389" stop-color="#005d5f"/><stop offset=".833" stop-color="#065a83"/><stop offset="1" stop-color="#0b5593"/></linearGradient><linearGradient id="ov34" gradientUnits="userSpaceOnUse" x1="925" x2="1065" y1="0" y2="0"><stop offset="0" stop-color="#006055"/><stop offset=".389" stop-color="#005d60"/><stop offset=".889" stop-color="#065a83"/><stop offset="1" stop-color="#0a568f"/></linearGradient><linearGradient id="ov35" gradientUnits="userSpaceOnUse" x1="925" x2="1065" y1="0" y2="0"><stop offset="0" stop-color="#005f55"/><stop offset=".389" stop-color="#005c61"/><stop offset=".889" stop-color="#055b7f"/><stop offset="1" stop-color="#08588a"/></linearGradient><linearGradient id="ov36" gradientUnits="userSpaceOnUse" x1="925" x2="1065" y1="0" y2="0"><stop offset="0" stop-color="#005d56"/><stop offset=".389" stop-color="#005c62"/><stop offset=".889" stop-color="#045c7b"/><stop offset="1" stop-color="#075985"/></linearGradient><linearGradient id="ov37" gradientUnits="userSpaceOnUse" x1="925" x2="1065" y1="0" y2="0"><stop offset="0" stop-color="#005c57"/><stop offset=".333" stop-color="#005c5f"/><stop offset=".944" stop-color="#045c7c"/><stop offset="1" stop-color="#055b80"/></linearGradient><linearGradient id="ov38" gradientUnits="userSpaceOnUse" x1="925" x2="1065" y1="0" y2="0"><stop offset="0" stop-color="#005b57"/><stop offset=".389" stop-color="#005c63"/><stop offset="1" stop-color="#045c7c"/></linearGradient><clipPath id="ovc"><path d="M1011.5,177.7 C1022.2,181.3 1040.3,191.5 1047.5,206.5 C1054.7,221.5 1054.0,251.4 1054.6,267.5 C1055.2,283.6 1054.6,288.1 1051.0,303.0 C1047.4,317.9 1040.2,343.2 1033.0,357.0 C1025.8,370.8 1017.6,384.2 1008.0,386.0 C998.4,387.8 985.8,375.8 975.6,368.0 C965.4,360.2 953.6,355.8 947.0,339.0 C940.4,322.2 936.0,290.2 936.0,267.5 C936.0,244.8 939.2,216.8 947.0,203.0 C954.8,189.2 972.2,189.2 983.0,185.0 C993.8,180.8 1000.8,174.1 1011.5,177.7 Z"/></clipPath><filter id="ovb" x="-10%" y="-10%" width="120%" height="120%"><feGaussianBlur stdDeviation="3.5"/></filter><filter id="pbl" x="-5%" y="-5%" width="110%" height="110%"><feGaussianBlur stdDeviation="2.5"/></filter></defs><g filter="url(#pbl)"><rect x="826" y="82" width="366" height="5.5" fill="url(#p0)"/><rect x="826" y="87" width="366" height="5.5" fill="url(#p1)"/><rect x="826" y="92" width="366" height="5.5" fill="url(#p2)"/><rect x="826" y="97" width="366" height="5.5" fill="url(#p3)"/><rect x="826" y="102" width="366" height="5.5" fill="url(#p4)"/><rect x="826" y="107" width="366" height="5.5" fill="url(#p5)"/><rect x="826" y="112" width="366" height="5.5" fill="url(#p6)"/><rect x="826" y="117" width="366" height="5.5" fill="url(#p7)"/><rect x="826" y="122" width="366" height="5.5" fill="url(#p8)"/><rect x="826" y="127" width="366" height="5.5" fill="url(#p9)"/><rect x="826" y="132" width="366" height="5.5" fill="url(#p10)"/><rect x="826" y="137" width="366" height="5.5" fill="url(#p11)"/><rect x="826" y="142" width="366" height="5.5" fill="url(#p12)"/><rect x="826" y="147" width="366" height="5.5" fill="url(#p13)"/><rect x="826" y="152" width="366" height="5.5" fill="url(#p14)"/><rect x="826" y="157" width="366" height="5.5" fill="url(#p15)"/><rect x="826" y="162" width="366" height="5.5" fill="url(#p16)"/><rect x="826" y="167" width="366" height="5.5" fill="url(#p17)"/><rect x="826" y="172" width="366" height="5.5" fill="url(#p18)"/><rect x="826" y="177" width="366" height="5.5" fill="url(#p19)"/><rect x="826" y="182" width="366" height="5.5" fill="url(#p20)"/><rect x="826" y="187" width="366" height="5.5" fill="url(#p21)"/><rect x="826" y="192" width="366" height="5.5" fill="url(#p22)"/><rect x="826" y="197" width="366" height="5.5" fill="url(#p23)"/><rect x="826" y="202" width="366" height="5.5" fill="url(#p24)"/><rect x="826" y="207" width="366" height="5.5" fill="url(#p25)"/><rect x="826" y="212" width="366" height="5.5" fill="url(#p26)"/><rect x="826" y="217" width="366" height="5.5" fill="url(#p27)"/><rect x="826" y="222" width="366" height="5.5" fill="url(#p28)"/><rect x="826" y="227" width="366" height="5.5" fill="url(#p29)"/><rect x="826" y="232" width="366" height="5.5" fill="url(#p30)"/><rect x="826" y="237" width="366" height="5.5" fill="url(#p31)"/><rect x="826" y="242" width="366" height="5.5" fill="url(#p32)"/><rect x="826" y="247" width="366" height="5.5" fill="url(#p33)"/><rect x="826" y="252" width="366" height="5.5" fill="url(#p34)"/><rect x="826" y="257" width="366" height="5.5" fill="url(#p35)"/><rect x="826" y="262" width="366" height="5.5" fill="url(#p36)"/><rect x="826" y="267" width="366" height="5.5" fill="url(#p37)"/><rect x="826" y="272" width="366" height="5.5" fill="url(#p38)"/><rect x="826" y="277" width="366" height="5.5" fill="url(#p39)"/><rect x="826" y="282" width="366" height="5.5" fill="url(#p40)"/><rect x="826" y="287" width="366" height="5.5" fill="url(#p41)"/><rect x="826" y="292" width="366" height="5.5" fill="url(#p42)"/><rect x="826" y="297" width="366" height="5.5" fill="url(#p43)"/><rect x="826" y="302" width="366" height="5.5" fill="url(#p44)"/><rect x="826" y="307" width="366" height="5.5" fill="url(#p45)"/><rect x="826" y="312" width="366" height="5.5" fill="url(#p46)"/><rect x="826" y="317" width="366" height="5.5" fill="url(#p47)"/><rect x="826" y="322" width="366" height="5.5" fill="url(#p48)"/><rect x="826" y="327" width="366" height="5.5" fill="url(#p49)"/><rect x="826" y="332" width="366" height="5.5" fill="url(#p50)"/><rect x="826" y="337" width="366" height="5.5" fill="url(#p51)"/><rect x="826" y="342" width="366" height="5.5" fill="url(#p52)"/><rect x="826" y="347" width="366" height="5.5" fill="url(#p53)"/><rect x="826" y="352" width="366" height="5.5" fill="url(#p54)"/><rect x="826" y="357" width="366" height="5.5" fill="url(#p55)"/><rect x="826" y="362" width="366" height="5.5" fill="url(#p56)"/><rect x="826" y="367" width="366" height="5.5" fill="url(#p57)"/><rect x="826" y="372" width="366" height="5.5" fill="url(#p58)"/><rect x="826" y="377" width="366" height="5.5" fill="url(#p59)"/><rect x="826" y="382" width="366" height="5.5" fill="url(#p60)"/><rect x="826" y="387" width="366" height="5.5" fill="url(#p61)"/><rect x="826" y="392" width="366" height="5.5" fill="url(#p62)"/><rect x="826" y="397" width="366" height="5.5" fill="url(#p63)"/><rect x="826" y="402" width="366" height="5.5" fill="url(#p64)"/><rect x="826" y="407" width="366" height="5.5" fill="url(#p65)"/><rect x="826" y="412" width="366" height="5.5" fill="url(#p66)"/><rect x="826" y="417" width="366" height="5.5" fill="url(#p67)"/><rect x="826" y="422" width="366" height="5.5" fill="url(#p68)"/><rect x="826" y="427" width="366" height="5.5" fill="url(#p69)"/><rect x="826" y="432" width="366" height="5.5" fill="url(#p70)"/><rect x="826" y="437" width="366" height="5.5" fill="url(#p71)"/><rect x="826" y="442" width="366" height="5.5" fill="url(#p72)"/><rect x="826" y="447" width="366" height="5.5" fill="url(#p73)"/></g><g filter="url(#ovb)"><g clip-path="url(#ovc)"><rect x="925" y="170" width="140" height="6.5" fill="url(#ov0)"/><rect x="925" y="176" width="140" height="6.5" fill="url(#ov1)"/><rect x="925" y="182" width="140" height="6.5" fill="url(#ov2)"/><rect x="925" y="188" width="140" height="6.5" fill="url(#ov3)"/><rect x="925" y="194" width="140" height="6.5" fill="url(#ov4)"/><rect x="925" y="200" width="140" height="6.5" fill="url(#ov5)"/><rect x="925" y="206" width="140" height="6.5" fill="url(#ov6)"/><rect x="925" y="212" width="140" height="6.5" fill="url(#ov7)"/><rect x="925" y="218" width="140" height="6.5" fill="url(#ov8)"/><rect x="925" y="224" width="140" height="6.5" fill="url(#ov9)"/><rect x="925" y="230" width="140" height="6.5" fill="url(#ov10)"/><rect x="925" y="236" width="140" height="6.5" fill="url(#ov11)"/><rect x="925" y="242" width="140" height="6.5" fill="url(#ov12)"/><rect x="925" y="248" width="140" height="6.5" fill="url(#ov13)"/><rect x="925" y="254" width="140" height="6.5" fill="url(#ov14)"/><rect x="925" y="260" width="140" height="6.5" fill="url(#ov15)"/><rect x="925" y="266" width="140" height="6.5" fill="url(#ov16)"/><rect x="925" y="272" width="140" height="6.5" fill="url(#ov17)"/><rect x="925" y="278" width="140" height="6.5" fill="url(#ov18)"/><rect x="925" y="284" width="140" height="6.5" fill="url(#ov19)"/><rect x="925" y="290" width="140" height="6.5" fill="url(#ov20)"/><rect x="925" y="296" width="140" height="6.5" fill="url(#ov21)"/><rect x="925" y="302" width="140" height="6.5" fill="url(#ov22)"/><rect x="925" y="308" width="140" height="6.5" fill="url(#ov23)"/><rect x="925" y="314" width="140" height="6.5" fill="url(#ov24)"/><rect x="925" y="320" width="140" height="6.5" fill="url(#ov25)"/><rect x="925" y="326" width="140" height="6.5" fill="url(#ov26)"/><rect x="925" y="332" width="140" height="6.5" fill="url(#ov27)"/><rect x="925" y="338" width="140" height="6.5" fill="url(#ov28)"/><rect x="925" y="344" width="140" height="6.5" fill="url(#ov29)"/><rect x="925" y="350" width="140" height="6.5" fill="url(#ov30)"/><rect x="925" y="356" width="140" height="6.5" fill="url(#ov31)"/><rect x="925" y="362" width="140" height="6.5" fill="url(#ov32)"/><rect x="925" y="368" width="140" height="6.5" fill="url(#ov33)"/><rect x="925" y="374" width="140" height="6.5" fill="url(#ov34)"/><rect x="925" y="380" width="140" height="6.5" fill="url(#ov35)"/><rect x="925" y="386" width="140" height="6.5" fill="url(#ov36)"/><rect x="925" y="392" width="140" height="6.5" fill="url(#ov37)"/><rect x="925" y="398" width="140" height="6.5" fill="url(#ov38)"/></g></g></svg>
<!-- zoom row -->
<div class="cb" style="left:833px;top:455px"></div>
<div class="txt" style="left:860px;top:456px">Zoom</div>
<div class="a" style="left:928px;top:443px;width:265px;height:41px;background:#808080;border:2px solid #222"></div>
<div class="btn" style="left:937px;top:450px;width:58px;height:29px"><span style="top:6px">Inp</span></div>
<div class="btn" style="left:1002px;top:450px;width:58px;height:29px"><span style="top:6px">I&gt;M</span></div>
<div class="btn" style="left:1066px;top:450px;width:57px;height:29px"><span style="top:6px">Outp</span></div>
<div class="btn" style="left:1131px;top:450px;width:59px;height:29px;background:#ffffcc;border-color:#fff #606060 #606060 #fff"><span class="bold" style="top:6px;font-size:17px;letter-spacing:1px">O&gt;M</span></div>
<div class="btn" style="left:833px;top:482px;width:73px;height:30px"><span style="top:6px">Z-Out</span></div>
<div class="txt" style="left:949px;top:495px">Black Pt. Comp.</div>
<div class="sunk" style="left:1070px;top:488px;width:119px;height:28px"><div class="txt" style="left:4px;top:5px">Off</div><div class="arrowbtn"></div></div>

<!-- 3D select -->
<div class="a" style="left:833px;top:520px;width:363px;height:40px;background:#808080;border:2px solid #1e1e1e"></div>
<div class="sunk" style="left:838px;top:524px;width:352px;height:30px"><div class="txt bold" style="left:6px;top:7px;letter-spacing:0.5px">3D L*a*b* (wire input, solid output)</div><div class="arrowbtn"></div></div>

<!-- main controls panel -->
<div class="frame" style="left:833px;top:562px;width:363px;height:241px;border-width:1.5px"></div>
<div class="btn" style="left:842px;top:572px;width:119px;height:33px"><span style="top:8px">Reset scale</span></div>
<div class="btn" style="left:968px;top:572px;width:115px;height:33px"><span style="top:8px">Reset view</span></div>
<div class="btn" style="left:1091px;top:572px;width:99px;height:33px"><span style="top:8px">Top view</span></div>
<div class="cb" style="left:841px;top:615px"><svg width="16" height="16" style="position:absolute;left:0;top:0"><path d="M3 8 L6 11 L13 4" stroke="#000" stroke-width="2.6" fill="none"/></svg></div>
<div class="txt" style="left:868px;top:616px">Light</div>
<div class="sunk" style="left:945px;top:611px;width:244px;height:29px"><div class="txt" style="left:5px;top:7px">High res wireframe/flat</div><div class="arrowbtn"></div></div>
<div class="btn" style="left:841px;top:642px;width:75px;height:30px;border-color:#fdfdfd #000 #000 #fdfdfd;box-shadow:inset -1px -1px #808080"><span style="top:6px">Rotate</span></div>
<div class="txt" style="left:952px;top:652px">Transparency 1</div>
<div class="slider" style="left:1067px;top:650px;width:123px;height:19px"><div class="sb l" style="left:0"></div><div class="thumb" style="left:86px;width:12px"></div><div class="sb r" style="right:0"></div></div>
<div class="btn" style="left:841px;top:679px;width:75px;height:27px"><span style="top:5px">More</span></div>
<div class="txt" style="left:960px;top:682px">Vectors 0</div>
<div class="slider" style="left:1038px;top:680px;width:152px;height:19px"><div class="sb l" style="left:0;width:24px"></div><div class="thumb" style="left:24px;width:12px"></div><div class="sb r" style="right:0;width:25px"></div></div>
<div class="txt" style="left:1115px;top:709px">Saturation</div>
<div class="txt" style="left:1024px;top:733px">1</div>
<div class="slider" style="left:1039px;top:730px;width:151px;height:19px"><div class="sb l" style="left:0;width:25px"></div><div class="thumb" style="left:106px;width:18px"></div><div class="sb r" style="right:0;width:27px"></div></div>
<div class="a" style="left:833px;top:712px;width:131px;height:45px;border-top:1.5px solid #1e1e1e;border-right:1.5px solid #1e1e1e"></div>
<div class="a" style="left:833px;top:755px;width:363px;height:1.5px;background:#1e1e1e"></div>
<div class="btn" style="left:841px;top:720px;width:116px;height:32px"><span class="bold" style="top:7px">Print Test</span></div>
<div class="a" style="left:841px;top:766px;width:346px;height:27px;border:1px solid;border-color:#888 #fff #fff #888;box-shadow:inset 1px 1px #a0a0a0;background:#f0f0f0"><div class="txt" style="left:0;right:0;top:5px;text-align:center">not selected</div></div>

<!-- Display A -->
<div class="frame" style="left:843px;top:809px;width:215px;height:84px;border-width:1.5px"></div>
<div class="txt bold" style="left:858px;top:820px">Display A</div>
<div class="btn" style="left:980px;top:816px;width:71px;height:34px"><span class="bold" style="top:8px">View</span></div>
<div class="sunk" style="left:848px;top:854px;width:58px;height:28px"><div class="txt" style="left:4px;top:6px">1</div><div class="arrowbtn"></div></div>
<div class="txt" style="left:921px;top:861px;letter-spacing:0.5px">IN  OUT</div>
<div class="sunk" style="left:994px;top:855px;width:57px;height:28px"><div class="txt" style="left:4px;top:6px">3</div><div class="arrowbtn"></div></div>
<!-- Display B -->
<div class="frame" style="left:843px;top:899px;width:215px;height:84px;border-width:1.5px"></div>
<div class="txt bold" style="left:858px;top:910px">Display B</div>
<div class="btn" style="left:982px;top:906px;width:70px;height:35px"><span class="bold" style="top:8px">View</span></div>
<div class="sunk" style="left:848px;top:946px;width:58px;height:28px"><div class="txt" style="left:4px;top:6px">2</div><div class="arrowbtn"></div></div>
<div class="txt" style="left:921px;top:951px;letter-spacing:0.5px">IN  OUT</div>
<div class="sunk" style="left:995px;top:947px;width:57px;height:28px"><div class="txt" style="left:4px;top:6px">4</div><div class="arrowbtn"></div></div>

<div class="btn" style="left:1086px;top:809px;width:104px;height:34px"><span style="top:8px">Help</span></div>
<div class="btn" style="left:1086px;top:857px;width:104px;height:34px"><span style="top:9px">Exit</span></div>

<!-- logo -->
<svg class="a" style="left:1069px;top:905px" width="123" height="75" viewBox="0 0 123 75">
  <defs>
    <linearGradient id="lgb" x1="0" x2="1"><stop offset="0" stop-color="#000068"/><stop offset="1" stop-color="#0000d8"/></linearGradient>
    <linearGradient id="lgg" x1="0" x2="1"><stop offset="0" stop-color="#002000"/><stop offset="0.4" stop-color="#005800"/><stop offset="1" stop-color="#008000"/></linearGradient>
  </defs>
  <rect width="123" height="75" fill="url(#lgb)"/>
  <polygon points="0,0 123,0 123,49.5 0,1.5" fill="#ffffff"/>
  <polygon points="0,0 123,0 123,17.5" fill="url(#lgg)"/>
  <polygon points="0,0.5 123,27 123,35" fill="#d03c10"/>
  <polygon points="0,1 123,40 123,45.5" fill="#a800a8"/>
  <path d="M11.3,11.1 C8,11.5 5.5,14 5.5,18.7 C5.8,25 7,30 8.4,33.8 C10,38 12,42 14.2,43.8 L20,42 L22,40.5 L28.2,39.7 L48,30.9 C42,26 38,23.5 37.6,23.3 C33,19.5 29,16.5 26,15.2 C20,12.2 15,11 11.3,11.1 Z" fill="#ffffc4"/>
  <text x="3" y="69.5" font-family="Liberation Serif" font-style="italic" font-size="26" fill="#fff" textLength="117" lengthAdjust="spacingAndGlyphs">Gamutvision</text>
</svg>

<!-- bottom profile rows -->
<div class="txt" style="left:530px;top:867px;color:#8c8c8c;font-size:18px">a*</div>
<div class="txt bold" style="left:8px;top:880px">1</div>
<div class="sunk" style="left:26px;top:874px;width:382px;height:29px;background:#ffffdd"><div class="txt" style="left:5px;top:7px">RR Palo Duro Etching Can PRO-2000_mfgr.icc</div><div class="arrowbtn"></div></div>
<div class="sunk" style="left:417px;top:874px;width:382px;height:29px"><div class="txt" style="left:5px;top:7px">EW3280U #1 2022-01-28 14-06 D5000 2.2 M-S</div><div class="arrowbtn"></div></div>
<div class="txt bold" style="left:805px;top:880px">3</div>

<div class="a" style="left:5px;top:909px;width:20px;height:42px;background:#e2e2e2"><svg width="20" height="42"><path d="M10 0 L10 31" stroke="#4a4a4a" stroke-width="4.5"/><path d="M3 30 L17 30 L10 40 Z" fill="#4a4a4a"/></svg></div>
<div class="a" style="left:26px;top:906px;width:337px;height:47px;background:#4a7fcf;border-left:2px solid #0a1a3a;border-right:2px solid #0a1a3a"></div>
<div class="btn" style="left:33px;top:913px;width:72px;height:36px;background:#ffffcc;border-color:#fff #303030 #303030 #fff;box-shadow:inset -1px -1px #808080"><span class="bold" style="top:9px">View</span></div>
<div class="sunk" style="left:140px;top:914px;width:216px;height:31px;background:#ffffe8"><div class="txt" style="left:5px;top:7px">Colorimetric</div><div class="arrowbtn"></div></div>
<div class="txt" style="left:375px;top:922px">Rendering</div>
<div class="a" style="left:462px;top:905px;width:337px;height:48px;background:#7f7f7f;border-left:2px solid #303030"></div>
<div class="sunk" style="left:467px;top:913px;width:218px;height:32px;background:#f0f0f0"><div class="txt" style="left:5px;top:8px">Colorimetric</div><div class="arrowbtn"></div></div>
<div class="btn" style="left:721px;top:913px;width:72px;height:34px"><span class="bold" style="top:8px">View</span></div>
<div class="a" style="left:802px;top:909px;width:20px;height:42px;background:#e2e2e2"><svg width="20" height="42"><path d="M10 0 L10 31" stroke="#4a4a4a" stroke-width="4.5"/><path d="M3 30 L17 30 L10 40 Z" fill="#4a4a4a"/></svg></div>

<div class="txt bold" style="left:8px;top:960px">2</div>
<div class="sunk" style="left:26px;top:953px;width:382px;height:29px;background:#e4ffe4"><div class="txt" style="left:5px;top:7px">CN_P2000_RR_Duro_Etching.icm</div><div class="arrowbtn"></div></div>
<div class="sunk" style="left:417px;top:953px;width:382px;height:29px"><div class="txt" style="left:5px;top:7px">CN_P2000_Moab_Lustre_CM_Ar_Ver2.icm</div><div class="arrowbtn"></div></div>
<div class="txt bold" style="left:805px;top:960px">4</div>

</body></html>
